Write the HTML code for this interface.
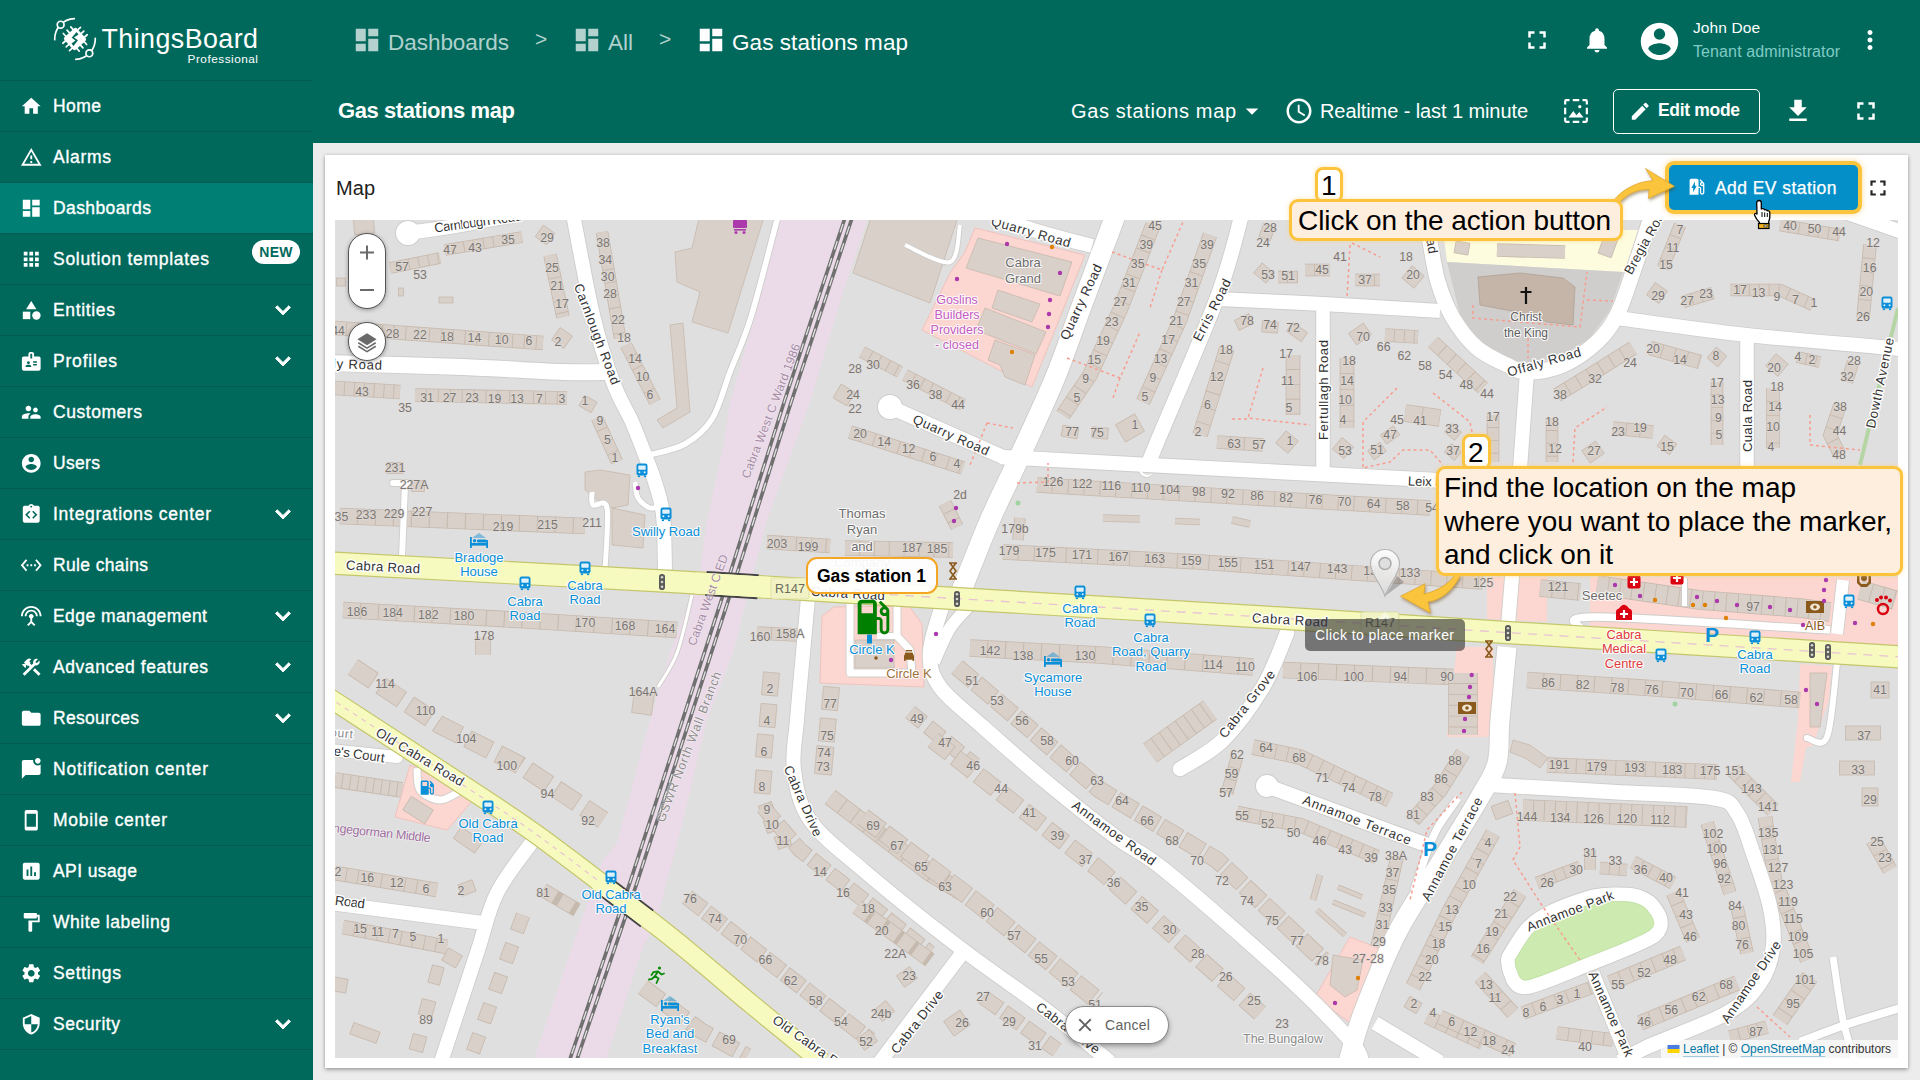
<!DOCTYPE html>
<html lang="en"><head><meta charset="utf-8"><title>ThingsBoard - Gas stations map</title>
<style>
*{box-sizing:border-box;margin:0;padding:0}
html,body{width:1920px;height:1080px;overflow:hidden;background:#eee;font-family:"Liberation Sans",sans-serif;}
.ic{position:absolute;display:block;overflow:visible}
.t{position:absolute;white-space:nowrap;line-height:1}
#sidebar{position:absolute;left:0;top:0;width:313px;height:1080px;background:#00695c;overflow:hidden}
.mi{position:absolute;left:0;width:313px;height:51px;border-top:1px solid rgba(0,0,0,.13)}
.mi.active{background:#008075;border-top-color:#005a4e}
.mi .ic{}
.ml{position:absolute;left:53px;top:0;line-height:50px;font-size:17.5px;color:#fff;white-space:nowrap;font-weight:400;letter-spacing:.2px;-webkit-text-stroke:.35px #fff}
.new{position:absolute;left:252px;top:6px;width:48px;height:24px;border-radius:12px;background:#fff;color:#00695c;font-size:14px;font-weight:700;text-align:center;line-height:24px;letter-spacing:.3px}
#hdr{position:absolute;left:313px;top:0;width:1607px;height:143px;background:#00695c}
#hdr .t{color:#fff}
#content{position:absolute;left:313px;top:143px;width:1607px;height:937px;background:#ececec}
#widget{position:absolute;left:325px;top:155px;width:1583px;height:913px;background:#fff;box-shadow:0 2px 4px rgba(0,0,0,.28),0 0 3px rgba(0,0,0,.16)}
#map{position:absolute;left:335px;top:220px;width:1563px;height:838px;overflow:hidden;background:#e0dfdf}
#map svg.m{position:absolute;left:0;top:0}

</style></head>
<body>
<div id="sidebar"><svg class="ic" style="left:49px;top:13px;width:52px;height:52px" viewBox="0 0 52 52" fill="none" stroke="#fff"><path d="M5.71 26.71 A20.3 20.3 0 0 1 25.29 5.71" stroke-width="1.7" stroke-linecap="round"/><path d="M46.29 25.29 A20.3 20.3 0 0 1 26.71 46.29" stroke-width="1.7" stroke-linecap="round"/><circle cx="11.65" cy="11.65" r="3.400" fill="#00695c" stroke-width="1.7"/><circle cx="40.35" cy="40.35" r="3.400" fill="#00695c" stroke-width="1.7"/><g transform="rotate(48 26 26)" stroke="none" fill="#fff"><rect x="17.5" y="17.5" width="17" height="17" rx="2.2"/><rect x="20.15" y="13.3" width="1.7" height="25.4" rx=".8"/><rect x="13.3" y="20.15" width="25.4" height="1.7" rx=".8"/><rect x="25.15" y="13.3" width="1.7" height="25.4" rx=".8"/><rect x="13.3" y="25.15" width="25.4" height="1.7" rx=".8"/><rect x="30.15" y="13.3" width="1.7" height="25.4" rx=".8"/><rect x="13.3" y="30.15" width="25.4" height="1.7" rx=".8"/></g><path d="M27.5 19 L29.5 21.5 L25 24.5 L29 27.2 L24.5 33 L22.5 30.5 L26.5 27.5 L22.7 24.8 Z" fill="#00695c" stroke="none"/></svg>
<div class="t" style="left:101.500px;top:25.500px;font-size:26.800px;color:#fff;letter-spacing:0.456px">ThingsBoard</div>
<div class="t" style="left:187.500px;top:53.500px;font-size:11.800px;color:#fff;letter-spacing:0.507px">Professional</div>
<div class="mi" style="top:80px"><svg class="ic" style="left:20px;top:13.75px;width:22.5px;height:22.5px" viewBox="0 0 24 24" fill="#fff" ><path d="M10 20v-6h4v6h5v-8h3L12 3 2 12h3v8z"/></svg><span class="ml" style="letter-spacing:0.439px">Home</span></div><div class="mi" style="top:131px"><svg class="ic" style="left:20px;top:13.75px;width:22.5px;height:22.5px" viewBox="0 0 24 24" fill="#fff" ><path d="M12 5.99L19.53 19H4.47L12 5.99M12 2L1 21h22L12 2zm1 14h-2v2h2v-2zm0-6h-2v4h2v-4z"/></svg><span class="ml" style="letter-spacing:0.709px">Alarms</span></div><div class="mi active" style="top:182px"><svg class="ic" style="left:20px;top:13.75px;width:22.5px;height:22.5px" viewBox="0 0 24 24" fill="#fff" ><path d="M3 13h8V3H3v10zm0 8h8v-6H3v6zm10 0h8V11h-8v10zm0-18v6h8V3h-8z"/></svg><span class="ml" style="letter-spacing:0.403px">Dashboards</span></div><div class="mi" style="top:233px"><svg class="ic" style="left:20px;top:13.75px;width:22.5px;height:22.5px" viewBox="0 0 24 24" fill="#fff" ><path d="M4 8h4V4H4v4zm6 12h4v-4h-4v4zm-6 0h4v-4H4v4zm0-6h4v-4H4v4zm6 0h4v-4h-4v4zm6-10v4h4V4h-4zm-6 4h4V4h-4v4zm6 6h4v-4h-4v4zm0 6h4v-4h-4v4z"/></svg><span class="ml" style="letter-spacing:0.707px">Solution templates</span><span class="new">NEW</span></div><div class="mi" style="top:284px"><svg class="ic" style="left:20px;top:13.75px;width:22.5px;height:22.5px" viewBox="0 0 24 24" fill="#fff" ><path d="M12 2l-5.5 9h11z"/><circle cx="17.5" cy="17.5" r="4.5"/><path d="M3 13.500h8v8H3z"/></svg><span class="ml" style="letter-spacing:0.657px">Entities</span><svg class="ic" style="left:267.5px;top:10px;width:30px;height:30px" viewBox="0 0 24 24" fill="#fff" ><path d="M16.590 8.590L12 13.170 7.410 8.590 6 10l6 6 6-6z" stroke="#fff" stroke-width=".7"/></svg></div><div class="mi" style="top:335px"><svg class="ic" style="left:20px;top:13.75px;width:22.5px;height:22.5px" viewBox="0 0 24 24" fill="#fff" ><path d="M20 7h-5V4c0-1.100-.9-2-2-2h-2c-1.100 0-2 .9-2 2v3H4c-1.100 0-2 .9-2 2v11c0 1.100.9 2 2 2h16c1.100 0 2-.9 2-2V9c0-1.100-.9-2-2-2zM9 12c.83 0 1.500.67 1.500 1.500S9.830 15 9 15s-1.500-.67-1.500-1.500S8.170 12 9 12zm3 6H6v-.75c0-1 2-1.500 3-1.500s3 .5 3 1.500V18zm1-9h-2V4h2v5zm5 7.500h-4V15h4v1.500zm0-3h-4V12h4v1.500z"/></svg><span class="ml" style="letter-spacing:0.804px">Profiles</span><svg class="ic" style="left:267.5px;top:10px;width:30px;height:30px" viewBox="0 0 24 24" fill="#fff" ><path d="M16.590 8.590L12 13.170 7.410 8.590 6 10l6 6 6-6z" stroke="#fff" stroke-width=".7"/></svg></div><div class="mi" style="top:386px"><svg class="ic" style="left:20px;top:13.75px;width:22.5px;height:22.5px" viewBox="0 0 24 24" fill="#fff" ><path d="M16.500 12c1.380 0 2.490-1.120 2.490-2.500S17.880 7 16.500 7C15.120 7 14 8.120 14 9.500s1.120 2.500 2.500 2.500zM9 11c1.660 0 2.990-1.340 2.990-3S10.660 5 9 5C7.340 5 6 6.340 6 8s1.340 3 3 3zm7.500 3c-1.830 0-5.500.92-5.500 2.750V19h11v-2.250c0-1.830-3.670-2.750-5.500-2.750zM9 13c-2.330 0-7 1.170-7 3.500V19h7v-2.250c0-.85.33-2.340 2.370-3.470C10.500 13.100 9.660 13 9 13z"/></svg><span class="ml" style="letter-spacing:0.549px">Customers</span></div><div class="mi" style="top:437px"><svg class="ic" style="left:20px;top:13.75px;width:22.5px;height:22.5px" viewBox="0 0 24 24" fill="#fff" ><path d="M12 2C6.480 2 2 6.480 2 12s4.480 10 10 10 10-4.480 10-10S17.520 2 12 2zm0 3c1.660 0 3 1.340 3 3s-1.340 3-3 3-3-1.340-3-3 1.340-3 3-3zm0 14.200c-2.500 0-4.710-1.280-6-3.220.03-1.990 4-3.080 6-3.080 1.990 0 5.970 1.090 6 3.080-1.290 1.940-3.500 3.220-6 3.220z"/></svg><span class="ml" style="letter-spacing:0.324px">Users</span></div><div class="mi" style="top:488px"><svg class="ic" style="left:20px;top:13.75px;width:22.5px;height:22.5px" viewBox="0 0 24 24" fill="#fff" ><path fill-rule="evenodd" d="M19 3h-4.180C14.400 1.840 13.300 1 12 1s-2.400.84-2.820 2H5c-1.100 0-2 .9-2 2v14c0 1.100.9 2 2 2h14c1.100 0 2-.9 2-2V5c0-1.100-.9-2-2-2zm-7 0c.55 0 1 .45 1 1s-.45 1-1 1-1-.45-1-1 .45-1 1-1zM11 9.400L9.800 8.200 5.500 12.500l4.300 4.300L11 15.600 7.900 12.500zM13 9.400l1.200-1.200 4.300 4.300-4.300 4.300L13 15.600l3.100-3.100z"/></svg><span class="ml" style="letter-spacing:0.725px">Integrations center</span><svg class="ic" style="left:267.5px;top:10px;width:30px;height:30px" viewBox="0 0 24 24" fill="#fff" ><path d="M16.590 8.590L12 13.170 7.410 8.590 6 10l6 6 6-6z" stroke="#fff" stroke-width=".7"/></svg></div><div class="mi" style="top:539px"><svg class="ic" style="left:20px;top:13.75px;width:22.5px;height:22.5px" viewBox="0 0 24 24" fill="#fff" ><path d="M7.770 6.760L6.230 5.480.82 12l5.410 6.520 1.540-1.280L3.420 12l4.350-5.240zM7 13h2v-2H7v2zm10-2h-2v2h2v-2zm-6 2h2v-2h-2v2zm6.770-7.520l-1.540 1.280L20.580 12l-4.350 5.240 1.540 1.280L23.180 12l-5.410-6.520z"/></svg><span class="ml" style="letter-spacing:0.356px">Rule chains</span></div><div class="mi" style="top:590px"><svg class="ic" style="left:20px;top:13.75px;width:22.5px;height:22.5px" viewBox="0 0 24 24" fill="#fff" ><path d="M12 5c-3.870 0-7 3.130-7 7h2c0-2.760 2.240-5 5-5s5 2.240 5 5h2c0-3.870-3.130-7-7-7zm1 9.290c.88-.39 1.500-1.260 1.500-2.290 0-1.380-1.120-2.500-2.500-2.500S9.500 10.620 9.500 12c0 1.020.62 1.900 1.500 2.290v3.300L7.590 21 9 22.410l3-3 3 3L16.410 21 13 17.590v-3.300zM12 1C5.930 1 1 5.930 1 12h2c0-4.970 4.030-9 9-9s9 4.030 9 9h2c0-6.070-4.930-11-11-11z"/></svg><span class="ml" style="letter-spacing:0.436px">Edge management</span><svg class="ic" style="left:267.5px;top:10px;width:30px;height:30px" viewBox="0 0 24 24" fill="#fff" ><path d="M16.590 8.590L12 13.170 7.410 8.590 6 10l6 6 6-6z" stroke="#fff" stroke-width=".7"/></svg></div><div class="mi" style="top:641px"><svg class="ic" style="left:20px;top:13.75px;width:22.5px;height:22.5px" viewBox="0 0 24 24" fill="#fff" ><path d="M13.783 15.172l2.121-2.121 5.996 5.996-2.121 2.121z"/><path d="M17.500 10c1.930 0 3.500-1.570 3.500-3.500 0-.58-.16-1.120-.41-1.600l-2.700 2.700-1.490-1.490 2.700-2.700c-.48-.25-1.020-.41-1.600-.41C15.570 3 14 4.570 14 6.500c0 .41.08.8.21 1.160l-1.850 1.850-1.780-1.780.71-.71-1.410-1.410L12 3.490c-1.170-1.170-3.070-1.170-4.240 0L4.220 7.030l1.410 1.410H2.810l-.71.71 3.540 3.540.71-.71V9.150l1.410 1.410.71-.71 1.780 1.780-7.410 7.410 2.120 2.120L16.340 9.790c.36.130.75.210 1.160.210z"/></svg><span class="ml" style="letter-spacing:0.566px">Advanced features</span><svg class="ic" style="left:267.5px;top:10px;width:30px;height:30px" viewBox="0 0 24 24" fill="#fff" ><path d="M16.590 8.590L12 13.170 7.410 8.590 6 10l6 6 6-6z" stroke="#fff" stroke-width=".7"/></svg></div><div class="mi" style="top:692px"><svg class="ic" style="left:20px;top:13.75px;width:22.5px;height:22.5px" viewBox="0 0 24 24" fill="#fff" ><path d="M10 4H4c-1.100 0-1.990.9-1.990 2L2 18c0 1.100.9 2 2 2h16c1.100 0 2-.9 2-2V8c0-1.100-.9-2-2-2h-8l-2-2z"/></svg><span class="ml" style="letter-spacing:0.293px">Resources</span><svg class="ic" style="left:267.5px;top:10px;width:30px;height:30px" viewBox="0 0 24 24" fill="#fff" ><path d="M16.590 8.590L12 13.170 7.410 8.590 6 10l6 6 6-6z" stroke="#fff" stroke-width=".7"/></svg></div><div class="mi" style="top:743px"><svg class="ic" style="left:20px;top:13.75px;width:22.5px;height:22.5px" viewBox="0 0 24 24" fill="#fff" ><path d="M22 6.980V16c0 1.100-.9 2-2 2H6l-4 4V4c0-1.100.9-2 2-2h10.100c-.06.32-.1.66-.1 1 0 2.760 2.240 5 5 5 1.130 0 2.160-.39 3-1.020zM16 3c0 1.660 1.340 3 3 3s3-1.340 3-3-1.340-3-3-3-3 1.340-3 3z"/></svg><span class="ml" style="letter-spacing:0.829px">Notification center</span></div><div class="mi" style="top:794px"><svg class="ic" style="left:20px;top:13.75px;width:22.5px;height:22.5px" viewBox="0 0 24 24" fill="#fff" ><path d="M17 1.010L7 1c-1.100 0-2 .9-2 2v18c0 1.100.9 2 2 2h10c1.100 0 2-.9 2-2V3c0-1.100-.9-1.990-2-1.990zM17 19H7V5h10v14z"/></svg><span class="ml" style="letter-spacing:0.745px">Mobile center</span></div><div class="mi" style="top:845px"><svg class="ic" style="left:20px;top:13.75px;width:22.5px;height:22.5px" viewBox="0 0 24 24" fill="#fff" ><path d="M19 3H5c-1.100 0-2 .9-2 2v14c0 1.100.9 2 2 2h14c1.100 0 2-.9 2-2V5c0-1.100-.9-2-2-2zM9 17H7v-7h2v7zm4 0h-2V7h2v10zm4 0h-2v-4h2v4z"/></svg><span class="ml" style="letter-spacing:0.405px">API usage</span></div><div class="mi" style="top:896px"><svg class="ic" style="left:20px;top:13.75px;width:22.5px;height:22.5px" viewBox="0 0 24 24" fill="#fff" ><path d="M18 4V3c0-.55-.45-1-1-1H5c-.55 0-1 .45-1 1v4c0 .55.45 1 1 1h12c.55 0 1-.45 1-1V6h1v4H9v11c0 .55.45 1 1 1h2c.55 0 1-.45 1-1v-9h8V4h-3z"/></svg><span class="ml" style="letter-spacing:0.544px">White labeling</span></div><div class="mi" style="top:947px"><svg class="ic" style="left:20px;top:13.75px;width:22.5px;height:22.5px" viewBox="0 0 24 24" fill="#fff" ><path d="M19.140 12.940c.04-.3.06-.61.06-.94 0-.32-.02-.64-.07-.94l2.030-1.580c.18-.14.23-.41.12-.61l-1.920-3.320c-.12-.22-.37-.29-.59-.22l-2.390.96c-.5-.38-1.030-.7-1.620-.94l-.36-2.540c-.04-.24-.24-.41-.48-.41h-3.840c-.24 0-.43.17-.47.41l-.36 2.540c-.59.24-1.130.57-1.620.94l-2.390-.96c-.22-.08-.47 0-.59.22L2.740 8.870c-.12.21-.08.47.12.61l2.030 1.580c-.05.3-.09.63-.09.94s.02.64.07.94l-2.030 1.580c-.18.14-.23.41-.12.61l1.920 3.320c.12.22.37.29.59.22l2.390-.96c.5.38 1.030.7 1.620.94l.36 2.540c.05.24.24.41.48.41h3.840c.24 0 .44-.17.47-.41l.36-2.540c.59-.24 1.130-.56 1.620-.94l2.390.96c.22.08.47 0 .59-.22l1.920-3.320c.12-.22.07-.47-.12-.61l-2.010-1.580zM12 15.600c-1.980 0-3.600-1.620-3.600-3.600s1.620-3.600 3.600-3.600 3.600 1.620 3.600 3.600-1.620 3.600-3.600 3.600z"/></svg><span class="ml" style="letter-spacing:0.679px">Settings</span></div><div class="mi" style="top:998px"><svg class="ic" style="left:20px;top:13.75px;width:22.5px;height:22.5px" viewBox="0 0 24 24" fill="#fff" ><path d="M12 1L3 5v6c0 5.550 3.840 10.740 9 12 5.160-1.260 9-6.450 9-12V5l-9-4zm0 10.990h7c-.53 4.120-3.280 7.790-7 8.940V12H5V6.300l7-3.110v8.800z"/></svg><span class="ml" style="letter-spacing:0.539px">Security</span><svg class="ic" style="left:267.5px;top:10px;width:30px;height:30px" viewBox="0 0 24 24" fill="#fff" ><path d="M16.590 8.590L12 13.170 7.410 8.590 6 10l6 6 6-6z" stroke="#fff" stroke-width=".7"/></svg></div><div class="mi" style="top:1049px;height:1px"></div></div>
<div id="hdr"></div>
<div id="content"></div>
<svg class="ic" style="left:352px;top:25px;width:30px;height:30px" viewBox="0 0 24 24" fill="rgba(255,255,255,.7)" ><path d="M3 13h8V3H3v10zm0 8h8v-6H3v6zm10 0h8V11h-8v10zm0-18v6h8V3h-8z"/></svg>
<div class="t" style="left:388px;top:32px;font-size:22.5px;color:rgba(255,255,255,.7);letter-spacing:-0.036px">Dashboards</div>
<div class="t" style="left:535px;top:28px;font-size:21px;color:rgba(255,255,255,.7);letter-spacing:-0.266px">&gt;</div>
<svg class="ic" style="left:571.5px;top:25px;width:30px;height:30px" viewBox="0 0 24 24" fill="rgba(255,255,255,.7)" ><path d="M3 13h8V3H3v10zm0 8h8v-6H3v6zm10 0h8V11h-8v10zm0-18v6h8V3h-8z"/></svg>
<div class="t" style="left:608px;top:32px;font-size:22.5px;color:rgba(255,255,255,.7);letter-spacing:-0.008px">All</div>
<div class="t" style="left:659px;top:28px;font-size:21px;color:rgba(255,255,255,.7);letter-spacing:-0.266px">&gt;</div>
<svg class="ic" style="left:695.5px;top:25px;width:30px;height:30px" viewBox="0 0 24 24" fill="#fff" ><path d="M3 13h8V3H3v10zm0 8h8v-6H3v6zm10 0h8V11h-8v10zm0-18v6h8V3h-8z"/></svg>
<div class="t" style="left:732px;top:32px;font-size:22.5px;color:#fff;letter-spacing:0.061px">Gas stations map</div>
<div class="t" style="left:338px;top:100px;font-size:22px;font-weight:700;color:#fff;letter-spacing:-0.426px">Gas stations map</div>
<svg class="ic" style="left:1522px;top:25px;width:30px;height:30px" viewBox="0 0 24 24" fill="#fff" ><path d="M7 14H5v5h5v-2H7v-3zm-2-4h2V7h3V5H5v5zm12 7h-3v2h5v-5h-2v3zM14 5v2h3v3h2V5h-5z"/></svg>
<svg class="ic" style="left:1582px;top:25px;width:30px;height:30px" viewBox="0 0 24 24" fill="#fff" ><path d="M12 22c1.100 0 2-.9 2-2h-4c0 1.100.89 2 2 2zm6-6v-5c0-3.070-1.640-5.640-4.500-6.320V4c0-.83-.67-1.500-1.500-1.500s-1.500.67-1.500 1.500v.68C7.630 5.360 6 7.920 6 11v5l-2 2v1h16v-1l-2-2z"/></svg>
<svg class="ic" style="left:1637px;top:18.500px;width:45px;height:45px" viewBox="0 0 24 24" fill="#fff" ><path d="M12 2C6.480 2 2 6.480 2 12s4.480 10 10 10 10-4.480 10-10S17.520 2 12 2zm0 3c1.660 0 3 1.340 3 3s-1.340 3-3 3-3-1.340-3-3 1.340-3 3-3zm0 14.200c-2.500 0-4.710-1.280-6-3.220.03-1.990 4-3.080 6-3.080 1.990 0 5.970 1.090 6 3.080-1.290 1.940-3.500 3.220-6 3.220z"/></svg>
<div class="t" style="left:1693px;top:20px;font-size:15.500px;color:#fff;letter-spacing:0.092px">John Doe</div>
<div class="t" style="left:1693px;top:44px;font-size:16px;color:#80cbc4;letter-spacing:0.107px">Tenant administrator</div>
<svg class="ic" style="left:1854.500px;top:25px;width:30px;height:30px" viewBox="0 0 24 24" fill="#fff" ><path d="M12 8c1.100 0 2-.9 2-2s-.9-2-2-2-2 .9-2 2 .9 2 2 2zm0 2c-1.100 0-2 .9-2 2s.9 2 2 2 2-.9 2-2-.9-2-2-2zm0 6c-1.100 0-2 .9-2 2s.9 2 2 2 2-.9 2-2-.9-2-2-2z"/></svg>
<div class="t" style="left:1071px;top:101px;font-size:20px;color:#fff;letter-spacing:0.625px">Gas stations map</div>
<svg class="ic" style="left:1237px;top:96px;width:30px;height:30px" viewBox="0 0 24 24" fill="#fff" ><path d="M7 10l5 5 5-5z"/></svg>
<svg class="ic" style="left:1284px;top:96px;width:30px;height:30px" viewBox="0 0 24 24" fill="#fff" ><path d="M11.990 2C6.470 2 2 6.480 2 12s4.470 10 9.990 10C17.520 22 22 17.520 22 12S17.520 2 11.990 2zM12 20c-4.420 0-8-3.580-8-8s3.580-8 8-8 8 3.580 8 8-3.580 8-8 8zm.5-13H11v6l5.250 3.150.75-1.230-4.500-2.670z"/></svg>
<div class="t" style="left:1320px;top:101px;font-size:20px;color:#fff;letter-spacing:-0.090px">Realtime - last 1 minute</div>
<svg class="ic" style="left:1563px;top:98px;width:26px;height:26px" viewBox="0 0 24 24" fill="#fff" ><path d="M3 6V3h3V1H3a2 2 0 0 0-2 2v3h2zm3 15H3v-3H1v3a2 2 0 0 0 2 2h3v-2zm15-3v3h-3v2h3a2 2 0 0 0 2-2v-3h-2zM18 3h3v3h2V3a2 2 0 0 0-2-2h-3v2zM9 1h6v2H9zM9 21h6v2H9zM1 9h2v6H1zM21 9h2v6h-2z"/><path d="M5 18l4.500-6 3 4 2.500-3 4 5z"/><circle cx="15.500" cy="8" r="1.500"/></svg>
<div style="position:absolute;left:1613px;top:89px;width:147px;height:45px;border:1px solid #fff;border-radius:5px"></div>
<svg class="ic" style="left:1629px;top:100px;width:22.500px;height:22.500px" viewBox="0 0 24 24" fill="#fff" ><path d="M3 17.250V21h3.750L17.810 9.940l-3.750-3.750L3 17.250zM20.710 7.040c.39-.39.39-1.020 0-1.410l-2.340-2.340c-.39-.39-1.020-.39-1.410 0l-1.830 1.830 3.750 3.750 1.830-1.830z"/></svg>
<div class="t" style="left:1658px;top:102px;font-size:17.500px;font-weight:700;color:#fff;letter-spacing:-0.324px">Edit mode</div>
<svg class="ic" style="left:1782.500px;top:96px;width:30px;height:30px" viewBox="0 0 24 24" fill="#fff" ><path d="M19 9h-4V3H9v6H5l7 7 7-7zM5 18v2h14v-2H5z"/></svg>
<svg class="ic" style="left:1850.500px;top:96px;width:30px;height:30px" viewBox="0 0 24 24" fill="#fff" ><path d="M7 14H5v5h5v-2H7v-3zm-2-4h2V7h3V5H5v5zm12 7h-3v2h5v-5h-2v3zM14 5v2h3v3h2V5h-5z"/></svg>

<div id="widget"></div>
<div class="t" style="left:336px;top:178px;font-size:20px;color:#212121;letter-spacing:0.047px">Map</div>
<div id="map">
<svg class="m" width="1563" height="838" viewBox="335 220 1563 838" font-family="'Liberation Sans','DejaVu Sans',sans-serif">
<defs><clipPath id="cpE"><rect x="770" y="500" width="1200" height="220"/></clipPath><clipPath id="cpW"><rect x="300" y="650" width="310" height="250"/></clipPath></defs>
<rect x="335" y="220" width="1563" height="838" fill="#e0dfdf"/>
<polygon points="780.0,214.0 760.0,298.0 730.0,402.0 723.0,448.0 707.0,520.0 700.0,573.0 670.0,653.0 650.0,720.0 617.0,843.0 603.0,860.0 570.0,953.0 533.0,1062.0 605.0,1062.0 643.0,947.0 657.0,920.0 683.0,820.0 707.0,720.0 733.0,653.0 753.0,573.0 767.0,520.0 810.0,402.0 843.0,292.0 869.0,214.0" fill="#ebdbe8"/>
<polygon points="975.0,228.0 1085.0,255.0 1032.0,387.0 922.0,330.0 950.0,273.0 965.0,252.0" fill="#fcd6d0" stroke="#f0bdb6" stroke-width="0.8"/>
<polygon points="822.0,616.0 834.0,607.0 909.0,606.0 922.0,624.0 924.0,687.0 820.0,683.0" fill="#fcd6d0" stroke="#f0bdb6" stroke-width="0.8"/>
<polygon points="395.0,817.0 410.0,765.0 440.0,780.0 473.0,800.0 447.0,830.0" fill="#fcd6d0" stroke="#f0bdb6" stroke-width="0.8"/>
<polygon points="1487.0,577.0 1547.0,577.0 1547.0,622.0 1487.0,619.0" fill="#fcd6d0"/>
<polygon points="1590.0,577.0 1898.0,577.0 1898.0,646.0 1590.0,627.0" fill="#fcd6d0"/>
<polygon points="1457.0,647.0 1493.0,647.0 1493.0,737.0 1447.0,737.0" fill="#fcd6d0"/>
<polygon points="1800.0,664.0 1832.0,666.0 1829.0,700.0 1813.0,745.0 1806.0,748.0 1800.0,782.0 1791.0,782.0 1798.0,720.0" fill="#fcd6d0"/>
<polygon points="1350.0,937.0 1383.0,950.0 1350.0,1023.0 1315.0,997.0" fill="#fcd6d0" stroke="#f0bdb6" stroke-width="0.8"/>
<polygon points="1443.0,230.0 1647.0,230.0 1623.0,272.0 1447.0,262.0" fill="#fdfcde"/>
<polygon points="1447.0,262.0 1623.0,272.0 1610.0,310.0 1590.0,338.0 1560.0,357.0 1527.0,363.0 1500.0,357.0 1478.0,340.0 1460.0,315.0" fill="#cfcecd"/>
<path d="M1898 308 L1860 465" stroke="#b5d6a4" stroke-width="4" fill="none"/>
<rect x="354.0" y="218.0" width="20" height="16" fill="#d9d0c9" stroke="#c6b9ad" stroke-width=".8" transform="rotate(-5 364 226)"/>
<rect x="336.5" y="278.0" width="9" height="8" fill="#d9d0c9" stroke="#c6b9ad" stroke-width=".8" transform="rotate(0 341 282)"/>
<rect x="398.5" y="288.0" width="5" height="8" fill="#d9d0c9" stroke="#c6b9ad" stroke-width=".8" transform="rotate(0 401 292)"/>
<rect x="439.0" y="297.0" width="14" height="6" fill="#d9d0c9" stroke="#c6b9ad" stroke-width=".8" transform="rotate(0 446 300)"/>
<path d="M390.0 268.0 L440.0 258.0" stroke="#c6b9ad" stroke-width="11.6" fill="none"/>
<path d="M390.0 268.0 L440.0 258.0" stroke="#d9d0c9" stroke-width="10" fill="none" stroke-dasharray="9 .9"/>
<path d="M445.0 250.0 L522.0 237.0" stroke="#c6b9ad" stroke-width="11.6" fill="none"/>
<path d="M445.0 250.0 L522.0 237.0" stroke="#d9d0c9" stroke-width="10" fill="none" stroke-dasharray="9 .9"/>
<rect x="538.0" y="228.0" width="14" height="14" fill="#d9d0c9" stroke="#c6b9ad" stroke-width=".8" transform="rotate(35 545 235)"/>
<path d="M550.0 255.0 L563.0 317.0" stroke="#c6b9ad" stroke-width="13.6" fill="none"/>
<path d="M550.0 255.0 L563.0 317.0" stroke="#d9d0c9" stroke-width="12" fill="none" stroke-dasharray="11 .9"/>
<path d="M335.0 328.0 L543.0 343.0" stroke="#c6b9ad" stroke-width="14.6" fill="none"/>
<path d="M335.0 328.0 L543.0 343.0" stroke="#d9d0c9" stroke-width="13" fill="none" stroke-dasharray="11 .9"/>
<rect x="554.5" y="330.5" width="15" height="15" fill="#d9d0c9" stroke="#c6b9ad" stroke-width=".8" transform="rotate(35 562 338)"/>
<path d="M335.0 388.0 L400.0 392.0" stroke="#c6b9ad" stroke-width="14.6" fill="none"/>
<path d="M335.0 388.0 L400.0 392.0" stroke="#d9d0c9" stroke-width="13" fill="none" stroke-dasharray="9 .9"/>
<path d="M415.0 395.0 L567.0 398.0" stroke="#c6b9ad" stroke-width="13.6" fill="none"/>
<path d="M415.0 395.0 L567.0 398.0" stroke="#d9d0c9" stroke-width="12" fill="none" stroke-dasharray="11 .9"/>
<rect x="581.0" y="398.0" width="14" height="12" fill="#d9d0c9" stroke="#c6b9ad" stroke-width=".8" transform="rotate(30 588 404)"/>
<path d="M597.0 418.0 L617.0 462.0" stroke="#c6b9ad" stroke-width="12.6" fill="none"/>
<path d="M597.0 418.0 L617.0 462.0" stroke="#d9d0c9" stroke-width="11" fill="none" stroke-dasharray="12 .9"/>
<path d="M602.0 232.0 L620.0 338.0" stroke="#c6b9ad" stroke-width="12.6" fill="none"/>
<path d="M602.0 232.0 L620.0 338.0" stroke="#d9d0c9" stroke-width="11" fill="none" stroke-dasharray="12 .9"/>
<path d="M626.0 345.0 L655.0 402.0" stroke="#c6b9ad" stroke-width="12.6" fill="none"/>
<path d="M626.0 345.0 L655.0 402.0" stroke="#d9d0c9" stroke-width="11" fill="none" stroke-dasharray="12 .9"/>
<polygon points="670.0,325.0 683.0,323.0 690.0,412.0 663.0,428.0 657.0,420.0 677.0,408.0" fill="#d9d0c9" stroke="#c6b9ad" stroke-width=".8"/>
<path d="M340.0 516.0 L585.0 526.0" stroke="#c6b9ad" stroke-width="16.6" fill="none"/>
<path d="M340.0 516.0 L585.0 526.0" stroke="#d9d0c9" stroke-width="15" fill="none" stroke-dasharray="17 1"/>
<rect x="387.0" y="462.5" width="16" height="11" fill="#d9d0c9" stroke="#c6b9ad" stroke-width=".8" transform="rotate(0 395 468)"/>
<rect x="411.5" y="480.5" width="13" height="11" fill="#d9d0c9" stroke="#c6b9ad" stroke-width=".8" transform="rotate(0 418 486)"/>
<polygon points="585.0,472.0 600.0,470.0 630.0,475.0 628.0,505.0 612.0,508.0 598.0,500.0 585.0,490.0" fill="#d9d0c9" stroke="#c6b9ad" stroke-width=".8"/>
<polygon points="612.0,508.0 645.0,515.0 643.0,548.0 612.0,545.0" fill="#d9d0c9" stroke="#c6b9ad" stroke-width=".8"/>
<polygon points="700.0,214.0 765.0,214.0 728.0,333.0 692.0,322.0 700.0,292.0 677.0,282.0 675.0,252.0 692.0,248.0" fill="#d9d0c9" stroke="#c6b9ad" stroke-width=".8"/>
<polygon points="872.0,214.0 959.0,214.0 930.0,303.0 853.0,273.0" fill="#d9d0c9" stroke="#c6b9ad" stroke-width=".8"/>
<path d="M862.0 352.0 L900.0 372.0" stroke="#c6b9ad" stroke-width="12.6" fill="none"/>
<path d="M862.0 352.0 L900.0 372.0" stroke="#d9d0c9" stroke-width="11" fill="none" stroke-dasharray="9 .9"/>
<path d="M905.0 375.0 L963.0 405.0" stroke="#c6b9ad" stroke-width="12.6" fill="none"/>
<path d="M905.0 375.0 L963.0 405.0" stroke="#d9d0c9" stroke-width="11" fill="none" stroke-dasharray="9 .9"/>
<rect x="836.0" y="387.0" width="16" height="16" fill="#d9d0c9" stroke="#c6b9ad" stroke-width=".8" transform="rotate(30 844 395)"/>
<path d="M850.0 432.0 L963.0 468.0" stroke="#c6b9ad" stroke-width="13.6" fill="none"/>
<path d="M850.0 432.0 L963.0 468.0" stroke="#d9d0c9" stroke-width="12" fill="none" stroke-dasharray="12 .9"/>
<path d="M767.0 542.0 L830.0 546.0" stroke="#c6b9ad" stroke-width="14.6" fill="none"/>
<path d="M767.0 542.0 L830.0 546.0" stroke="#d9d0c9" stroke-width="13" fill="none" stroke-dasharray="14 .9"/>
<path d="M845.0 548.0 L953.0 550.0" stroke="#c6b9ad" stroke-width="15.6" fill="none"/>
<path d="M845.0 548.0 L953.0 550.0" stroke="#d9d0c9" stroke-width="14" fill="none" stroke-dasharray="14 .9"/>
<path d="M945.0 503.0 L957.0 527.0" stroke="#c6b9ad" stroke-width="13.6" fill="none"/>
<path d="M945.0 503.0 L957.0 527.0" stroke="#d9d0c9" stroke-width="12" fill="none" stroke-dasharray="9 .9"/>
<polygon points="978.0,238.0 1072.0,262.0 1060.0,296.0 966.0,268.0" fill="#d9d0c9" stroke="#c6b9ad" stroke-width=".8"/>
<polygon points="998.0,290.0 1040.0,304.0 1032.0,322.0 992.0,308.0" fill="#d9d0c9" stroke="#c6b9ad" stroke-width=".8"/>
<polygon points="985.0,308.0 1046.0,332.0 1036.0,354.0 976.0,330.0" fill="#d9d0c9" stroke="#c6b9ad" stroke-width=".8"/>
<polygon points="995.0,340.0 1035.0,355.0 1025.0,385.0 1005.0,377.0 1000.0,365.0 988.0,360.0" fill="#d9d0c9" stroke="#c6b9ad" stroke-width=".8"/>
<path d="M1153.0 225.0 L1120.0 310.0 L1090.0 375.0 L1063.0 415.0" stroke="#c6b9ad" stroke-width="15.6" fill="none"/>
<path d="M1153.0 225.0 L1120.0 310.0 L1090.0 375.0 L1063.0 415.0" stroke="#d9d0c9" stroke-width="14" fill="none" stroke-dasharray="13 .9"/>
<path d="M1210.0 235.0 L1180.0 320.0 L1143.0 402.0" stroke="#c6b9ad" stroke-width="14.6" fill="none"/>
<path d="M1210.0 235.0 L1180.0 320.0 L1143.0 402.0" stroke="#d9d0c9" stroke-width="13" fill="none" stroke-dasharray="13 .9"/>
<rect x="1062.0" y="426.5" width="16" height="11" fill="#d9d0c9" stroke="#c6b9ad" stroke-width=".8" transform="rotate(10 1070 432)"/>
<rect x="1092.0" y="427.5" width="16" height="11" fill="#d9d0c9" stroke="#c6b9ad" stroke-width=".8" transform="rotate(5 1100 433)"/>
<rect x="1119.0" y="418.0" width="22" height="20" fill="#d9d0c9" stroke="#c6b9ad" stroke-width=".8" transform="rotate(-30 1130 428)"/>
<path d="M1227.0 348.0 L1200.0 435.0" stroke="#c6b9ad" stroke-width="15.6" fill="none"/>
<path d="M1227.0 348.0 L1200.0 435.0" stroke="#d9d0c9" stroke-width="14" fill="none" stroke-dasharray="15 .9"/>
<rect x="1236.0" y="316.5" width="16" height="11" fill="#d9d0c9" stroke="#c6b9ad" stroke-width=".8" transform="rotate(-25 1244 322)"/>
<rect x="1262.0" y="321.5" width="16" height="11" fill="#d9d0c9" stroke="#c6b9ad" stroke-width=".8" transform="rotate(5 1270 327)"/>
<rect x="1288.0" y="326.5" width="18" height="11" fill="#d9d0c9" stroke="#c6b9ad" stroke-width=".8" transform="rotate(35 1297 332)"/>
<path d="M1293.0 355.0 L1293.0 415.0" stroke="#c6b9ad" stroke-width="14.6" fill="none"/>
<path d="M1293.0 355.0 L1293.0 415.0" stroke="#d9d0c9" stroke-width="13" fill="none" stroke-dasharray="14 .9"/>
<path d="M1217.0 442.0 L1263.0 445.0" stroke="#c6b9ad" stroke-width="13.6" fill="none"/>
<path d="M1217.0 442.0 L1263.0 445.0" stroke="#d9d0c9" stroke-width="12" fill="none" stroke-dasharray="13 .9"/>
<rect x="1279.0" y="434.0" width="16" height="16" fill="#d9d0c9" stroke="#c6b9ad" stroke-width=".8" transform="rotate(40 1287 442)"/>
<path d="M1347.0 358.0 L1347.0 428.0" stroke="#c6b9ad" stroke-width="14.6" fill="none"/>
<path d="M1347.0 358.0 L1347.0 428.0" stroke="#d9d0c9" stroke-width="13" fill="none" stroke-dasharray="15 .9"/>
<rect x="1351.0" y="327.0" width="18" height="14" fill="#d9d0c9" stroke="#c6b9ad" stroke-width=".8" transform="rotate(-35 1360 334)"/>
<path d="M1385.0 335.0 L1418.0 337.0" stroke="#c6b9ad" stroke-width="13.6" fill="none"/>
<path d="M1385.0 335.0 L1418.0 337.0" stroke="#d9d0c9" stroke-width="12" fill="none" stroke-dasharray="9 .9"/>
<path d="M1433.0 342.0 L1483.0 388.0" stroke="#c6b9ad" stroke-width="14.6" fill="none"/>
<path d="M1433.0 342.0 L1483.0 388.0" stroke="#d9d0c9" stroke-width="13" fill="none" stroke-dasharray="12 .9"/>
<path d="M1405.0 413.0 L1440.0 418.0" stroke="#c6b9ad" stroke-width="17.6" fill="none"/>
<path d="M1405.0 413.0 L1440.0 418.0" stroke="#d9d0c9" stroke-width="16" fill="none" stroke-dasharray="17 .9"/>
<rect x="1382.0" y="429.5" width="16" height="11" fill="#d9d0c9" stroke="#c6b9ad" stroke-width=".8" transform="rotate(-35 1390 435)"/>
<rect x="1369.5" y="445.5" width="15" height="11" fill="#d9d0c9" stroke="#c6b9ad" stroke-width=".8" transform="rotate(-35 1377 451)"/>
<rect x="1335.5" y="440.5" width="15" height="15" fill="#d9d0c9" stroke="#c6b9ad" stroke-width=".8" transform="rotate(40 1343 448)"/>
<rect x="1446.5" y="426.5" width="13" height="11" fill="#d9d0c9" stroke="#c6b9ad" stroke-width=".8" transform="rotate(40 1453 432)"/>
<rect x="1446.5" y="446.5" width="13" height="11" fill="#d9d0c9" stroke="#c6b9ad" stroke-width=".8" transform="rotate(40 1453 452)"/>
<rect x="1256.0" y="266.5" width="16" height="13" fill="#d9d0c9" stroke="#c6b9ad" stroke-width=".8" transform="rotate(40 1264 273)"/>
<path d="M1278.0 277.0 L1298.0 277.0" stroke="#c6b9ad" stroke-width="12.6" fill="none"/>
<path d="M1278.0 277.0 L1298.0 277.0" stroke="#d9d0c9" stroke-width="11" fill="none" stroke-dasharray="9 .9"/>
<path d="M1305.0 270.0 L1330.0 270.0" stroke="#c6b9ad" stroke-width="12.6" fill="none"/>
<path d="M1305.0 270.0 L1330.0 270.0" stroke="#d9d0c9" stroke-width="11" fill="none" stroke-dasharray="9 .9"/>
<path d="M1355.0 280.0 L1380.0 280.0" stroke="#c6b9ad" stroke-width="12.6" fill="none"/>
<path d="M1355.0 280.0 L1380.0 280.0" stroke="#d9d0c9" stroke-width="11" fill="none" stroke-dasharray="9 .9"/>
<rect x="1405.0" y="269.0" width="16" height="16" fill="#d9d0c9" stroke="#c6b9ad" stroke-width=".8" transform="rotate(40 1413 277)"/>
<rect x="1261.0" y="225.0" width="12" height="14" fill="#d9d0c9" stroke="#c6b9ad" stroke-width=".8" transform="rotate(20 1267 232)"/>
<path d="M1037.0 485.0 L1240.0 497.0 L1430.0 508.0" stroke="#c6b9ad" stroke-width="15.6" fill="none"/>
<path d="M1037.0 485.0 L1240.0 497.0 L1430.0 508.0" stroke="#d9d0c9" stroke-width="14" fill="none" stroke-dasharray="15 .9"/>
<path d="M1003.0 552.0 L1200.0 562.0 L1483.0 582.0" stroke="#c6b9ad" stroke-width="15.6" fill="none"/>
<path d="M1003.0 552.0 L1200.0 562.0 L1483.0 582.0" stroke="#d9d0c9" stroke-width="14" fill="none" stroke-dasharray="15 .9"/>
<path d="M1103.0 518.0 L1140.0 519.0" stroke="#c6b9ad" stroke-width="7.6" fill="none"/>
<path d="M1103.0 518.0 L1140.0 519.0" stroke="#d9d0c9" stroke-width="6" fill="none"/>
<path d="M1175.0 521.0 L1200.0 522.0" stroke="#c6b9ad" stroke-width="6.6" fill="none"/>
<path d="M1175.0 521.0 L1200.0 522.0" stroke="#d9d0c9" stroke-width="5" fill="none"/>
<path d="M1232.0 520.0 L1250.0 524.0" stroke="#c6b9ad" stroke-width="7.6" fill="none"/>
<path d="M1232.0 520.0 L1250.0 524.0" stroke="#d9d0c9" stroke-width="6" fill="none"/>
<path d="M1020.0 518.0 L1018.0 540.0" stroke="#c6b9ad" stroke-width="11.6" fill="none"/>
<path d="M1020.0 518.0 L1018.0 540.0" stroke="#d9d0c9" stroke-width="10" fill="none"/>
<path d="M1493.0 415.0 L1493.0 462.0" stroke="#c6b9ad" stroke-width="12.6" fill="none"/>
<path d="M1493.0 415.0 L1493.0 462.0" stroke="#d9d0c9" stroke-width="11" fill="none" stroke-dasharray="12 .9"/>
<path d="M1552.0 418.0 L1552.0 462.0" stroke="#c6b9ad" stroke-width="12.6" fill="none"/>
<path d="M1552.0 418.0 L1552.0 462.0" stroke="#d9d0c9" stroke-width="11" fill="none" stroke-dasharray="12 .9"/>
<path d="M1557.0 395.0 L1590.0 375.0 L1633.0 348.0" stroke="#c6b9ad" stroke-width="14.6" fill="none"/>
<path d="M1557.0 395.0 L1590.0 375.0 L1633.0 348.0" stroke="#d9d0c9" stroke-width="13" fill="none" stroke-dasharray="12 .9"/>
<path d="M1650.0 348.0 L1700.0 362.0" stroke="#c6b9ad" stroke-width="14.6" fill="none"/>
<path d="M1650.0 348.0 L1700.0 362.0" stroke="#d9d0c9" stroke-width="13" fill="none" stroke-dasharray="12 .9"/>
<rect x="1710.0" y="350.0" width="14" height="14" fill="#d9d0c9" stroke="#c6b9ad" stroke-width=".8" transform="rotate(40 1717 357)"/>
<path d="M1717.0 382.0 L1717.0 445.0" stroke="#c6b9ad" stroke-width="12.6" fill="none"/>
<path d="M1717.0 382.0 L1717.0 445.0" stroke="#d9d0c9" stroke-width="11" fill="none" stroke-dasharray="12 .9"/>
<path d="M1613.0 428.0 L1653.0 432.0" stroke="#c6b9ad" stroke-width="13.6" fill="none"/>
<path d="M1613.0 428.0 L1653.0 432.0" stroke="#d9d0c9" stroke-width="12" fill="none" stroke-dasharray="13 .9"/>
<rect x="1584.5" y="444.5" width="17" height="15" fill="#d9d0c9" stroke="#c6b9ad" stroke-width=".8" transform="rotate(-35 1593 452)"/>
<rect x="1659.5" y="438.5" width="15" height="13" fill="#d9d0c9" stroke="#c6b9ad" stroke-width=".8" transform="rotate(35 1667 445)"/>
<rect x="1769.0" y="357.0" width="16" height="16" fill="#d9d0c9" stroke="#c6b9ad" stroke-width=".8" transform="rotate(40 1777 365)"/>
<path d="M1797.0 357.0 L1820.0 362.0" stroke="#c6b9ad" stroke-width="11.6" fill="none"/>
<path d="M1797.0 357.0 L1820.0 362.0" stroke="#d9d0c9" stroke-width="10" fill="none" stroke-dasharray="9 .9"/>
<path d="M1853.0 362.0 L1847.0 382.0" stroke="#c6b9ad" stroke-width="12.6" fill="none"/>
<path d="M1853.0 362.0 L1847.0 382.0" stroke="#d9d0c9" stroke-width="11" fill="none"/>
<path d="M1773.0 388.0 L1773.0 448.0" stroke="#c6b9ad" stroke-width="13.6" fill="none"/>
<path d="M1773.0 388.0 L1773.0 448.0" stroke="#d9d0c9" stroke-width="12" fill="none" stroke-dasharray="13 .9"/>
<path d="M1840.0 405.0 L1830.0 435.0 L1840.0 455.0" stroke="#c6b9ad" stroke-width="13.6" fill="none"/>
<path d="M1840.0 405.0 L1830.0 435.0 L1840.0 455.0" stroke="#d9d0c9" stroke-width="12" fill="none" stroke-dasharray="12 .9"/>
<path d="M1680.0 225.0 L1663.0 268.0" stroke="#c6b9ad" stroke-width="12.6" fill="none"/>
<path d="M1680.0 225.0 L1663.0 268.0" stroke="#d9d0c9" stroke-width="11" fill="none" stroke-dasharray="12 .9"/>
<rect x="1649.5" y="285.5" width="15" height="15" fill="#d9d0c9" stroke="#c6b9ad" stroke-width=".8" transform="rotate(35 1657 293)"/>
<path d="M1683.0 302.0 L1713.0 293.0" stroke="#c6b9ad" stroke-width="12.6" fill="none"/>
<path d="M1683.0 302.0 L1713.0 293.0" stroke="#d9d0c9" stroke-width="11" fill="none" stroke-dasharray="9 .9"/>
<path d="M1730.0 290.0 L1780.0 290.0 L1813.0 305.0" stroke="#c6b9ad" stroke-width="12.6" fill="none"/>
<path d="M1730.0 290.0 L1780.0 290.0 L1813.0 305.0" stroke="#d9d0c9" stroke-width="11" fill="none" stroke-dasharray="9 .9"/>
<path d="M1780.0 225.0 L1840.0 235.0" stroke="#c6b9ad" stroke-width="12.6" fill="none"/>
<path d="M1780.0 225.0 L1840.0 235.0" stroke="#d9d0c9" stroke-width="11" fill="none" stroke-dasharray="9 .9"/>
<path d="M1870.0 245.0 L1863.0 318.0" stroke="#c6b9ad" stroke-width="13.6" fill="none"/>
<path d="M1870.0 245.0 L1863.0 318.0" stroke="#d9d0c9" stroke-width="12" fill="none" stroke-dasharray="13 .9"/>
<path d="M1497.0 250.0 L1565.0 252.0" stroke="#c6b9ad" stroke-width="13.6" fill="none"/>
<path d="M1497.0 250.0 L1565.0 252.0" stroke="#d9d0c9" stroke-width="12" fill="none"/>
<rect x="1601.0" y="236.0" width="14" height="20" fill="#d9d0c9" stroke="#c6b9ad" stroke-width=".8" transform="rotate(20 1608 246)"/>
<rect x="1455.0" y="242.0" width="14" height="12" fill="#d9d0c9" stroke="#c6b9ad" stroke-width=".8" transform="rotate(10 1462 248)"/>
<polygon points="1478.0,277.0 1520.0,273.0 1563.0,278.0 1575.0,287.0 1573.0,325.0 1547.0,322.0 1533.0,315.0 1480.0,305.0" fill="#c4b5a8" stroke="#b0a194" stroke-width=".8"/>
<path d="M343.0 610.0 L520.0 620.0 L677.0 630.0" stroke="#c6b9ad" stroke-width="16.6" fill="none"/>
<path d="M343.0 610.0 L520.0 620.0 L677.0 630.0" stroke="#d9d0c9" stroke-width="15" fill="none" stroke-dasharray="17 1"/>
<path d="M483.0 637.0 L483.0 655.0" stroke="#c6b9ad" stroke-width="15.6" fill="none"/>
<path d="M483.0 637.0 L483.0 655.0" stroke="#d9d0c9" stroke-width="14" fill="none"/>
<path d="M353.0 667.0 L440.0 725.0 L520.0 765.0 L603.0 820.0" stroke="#c6b9ad" stroke-width="18.6" fill="none" stroke-dasharray="25.6 8.4" stroke-dashoffset="0.8"/>
<path d="M353.0 667.0 L440.0 725.0 L520.0 765.0 L603.0 820.0" stroke="#d9d0c9" stroke-width="17" fill="none" stroke-dasharray="24 10"/>
<rect x="633.0" y="692.0" width="20" height="22" fill="#d9d0c9" stroke="#c6b9ad" stroke-width=".8" transform="rotate(8 643 703)"/>
<path d="M757.0 633.0 L797.0 635.0" stroke="#c6b9ad" stroke-width="13.6" fill="none"/>
<path d="M757.0 633.0 L797.0 635.0" stroke="#d9d0c9" stroke-width="12" fill="none" stroke-dasharray="14 .9"/>
<rect x="762.5" y="672.5" width="16" height="23" fill="#d9d0c9" stroke="#c6b9ad" stroke-width=".8" transform="rotate(5 770.5 684)"/>
<rect x="760.0" y="704.0" width="16" height="23" fill="#d9d0c9" stroke="#c6b9ad" stroke-width=".8" transform="rotate(5 768 715.5)"/>
<rect x="756.5" y="734.5" width="16" height="23" fill="#d9d0c9" stroke="#c6b9ad" stroke-width=".8" transform="rotate(5 764.5 746)"/>
<rect x="755.0" y="770.5" width="16" height="23" fill="#d9d0c9" stroke="#c6b9ad" stroke-width=".8" transform="rotate(5 763 782)"/>
<rect x="760.0" y="803.5" width="14" height="13" fill="#d9d0c9" stroke="#c6b9ad" stroke-width=".8" transform="rotate(-20 767 810)"/>
<rect x="765.0" y="818.5" width="14" height="13" fill="#d9d0c9" stroke="#c6b9ad" stroke-width=".8" transform="rotate(-20 772 825)"/>
<rect x="776.0" y="834.5" width="14" height="13" fill="#d9d0c9" stroke="#c6b9ad" stroke-width=".8" transform="rotate(-20 783 841)"/>
<rect x="822.5" y="687.0" width="16" height="23" fill="#d9d0c9" stroke="#c6b9ad" stroke-width=".8" transform="rotate(5 830.5 698.5)"/>
<rect x="819.3" y="718.5" width="16" height="23" fill="#d9d0c9" stroke="#c6b9ad" stroke-width=".8" transform="rotate(5 827.3 730)"/>
<rect x="815.7" y="746.4" width="17" height="28" fill="#d9d0c9" stroke="#c6b9ad" stroke-width=".8" transform="rotate(5 824.2 760.4)"/>
<path d="M910.0 712.0 L975.0 765.0" stroke="#c6b9ad" stroke-width="15.6" fill="none" stroke-dasharray="17.6 6.4" stroke-dashoffset="0.8"/>
<path d="M910.0 712.0 L975.0 765.0" stroke="#d9d0c9" stroke-width="14" fill="none" stroke-dasharray="16 8"/>
<path d="M830.0 797.0 L930.0 873.0 L963.0 893.0" stroke="#c6b9ad" stroke-width="17.6" fill="none"/>
<path d="M830.0 797.0 L930.0 873.0 L963.0 893.0" stroke="#d9d0c9" stroke-width="16" fill="none" stroke-dasharray="15 1"/>
<path d="M335.0 780.0 L402.0 790.0" stroke="#c6b9ad" stroke-width="15.6" fill="none"/>
<path d="M335.0 780.0 L402.0 790.0" stroke="#d9d0c9" stroke-width="14" fill="none" stroke-dasharray="7 .9"/>
<rect x="455.0" y="833.0" width="26" height="14" fill="#d9d0c9" stroke="#c6b9ad" stroke-width=".8" transform="rotate(35 468 840)"/>
<rect x="405.0" y="802.0" width="26" height="16" fill="#d9d0c9" stroke="#c6b9ad" stroke-width=".8" transform="rotate(32 418 810)"/>
<polygon points="855.0,640.0 894.0,640.0 894.0,668.0 855.0,668.0" fill="#d9d0c9" stroke="#c6b9ad" stroke-width=".8"/>
<path d="M970.0 648.0 L1100.0 655.0 L1253.0 667.0" stroke="#c6b9ad" stroke-width="17.6" fill="none"/>
<path d="M970.0 648.0 L1100.0 655.0 L1253.0 667.0" stroke="#d9d0c9" stroke-width="16" fill="none" stroke-dasharray="17 1"/>
<path d="M1283.0 670.0 L1453.0 677.0" stroke="#c6b9ad" stroke-width="16.6" fill="none"/>
<path d="M1283.0 670.0 L1453.0 677.0" stroke="#d9d0c9" stroke-width="15" fill="none" stroke-dasharray="17 1"/>
<path d="M957.0 667.0 L1023.0 723.0 L1100.0 790.0 L1217.0 860.0 L1323.0 960.0" stroke="#c6b9ad" stroke-width="17.6" fill="none" stroke-dasharray="22.6 3.4" stroke-dashoffset="0.8"/>
<path d="M957.0 667.0 L1023.0 723.0 L1100.0 790.0 L1217.0 860.0 L1323.0 960.0" stroke="#d9d0c9" stroke-width="16" fill="none" stroke-dasharray="21 5"/>
<path d="M933.0 740.0 L1100.0 870.0 L1260.0 1013.0" stroke="#c6b9ad" stroke-width="17.6" fill="none" stroke-dasharray="22.6 6.4" stroke-dashoffset="0.8"/>
<path d="M933.0 740.0 L1100.0 870.0 L1260.0 1013.0" stroke="#d9d0c9" stroke-width="16" fill="none" stroke-dasharray="21 8"/>
<path d="M1150.0 753.0 L1210.0 710.0" stroke="#c6b9ad" stroke-width="23.6" fill="none"/>
<path d="M1150.0 753.0 L1210.0 710.0" stroke="#d9d0c9" stroke-width="22" fill="none" stroke-dasharray="9 .9"/>
<path d="M1253.0 747.0 L1300.0 757.0 L1390.0 800.0" stroke="#c6b9ad" stroke-width="15.6" fill="none"/>
<path d="M1253.0 747.0 L1300.0 757.0 L1390.0 800.0" stroke="#d9d0c9" stroke-width="14" fill="none" stroke-dasharray="11 .9"/>
<path d="M1237.0 757.0 L1227.0 793.0" stroke="#c6b9ad" stroke-width="12.6" fill="none"/>
<path d="M1237.0 757.0 L1227.0 793.0" stroke="#d9d0c9" stroke-width="11" fill="none" stroke-dasharray="11 .9"/>
<path d="M1237.0 813.0 L1300.0 825.0 L1377.0 857.0" stroke="#c6b9ad" stroke-width="14.6" fill="none"/>
<path d="M1237.0 813.0 L1300.0 825.0 L1377.0 857.0" stroke="#d9d0c9" stroke-width="13" fill="none" stroke-dasharray="11 .9"/>
<path d="M1463.0 753.0 L1440.0 790.0 L1413.0 820.0" stroke="#c6b9ad" stroke-width="15.6" fill="none"/>
<path d="M1463.0 753.0 L1440.0 790.0 L1413.0 820.0" stroke="#d9d0c9" stroke-width="14" fill="none" stroke-dasharray="11 .9"/>
<path d="M1527.0 680.0 L1650.0 688.0 L1800.0 700.0" stroke="#c6b9ad" stroke-width="16.6" fill="none"/>
<path d="M1527.0 680.0 L1650.0 688.0 L1800.0 700.0" stroke="#d9d0c9" stroke-width="15" fill="none" stroke-dasharray="16 1"/>
<path d="M1547.0 765.0 L1717.0 772.0" stroke="#c6b9ad" stroke-width="15.6" fill="none"/>
<path d="M1547.0 765.0 L1717.0 772.0" stroke="#d9d0c9" stroke-width="14" fill="none" stroke-dasharray="9 .9"/>
<path d="M1733.0 770.0 L1773.0 810.0" stroke="#c6b9ad" stroke-width="15.6" fill="none"/>
<path d="M1733.0 770.0 L1773.0 810.0" stroke="#d9d0c9" stroke-width="14" fill="none" stroke-dasharray="9 .9"/>
<path d="M1765.0 817.0 L1775.0 880.0 L1807.0 960.0" stroke="#c6b9ad" stroke-width="14.6" fill="none"/>
<path d="M1765.0 817.0 L1775.0 880.0 L1807.0 960.0" stroke="#d9d0c9" stroke-width="13" fill="none" stroke-dasharray="10 .9"/>
<path d="M1810.0 977.0 L1780.0 1020.0" stroke="#c6b9ad" stroke-width="17.6" fill="none"/>
<path d="M1810.0 977.0 L1780.0 1020.0" stroke="#d9d0c9" stroke-width="16" fill="none" stroke-dasharray="10 .9"/>
<path d="M1523.0 810.0 L1687.0 817.0" stroke="#c6b9ad" stroke-width="21.6" fill="none"/>
<path d="M1523.0 810.0 L1687.0 817.0" stroke="#d9d0c9" stroke-width="20" fill="none" stroke-dasharray="10 .9"/>
<path d="M1707.0 823.0 L1730.0 893.0" stroke="#c6b9ad" stroke-width="13.6" fill="none"/>
<path d="M1707.0 823.0 L1730.0 893.0" stroke="#d9d0c9" stroke-width="12" fill="none" stroke-dasharray="10 .9"/>
<path d="M1737.0 907.0 L1747.0 953.0" stroke="#c6b9ad" stroke-width="13.6" fill="none"/>
<path d="M1737.0 907.0 L1747.0 953.0" stroke="#d9d0c9" stroke-width="12" fill="none" stroke-dasharray="10 .9"/>
<rect x="1871.0" y="682.0" width="18" height="16" fill="#d9d0c9" stroke="#c6b9ad" stroke-width=".8" transform="rotate(0 1880 690)"/>
<rect x="1845.5" y="726.0" width="35" height="14" fill="#d9d0c9" stroke="#c6b9ad" stroke-width=".8" transform="rotate(0 1863 733)"/>
<rect x="1839.5" y="761.0" width="35" height="14" fill="#d9d0c9" stroke="#c6b9ad" stroke-width=".8" transform="rotate(0 1857 768)"/>
<rect x="1862.0" y="788.0" width="16" height="18" fill="#d9d0c9" stroke="#c6b9ad" stroke-width=".8" transform="rotate(0 1870 797)"/>
<path d="M1873.0 840.0 L1890.0 870.0" stroke="#c6b9ad" stroke-width="15.6" fill="none"/>
<path d="M1873.0 840.0 L1890.0 870.0" stroke="#d9d0c9" stroke-width="14" fill="none" stroke-dasharray="14 .9"/>
<path d="M1463.0 673.0 L1463.0 735.0" stroke="#c6b9ad" stroke-width="29.6" fill="none"/>
<path d="M1463.0 673.0 L1463.0 735.0" stroke="#d9d0c9" stroke-width="28" fill="none" stroke-dasharray="10 .9"/>
<polygon points="1810.0,673.0 1827.0,673.0 1820.0,727.0 1810.0,727.0" fill="#d9d0c9" stroke="#c6b9ad" stroke-width=".8"/>
<path d="M1540.0 588.0 L1580.0 592.0" stroke="#c6b9ad" stroke-width="17.6" fill="none"/>
<path d="M1540.0 588.0 L1580.0 592.0" stroke="#d9d0c9" stroke-width="16" fill="none" stroke-dasharray="12 .9"/>
<path d="M1597.0 585.0 L1700.0 600.0 L1800.0 608.0 L1830.0 612.0" stroke="#c6b9ad" stroke-width="19.6" fill="none"/>
<path d="M1597.0 585.0 L1700.0 600.0 L1800.0 608.0 L1830.0 612.0" stroke="#d9d0c9" stroke-width="18" fill="none" stroke-dasharray="11 .9"/>
<path d="M1860.0 590.0 L1895.0 600.0" stroke="#c6b9ad" stroke-width="19.6" fill="none"/>
<path d="M1860.0 590.0 L1895.0 600.0" stroke="#d9d0c9" stroke-width="18" fill="none" stroke-dasharray="11 .9"/>
<polygon points="1513.0,740.0 1530.0,745.0 1548.0,758.0 1540.0,768.0 1525.0,758.0 1510.0,752.0" fill="#d9d0c9" stroke="#c6b9ad" stroke-width=".8"/>
<path d="M1493.0 833.0 L1450.0 910.0 L1413.0 987.0" stroke="#c6b9ad" stroke-width="15.6" fill="none"/>
<path d="M1493.0 833.0 L1450.0 910.0 L1413.0 987.0" stroke="#d9d0c9" stroke-width="14" fill="none" stroke-dasharray="10 .9"/>
<path d="M335.0 873.0 L437.0 890.0" stroke="#c6b9ad" stroke-width="14.6" fill="none"/>
<path d="M335.0 873.0 L437.0 890.0" stroke="#d9d0c9" stroke-width="13" fill="none" stroke-dasharray="11 .9"/>
<rect x="459.5" y="882.0" width="15" height="12" fill="#d9d0c9" stroke="#c6b9ad" stroke-width=".8" transform="rotate(-20 467 888)"/>
<path d="M343.0 927.0 L447.0 947.0" stroke="#c6b9ad" stroke-width="14.6" fill="none"/>
<path d="M343.0 927.0 L447.0 947.0" stroke="#d9d0c9" stroke-width="13" fill="none" stroke-dasharray="11 .9"/>
<rect x="444.0" y="951.0" width="16" height="14" fill="#d9d0c9" stroke="#c6b9ad" stroke-width=".8" transform="rotate(30 452 958)"/>
<path d="M523.0 915.0 L470.0 1060.0" stroke="#c6b9ad" stroke-width="14.6" fill="none" stroke-dasharray="18.6 13.4" stroke-dashoffset="0.8"/>
<path d="M523.0 915.0 L470.0 1060.0" stroke="#d9d0c9" stroke-width="13" fill="none" stroke-dasharray="17 15"/>
<path d="M543.0 890.0 L577.0 910.0" stroke="#c6b9ad" stroke-width="14.6" fill="none"/>
<path d="M543.0 890.0 L577.0 910.0" stroke="#d9d0c9" stroke-width="13" fill="none" stroke-dasharray="14 6"/>
<rect x="430.0" y="966.0" width="12" height="18" fill="#d9d0c9" stroke="#c6b9ad" stroke-width=".8" transform="rotate(15 436 975)"/>
<rect x="420.0" y="1000.0" width="14" height="16" fill="#d9d0c9" stroke="#c6b9ad" stroke-width=".8" transform="rotate(15 427 1008)"/>
<rect x="351.0" y="1027.0" width="28" height="12" fill="#d9d0c9" stroke="#c6b9ad" stroke-width=".8" transform="rotate(20 365 1033)"/>
<rect x="411.0" y="1035.0" width="14" height="16" fill="#d9d0c9" stroke="#c6b9ad" stroke-width=".8" transform="rotate(15 418 1043)"/>
<rect x="333.0" y="978.0" width="14" height="14" fill="#d9d0c9" stroke="#c6b9ad" stroke-width=".8" transform="rotate(10 340 985)"/>
<path d="M687.0 897.0 L780.0 970.0 L870.0 1040.0" stroke="#c6b9ad" stroke-width="16.6" fill="none" stroke-dasharray="21.6 3.4" stroke-dashoffset="0.8"/>
<path d="M687.0 897.0 L780.0 970.0 L870.0 1040.0" stroke="#d9d0c9" stroke-width="15" fill="none" stroke-dasharray="20 5"/>
<path d="M763.0 807.0 L800.0 850.0 L870.0 905.0 L930.0 953.0" stroke="#c6b9ad" stroke-width="15.6" fill="none" stroke-dasharray="19.6 4.4" stroke-dashoffset="0.8"/>
<path d="M763.0 807.0 L800.0 850.0 L870.0 905.0 L930.0 953.0" stroke="#d9d0c9" stroke-width="14" fill="none" stroke-dasharray="18 6"/>
<path d="M643.0 987.0 L700.0 1030.0 L747.0 1056.0" stroke="#c6b9ad" stroke-width="16.6" fill="none" stroke-dasharray="23.6 6.4" stroke-dashoffset="0.8"/>
<path d="M643.0 987.0 L700.0 1030.0 L747.0 1056.0" stroke="#d9d0c9" stroke-width="15" fill="none" stroke-dasharray="22 8"/>
<rect x="876.0" y="1004.0" width="16" height="14" fill="#d9d0c9" stroke="#c6b9ad" stroke-width=".8" transform="rotate(-40 884 1011)"/>
<rect x="947.0" y="1014.0" width="20" height="18" fill="#d9d0c9" stroke="#c6b9ad" stroke-width=".8" transform="rotate(-35 957 1023)"/>
<rect x="859.0" y="1033.0" width="16" height="14" fill="#d9d0c9" stroke="#c6b9ad" stroke-width=".8" transform="rotate(-35 867 1040)"/>
<path d="M863.0 817.0 L980.0 905.0 L1097.0 1000.0" stroke="#c6b9ad" stroke-width="18.6" fill="none" stroke-dasharray="23.6 3.4" stroke-dashoffset="0.8"/>
<path d="M863.0 817.0 L980.0 905.0 L1097.0 1000.0" stroke="#d9d0c9" stroke-width="17" fill="none" stroke-dasharray="22 5"/>
<path d="M857.0 907.0 L930.0 960.0" stroke="#c6b9ad" stroke-width="15.6" fill="none"/>
<path d="M857.0 907.0 L930.0 960.0" stroke="#d9d0c9" stroke-width="14" fill="none" stroke-dasharray="14 4"/>
<rect x="899.0" y="970.0" width="16" height="14" fill="#d9d0c9" stroke="#c6b9ad" stroke-width=".8" transform="rotate(-35 907 977)"/>
<path d="M983.0 997.0 L1057.0 1050.0" stroke="#c6b9ad" stroke-width="15.6" fill="none" stroke-dasharray="21.6 4.4" stroke-dashoffset="0.8"/>
<path d="M983.0 997.0 L1057.0 1050.0" stroke="#d9d0c9" stroke-width="14" fill="none" stroke-dasharray="20 6"/>
<path d="M1397.0 857.0 L1377.0 947.0" stroke="#c6b9ad" stroke-width="13.6" fill="none"/>
<path d="M1397.0 857.0 L1377.0 947.0" stroke="#d9d0c9" stroke-width="12" fill="none" stroke-dasharray="11 .9"/>
<path d="M1320.0 875.0 L1313.0 900.0" stroke="#c6b9ad" stroke-width="6.6" fill="none"/>
<path d="M1320.0 875.0 L1313.0 900.0" stroke="#d9d0c9" stroke-width="5" fill="none"/>
<path d="M1338.0 887.0 L1362.0 897.0" stroke="#c6b9ad" stroke-width="5.6" fill="none"/>
<path d="M1338.0 887.0 L1362.0 897.0" stroke="#d9d0c9" stroke-width="4" fill="none"/>
<path d="M1333.0 902.0 L1365.0 915.0" stroke="#c6b9ad" stroke-width="5.6" fill="none"/>
<path d="M1333.0 902.0 L1365.0 915.0" stroke="#d9d0c9" stroke-width="4" fill="none"/>
<path d="M1317.0 910.0 L1345.0 935.0" stroke="#c6b9ad" stroke-width="5.6" fill="none"/>
<path d="M1317.0 910.0 L1345.0 935.0" stroke="#d9d0c9" stroke-width="4" fill="none"/>
<polygon points="1333.0,955.0 1363.0,960.0 1357.0,990.0 1345.0,997.0 1330.0,985.0" fill="#d9d0c9" stroke="#c6b9ad" stroke-width=".8"/>
<path d="M1427.0 1017.0 L1483.0 1043.0" stroke="#c6b9ad" stroke-width="14.6" fill="none"/>
<path d="M1427.0 1017.0 L1483.0 1043.0" stroke="#d9d0c9" stroke-width="13" fill="none" stroke-dasharray="11 .9"/>
<rect x="1406.0" y="999.0" width="14" height="12" fill="#d9d0c9" stroke="#c6b9ad" stroke-width=".8" transform="rotate(30 1413 1005)"/>
<path d="M1590.0 850.0 L1590.0 870.0" stroke="#c6b9ad" stroke-width="11.6" fill="none"/>
<path d="M1590.0 850.0 L1590.0 870.0" stroke="#d9d0c9" stroke-width="10" fill="none"/>
<path d="M1600.0 868.0 L1627.0 870.0" stroke="#c6b9ad" stroke-width="12.6" fill="none"/>
<path d="M1600.0 868.0 L1627.0 870.0" stroke="#d9d0c9" stroke-width="11" fill="none" stroke-dasharray="9 .9"/>
<path d="M1633.0 862.0 L1673.0 883.0" stroke="#c6b9ad" stroke-width="13.6" fill="none"/>
<path d="M1633.0 862.0 L1673.0 883.0" stroke="#d9d0c9" stroke-width="12" fill="none" stroke-dasharray="9 .9"/>
<path d="M1537.0 883.0 L1580.0 867.0" stroke="#c6b9ad" stroke-width="12.6" fill="none"/>
<path d="M1537.0 883.0 L1580.0 867.0" stroke="#d9d0c9" stroke-width="11" fill="none" stroke-dasharray="9 .9"/>
<path d="M1673.0 893.0 L1693.0 940.0" stroke="#c6b9ad" stroke-width="14.6" fill="none"/>
<path d="M1673.0 893.0 L1693.0 940.0" stroke="#d9d0c9" stroke-width="13" fill="none" stroke-dasharray="11 .9"/>
<path d="M1610.0 983.0 L1683.0 953.0" stroke="#c6b9ad" stroke-width="15.6" fill="none"/>
<path d="M1610.0 983.0 L1683.0 953.0" stroke="#d9d0c9" stroke-width="14" fill="none" stroke-dasharray="11 .9"/>
<path d="M1640.0 1023.0 L1737.0 983.0" stroke="#c6b9ad" stroke-width="15.6" fill="none"/>
<path d="M1640.0 1023.0 L1737.0 983.0" stroke="#d9d0c9" stroke-width="14" fill="none" stroke-dasharray="11 .9"/>
<path d="M1730.0 1037.0 L1767.0 1027.0" stroke="#c6b9ad" stroke-width="13.6" fill="none"/>
<path d="M1730.0 1037.0 L1767.0 1027.0" stroke="#d9d0c9" stroke-width="12" fill="none" stroke-dasharray="9 .9"/>
<path d="M1520.0 893.0 L1477.0 960.0" stroke="#c6b9ad" stroke-width="14.6" fill="none"/>
<path d="M1520.0 893.0 L1477.0 960.0" stroke="#d9d0c9" stroke-width="13" fill="none" stroke-dasharray="12 .9"/>
<path d="M1480.0 977.0 L1513.0 1013.0" stroke="#c6b9ad" stroke-width="14.6" fill="none"/>
<path d="M1480.0 977.0 L1513.0 1013.0" stroke="#d9d0c9" stroke-width="13" fill="none" stroke-dasharray="12 .9"/>
<path d="M1523.0 1013.0 L1593.0 987.0" stroke="#c6b9ad" stroke-width="13.6" fill="none"/>
<path d="M1523.0 1013.0 L1593.0 987.0" stroke="#d9d0c9" stroke-width="12" fill="none" stroke-dasharray="11 .9"/>
<path d="M1557.0 1033.0 L1613.0 1040.0" stroke="#c6b9ad" stroke-width="13.6" fill="none"/>
<path d="M1557.0 1033.0 L1613.0 1040.0" stroke="#d9d0c9" stroke-width="12" fill="none" stroke-dasharray="11 .9"/>
<path d="M1440.0 1017.0 L1513.0 1050.0" stroke="#c6b9ad" stroke-width="14.6" fill="none"/>
<path d="M1440.0 1017.0 L1513.0 1050.0" stroke="#d9d0c9" stroke-width="13" fill="none" stroke-dasharray="11 .9"/>
<rect x="1493.0" y="803.0" width="18" height="14" fill="#d9d0c9" stroke="#c6b9ad" stroke-width=".8" transform="rotate(-20 1502 810)"/>
<path d="M408.0 233.0 C415.8 231.8 436.3 229.2 455.0 226.0 C473.7 222.8 509.2 216.0 520.0 214.0" stroke="#cfcdca" stroke-width="15.8" fill="none" stroke-linecap="butt" stroke-linejoin="round"/>
<path d="M573.0 214.0 C576.3 230.8 586.3 287.0 593.0 315.0 C599.7 343.0 606.5 364.2 613.0 382.0 C619.5 399.8 626.7 409.8 632.0 422.0 C637.3 434.2 641.2 445.0 645.0 455.0 C648.8 465.0 652.0 472.0 655.0 482.0 C658.0 492.0 661.3 500.3 663.0 515.0 C664.7 529.7 664.7 560.8 665.0 570.0" stroke="#cfcdca" stroke-width="15.8" fill="none" stroke-linecap="butt" stroke-linejoin="round"/>
<path d="M330.0 363.0 C352.2 363.7 424.2 365.5 463.0 367.0 C501.8 368.5 538.2 371.2 563.0 372.0 C587.8 372.8 603.8 372.0 612.0 372.0" stroke="#cfcdca" stroke-width="17.8" fill="none" stroke-linecap="butt" stroke-linejoin="round"/>
<path d="M649.0 455.0 C655.0 453.2 674.5 450.0 685.0 444.0 C695.5 438.0 704.5 431.0 712.0 419.0 C719.5 407.0 723.5 389.0 730.0 372.0 C736.5 355.0 743.2 342.3 751.0 317.0 C758.8 291.7 772.3 237.5 777.0 220.0 C781.7 202.5 778.7 213.3 779.0 212.0" stroke="#cfcdca" stroke-width="7.3" fill="none" stroke-linecap="butt" stroke-linejoin="round"/>
<path d="M405.0 485.0 L402.0 557.0" stroke="#cfcdca" stroke-width="7.8" fill="none" stroke-linecap="butt" stroke-linejoin="round"/>
<path d="M393.0 483.0 L407.0 483.0" stroke="#cfcdca" stroke-width="7.8" fill="none" stroke-linecap="round" stroke-linejoin="round"/>
<path d="M592.0 492.0 C592.2 494.2 590.5 502.3 593.0 505.0 C595.5 507.7 605.0 497.2 607.0 508.0 C609.0 518.8 605.3 559.7 605.0 570.0" stroke="#cfcdca" stroke-width="6.8" fill="none" stroke-linecap="butt" stroke-linejoin="round"/>
<path d="M635.0 482.0 C635.5 484.7 635.5 493.7 638.0 498.0 C640.5 502.3 646.3 506.7 650.0 508.0 C653.7 509.3 658.3 506.3 660.0 506.0" stroke="#cfcdca" stroke-width="6.8" fill="none" stroke-linecap="butt" stroke-linejoin="round"/>
<path d="M1116.0 214.0 C1110.3 229.2 1092.2 277.7 1082.0 305.0 C1071.8 332.3 1065.5 352.5 1055.0 378.0 C1044.5 403.5 1029.8 434.3 1019.0 458.0 C1008.2 481.7 999.7 497.7 990.0 520.0 C980.3 542.3 965.8 580.0 961.0 592.0" stroke="#cfcdca" stroke-width="21.8" fill="none" stroke-linecap="butt" stroke-linejoin="round"/>
<path d="M1092.0 246.0 C1083.3 243.7 1055.8 236.7 1040.0 232.0 C1024.2 227.3 1004.2 220.3 997.0 218.0" stroke="#cfcdca" stroke-width="15.8" fill="none" stroke-linecap="butt" stroke-linejoin="round"/>
<path d="M890.0 407.0 L1003.0 457.0" stroke="#cfcdca" stroke-width="15.8" fill="none" stroke-linecap="butt" stroke-linejoin="round"/>
<path d="M1242.0 214.0 C1237.8 228.0 1231.8 258.3 1217.0 298.0 C1202.2 337.7 1164.5 423.7 1153.0 452.0 C1141.5 480.3 1148.8 465.3 1148.0 468.0" stroke="#cfcdca" stroke-width="16.3" fill="none" stroke-linecap="butt" stroke-linejoin="round"/>
<path d="M1218.0 299.0 C1235.5 299.8 1286.0 302.0 1323.0 304.0 C1360.0 306.0 1420.5 309.8 1440.0 311.0" stroke="#cfcdca" stroke-width="15.8" fill="none" stroke-linecap="butt" stroke-linejoin="round"/>
<path d="M1323.0 305.0 L1323.0 472.0" stroke="#cfcdca" stroke-width="15.3" fill="none" stroke-linecap="butt" stroke-linejoin="round"/>
<path d="M1000.0 457.0 C1046.7 459.5 1207.8 468.2 1280.0 472.0 C1352.2 475.8 1392.2 478.0 1433.0 480.0 C1473.8 482.0 1470.5 481.2 1525.0 484.0 C1579.5 486.8 1720.8 494.8 1760.0 497.0" stroke="#cfcdca" stroke-width="16.3" fill="none" stroke-linecap="butt" stroke-linejoin="round"/>
<path d="M1425.0 214.0 C1425.8 218.7 1427.8 230.7 1430.0 242.0 C1432.2 253.3 1434.2 269.3 1438.0 282.0 C1441.8 294.7 1446.5 307.0 1453.0 318.0 C1459.5 329.0 1468.0 340.2 1477.0 348.0 C1486.0 355.8 1498.7 361.0 1507.0 365.0 C1515.3 369.0 1517.7 372.0 1527.0 372.0 C1536.3 372.0 1551.3 370.0 1563.0 365.0 C1574.7 360.0 1588.0 350.3 1597.0 342.0 C1606.0 333.7 1611.0 326.7 1617.0 315.0 C1623.0 303.3 1627.2 288.8 1633.0 272.0 C1638.8 255.2 1648.8 223.7 1652.0 214.0" stroke="#cfcdca" stroke-width="16.8" fill="none" stroke-linecap="butt" stroke-linejoin="round"/>
<path d="M1617.0 318.0 C1638.7 320.8 1703.2 330.2 1747.0 335.0 C1790.8 339.8 1853.7 344.5 1880.0 347.0 C1906.3 349.5 1900.8 349.5 1905.0 350.0" stroke="#cfcdca" stroke-width="15.8" fill="none" stroke-linecap="butt" stroke-linejoin="round"/>
<path d="M1845.0 212.0 L1905.0 233.0" stroke="#cfcdca" stroke-width="15.8" fill="none" stroke-linecap="butt" stroke-linejoin="round"/>
<path d="M1527.0 372.0 C1526.0 385.8 1523.5 420.8 1521.0 455.0 C1518.5 489.2 1514.2 548.7 1512.0 577.0 C1509.8 605.3 1508.7 617.0 1508.0 625.0" stroke="#cfcdca" stroke-width="15.8" fill="none" stroke-linecap="butt" stroke-linejoin="round"/>
<path d="M1747.0 337.0 L1747.0 495.0" stroke="#cfcdca" stroke-width="15.3" fill="none" stroke-linecap="butt" stroke-linejoin="round"/>
<path d="M808.0 598.0 C807.2 607.2 804.8 632.7 803.0 653.0 C801.2 673.3 798.5 700.5 797.0 720.0 C795.5 739.5 791.8 753.3 794.0 770.0 C796.2 786.7 798.5 803.3 810.0 820.0 C821.5 836.7 837.5 848.3 863.0 870.0 C888.5 891.7 931.8 926.2 963.0 950.0 C994.2 973.8 1025.5 994.3 1050.0 1013.0 C1074.5 1031.7 1100.0 1053.8 1110.0 1062.0" stroke="#cfcdca" stroke-width="15.8" fill="none" stroke-linecap="butt" stroke-linejoin="round"/>
<path d="M963.0 952.0 L880.0 1062.0" stroke="#cfcdca" stroke-width="15.8" fill="none" stroke-linecap="butt" stroke-linejoin="round"/>
<path d="M942.0 606.0 C940.0 613.8 930.3 639.5 930.0 653.0 C929.7 666.5 931.2 674.7 940.0 687.0 C948.8 699.3 964.7 710.7 983.0 727.0 C1001.3 743.3 1027.7 766.5 1050.0 785.0 C1072.3 803.5 1097.5 823.5 1117.0 838.0 C1136.5 852.5 1139.3 849.5 1167.0 872.0 C1194.7 894.5 1252.5 945.0 1283.0 973.0 C1313.5 1001.0 1336.8 1025.2 1350.0 1040.0 C1363.2 1054.8 1360.0 1058.3 1362.0 1062.0" stroke="#cfcdca" stroke-width="16.3" fill="none" stroke-linecap="butt" stroke-linejoin="round"/>
<path d="M972.0 603.0 C968.3 607.2 956.3 618.2 950.0 628.0 C943.7 637.8 936.7 656.3 934.0 662.0" stroke="#cfcdca" stroke-width="13.8" fill="none" stroke-linecap="butt" stroke-linejoin="round"/>
<path d="M1287.0 633.0 C1283.0 642.0 1273.7 669.2 1263.0 687.0 C1252.3 704.8 1236.8 726.3 1223.0 740.0 C1209.2 753.7 1187.2 764.2 1180.0 769.0" stroke="#cfcdca" stroke-width="16.3" fill="none" stroke-linecap="round" stroke-linejoin="round"/>
<path d="M1267.0 786.0 L1427.0 845.0" stroke="#cfcdca" stroke-width="16.3" fill="none" stroke-linecap="butt" stroke-linejoin="round"/>
<path d="M1507.0 647.0 C1505.8 659.2 1501.7 700.7 1500.0 720.0 C1498.3 739.3 1500.3 750.2 1497.0 763.0 C1493.7 775.8 1489.5 780.3 1480.0 797.0 C1470.5 813.7 1453.8 840.3 1440.0 863.0 C1426.2 885.7 1409.8 908.0 1397.0 933.0 C1384.2 958.0 1371.2 991.5 1363.0 1013.0 C1354.8 1034.5 1350.5 1053.8 1348.0 1062.0" stroke="#cfcdca" stroke-width="20.8" fill="none" stroke-linecap="butt" stroke-linejoin="round"/>
<path d="M1493.0 785.0 C1513.0 786.2 1576.3 789.8 1613.0 792.0 C1649.7 794.2 1692.3 794.5 1713.0 798.0 C1733.7 801.5 1730.3 803.8 1737.0 813.0 C1743.7 822.2 1747.5 837.3 1753.0 853.0 C1758.5 868.7 1766.7 891.3 1770.0 907.0 C1773.3 922.7 1774.7 934.3 1773.0 947.0 C1771.3 959.7 1767.7 972.0 1760.0 983.0 C1752.3 994.0 1745.8 1002.3 1727.0 1013.0 C1708.2 1023.7 1664.8 1038.8 1647.0 1047.0 C1629.2 1055.2 1624.5 1059.5 1620.0 1062.0" stroke="#cfcdca" stroke-width="16.3" fill="none" stroke-linecap="butt" stroke-linejoin="round"/>
<path d="M1593.0 973.0 L1629.0 1062.0" stroke="#cfcdca" stroke-width="14.8" fill="none" stroke-linecap="butt" stroke-linejoin="round"/>
<path d="M1375.0 1023.0 L1440.0 1062.0" stroke="#cfcdca" stroke-width="15.8" fill="none" stroke-linecap="butt" stroke-linejoin="round"/>
<path d="M1833.0 957.0 C1834.7 967.5 1839.3 1002.5 1843.0 1020.0 C1846.7 1037.5 1853.0 1055.0 1855.0 1062.0" stroke="#cfcdca" stroke-width="8.8" fill="none" stroke-linecap="butt" stroke-linejoin="round"/>
<path d="M1800.0 1042.0 C1807.5 1039.2 1828.3 1030.7 1845.0 1025.0 C1861.7 1019.3 1890.8 1010.8 1900.0 1008.0" stroke="#cfcdca" stroke-width="9.8" fill="none" stroke-linecap="butt" stroke-linejoin="round"/>
<path d="M1837.0 663.0 C1835.3 675.3 1832.0 724.5 1827.0 737.0 C1822.0 749.5 1810.3 737.8 1807.0 738.0" stroke="#cfcdca" stroke-width="7.8" fill="none" stroke-linecap="round" stroke-linejoin="round"/>
<path d="M1843.0 580.0 L1837.0 634.0" stroke="#cfcdca" stroke-width="13.8" fill="none" stroke-linecap="butt" stroke-linejoin="round"/>
<path d="M1580.0 628.0 C1582.8 626.2 1555.3 616.7 1597.0 617.0 C1638.7 617.3 1791.2 627.8 1830.0 630.0" stroke="#cfcdca" stroke-width="9.3" fill="none" stroke-linecap="butt" stroke-linejoin="round"/>
<path d="M1684.5 578.0 L1684.5 606.0" stroke="#cfcdca" stroke-width="6.8" fill="none" stroke-linecap="butt" stroke-linejoin="round"/>
<path d="M330.0 903.0 L483.0 923.0" stroke="#cfcdca" stroke-width="15.8" fill="none" stroke-linecap="butt" stroke-linejoin="round"/>
<path d="M532.0 842.0 C526.2 850.5 506.2 874.5 497.0 893.0 C487.8 911.5 486.3 924.8 477.0 953.0 C467.7 981.2 447.0 1043.8 441.0 1062.0" stroke="#cfcdca" stroke-width="15.8" fill="none" stroke-linecap="butt" stroke-linejoin="round"/>
<path d="M330.0 750.0 L397.0 757.0" stroke="#cfcdca" stroke-width="13.8" fill="none" stroke-linecap="round" stroke-linejoin="round"/>
<path d="M692.0 595.0 C689.5 604.7 682.7 637.7 677.0 653.0 C671.3 668.3 661.2 681.3 658.0 687.0" stroke="#cfcdca" stroke-width="4.8" fill="none" stroke-linecap="butt" stroke-linejoin="round"/>
<path d="M417.0 768.0 C417.5 771.7 416.2 784.7 420.0 790.0 C423.8 795.3 433.0 800.0 440.0 800.0 C447.0 800.0 458.3 791.7 462.0 790.0" stroke="#cfcdca" stroke-width="8.8" fill="none" stroke-linecap="butt" stroke-linejoin="round"/>
<path d="M850 604 L850 673 L912 673" stroke="#cfcdca" stroke-width="8.8" fill="none" stroke-linecap="butt" stroke-linejoin="round"/>
<path d="M897 604 L897 636 L910 650 L912 673" stroke="#cfcdca" stroke-width="8.8" fill="none" stroke-linecap="butt" stroke-linejoin="round"/>
<path d="M877 636 L897 636" stroke="#cfcdca" stroke-width="7.8" fill="none" stroke-linecap="butt" stroke-linejoin="round"/>
<path d="M905.0 245.0 C912.5 247.8 940.8 265.3 950.0 262.0 C959.2 258.7 958.3 231.2 960.0 225.0" stroke="#cfcdca" stroke-width="5.8" fill="none" stroke-linecap="butt" stroke-linejoin="round"/>
<path d="M1458.0 798.0 C1454.5 803.2 1442.5 819.0 1437.0 829.0 C1431.5 839.0 1428.8 847.8 1425.0 858.0 C1421.2 868.2 1415.8 884.7 1414.0 890.0" stroke="#cfcdca" stroke-width="9.3" fill="none" stroke-linecap="butt" stroke-linejoin="round"/>
<circle cx="408" cy="233" r="13" fill="#cfcdca"/>
<circle cx="890" cy="407" r="13" fill="#cfcdca"/>
<circle cx="1267" cy="786" r="12" fill="#cfcdca"/>
<path d="M1515.0 960.0 C1517.4 956.4 1527.4 938.7 1533.0 933.0 C1538.6 927.3 1548.5 921.0 1557.0 917.0 C1565.5 913.0 1587.3 905.0 1597.0 903.0 C1606.7 901.0 1623.3 901.1 1630.0 902.0 C1636.7 902.9 1644.3 906.3 1647.0 910.0 C1649.7 913.7 1658.9 923.3 1650.0 930.0 C1641.1 936.7 1596.4 953.3 1580.0 960.0 C1563.6 966.7 1535.4 978.7 1527.0 980.0 C1518.6 981.3 1518.6 972.7 1517.0 970.0 C1515.4 967.3 1515.3 961.3 1515.0 960.0Z" stroke="#cfcdca" stroke-width="30" fill="none" stroke-linejoin="round"/>
<path d="M408.0 233.0 C415.8 231.8 436.3 229.2 455.0 226.0 C473.7 222.8 509.2 216.0 520.0 214.0" stroke="#fff" stroke-width="14" fill="none" stroke-linecap="butt" stroke-linejoin="round"/>
<path d="M573.0 214.0 C576.3 230.8 586.3 287.0 593.0 315.0 C599.7 343.0 606.5 364.2 613.0 382.0 C619.5 399.8 626.7 409.8 632.0 422.0 C637.3 434.2 641.2 445.0 645.0 455.0 C648.8 465.0 652.0 472.0 655.0 482.0 C658.0 492.0 661.3 500.3 663.0 515.0 C664.7 529.7 664.7 560.8 665.0 570.0" stroke="#fff" stroke-width="14" fill="none" stroke-linecap="butt" stroke-linejoin="round"/>
<path d="M330.0 363.0 C352.2 363.7 424.2 365.5 463.0 367.0 C501.8 368.5 538.2 371.2 563.0 372.0 C587.8 372.8 603.8 372.0 612.0 372.0" stroke="#fff" stroke-width="16" fill="none" stroke-linecap="butt" stroke-linejoin="round"/>
<path d="M649.0 455.0 C655.0 453.2 674.5 450.0 685.0 444.0 C695.5 438.0 704.5 431.0 712.0 419.0 C719.5 407.0 723.5 389.0 730.0 372.0 C736.5 355.0 743.2 342.3 751.0 317.0 C758.8 291.7 772.3 237.5 777.0 220.0 C781.7 202.5 778.7 213.3 779.0 212.0" stroke="#fff" stroke-width="5.5" fill="none" stroke-linecap="butt" stroke-linejoin="round"/>
<path d="M405.0 485.0 L402.0 557.0" stroke="#fff" stroke-width="6" fill="none" stroke-linecap="butt" stroke-linejoin="round"/>
<path d="M393.0 483.0 L407.0 483.0" stroke="#fff" stroke-width="6" fill="none" stroke-linecap="round" stroke-linejoin="round"/>
<path d="M592.0 492.0 C592.2 494.2 590.5 502.3 593.0 505.0 C595.5 507.7 605.0 497.2 607.0 508.0 C609.0 518.8 605.3 559.7 605.0 570.0" stroke="#fff" stroke-width="5" fill="none" stroke-linecap="butt" stroke-linejoin="round"/>
<path d="M635.0 482.0 C635.5 484.7 635.5 493.7 638.0 498.0 C640.5 502.3 646.3 506.7 650.0 508.0 C653.7 509.3 658.3 506.3 660.0 506.0" stroke="#fff" stroke-width="5" fill="none" stroke-linecap="butt" stroke-linejoin="round"/>
<path d="M1116.0 214.0 C1110.3 229.2 1092.2 277.7 1082.0 305.0 C1071.8 332.3 1065.5 352.5 1055.0 378.0 C1044.5 403.5 1029.8 434.3 1019.0 458.0 C1008.2 481.7 999.7 497.7 990.0 520.0 C980.3 542.3 965.8 580.0 961.0 592.0" stroke="#fff" stroke-width="20" fill="none" stroke-linecap="butt" stroke-linejoin="round"/>
<path d="M1092.0 246.0 C1083.3 243.7 1055.8 236.7 1040.0 232.0 C1024.2 227.3 1004.2 220.3 997.0 218.0" stroke="#fff" stroke-width="14" fill="none" stroke-linecap="butt" stroke-linejoin="round"/>
<path d="M890.0 407.0 L1003.0 457.0" stroke="#fff" stroke-width="14" fill="none" stroke-linecap="butt" stroke-linejoin="round"/>
<path d="M1242.0 214.0 C1237.8 228.0 1231.8 258.3 1217.0 298.0 C1202.2 337.7 1164.5 423.7 1153.0 452.0 C1141.5 480.3 1148.8 465.3 1148.0 468.0" stroke="#fff" stroke-width="14.5" fill="none" stroke-linecap="butt" stroke-linejoin="round"/>
<path d="M1218.0 299.0 C1235.5 299.8 1286.0 302.0 1323.0 304.0 C1360.0 306.0 1420.5 309.8 1440.0 311.0" stroke="#fff" stroke-width="14" fill="none" stroke-linecap="butt" stroke-linejoin="round"/>
<path d="M1323.0 305.0 L1323.0 472.0" stroke="#fff" stroke-width="13.5" fill="none" stroke-linecap="butt" stroke-linejoin="round"/>
<path d="M1000.0 457.0 C1046.7 459.5 1207.8 468.2 1280.0 472.0 C1352.2 475.8 1392.2 478.0 1433.0 480.0 C1473.8 482.0 1470.5 481.2 1525.0 484.0 C1579.5 486.8 1720.8 494.8 1760.0 497.0" stroke="#fff" stroke-width="14.5" fill="none" stroke-linecap="butt" stroke-linejoin="round"/>
<path d="M1425.0 214.0 C1425.8 218.7 1427.8 230.7 1430.0 242.0 C1432.2 253.3 1434.2 269.3 1438.0 282.0 C1441.8 294.7 1446.5 307.0 1453.0 318.0 C1459.5 329.0 1468.0 340.2 1477.0 348.0 C1486.0 355.8 1498.7 361.0 1507.0 365.0 C1515.3 369.0 1517.7 372.0 1527.0 372.0 C1536.3 372.0 1551.3 370.0 1563.0 365.0 C1574.7 360.0 1588.0 350.3 1597.0 342.0 C1606.0 333.7 1611.0 326.7 1617.0 315.0 C1623.0 303.3 1627.2 288.8 1633.0 272.0 C1638.8 255.2 1648.8 223.7 1652.0 214.0" stroke="#fff" stroke-width="15" fill="none" stroke-linecap="butt" stroke-linejoin="round"/>
<path d="M1617.0 318.0 C1638.7 320.8 1703.2 330.2 1747.0 335.0 C1790.8 339.8 1853.7 344.5 1880.0 347.0 C1906.3 349.5 1900.8 349.5 1905.0 350.0" stroke="#fff" stroke-width="14" fill="none" stroke-linecap="butt" stroke-linejoin="round"/>
<path d="M1845.0 212.0 L1905.0 233.0" stroke="#fff" stroke-width="14" fill="none" stroke-linecap="butt" stroke-linejoin="round"/>
<path d="M1527.0 372.0 C1526.0 385.8 1523.5 420.8 1521.0 455.0 C1518.5 489.2 1514.2 548.7 1512.0 577.0 C1509.8 605.3 1508.7 617.0 1508.0 625.0" stroke="#fff" stroke-width="14" fill="none" stroke-linecap="butt" stroke-linejoin="round"/>
<path d="M1747.0 337.0 L1747.0 495.0" stroke="#fff" stroke-width="13.5" fill="none" stroke-linecap="butt" stroke-linejoin="round"/>
<path d="M808.0 598.0 C807.2 607.2 804.8 632.7 803.0 653.0 C801.2 673.3 798.5 700.5 797.0 720.0 C795.5 739.5 791.8 753.3 794.0 770.0 C796.2 786.7 798.5 803.3 810.0 820.0 C821.5 836.7 837.5 848.3 863.0 870.0 C888.5 891.7 931.8 926.2 963.0 950.0 C994.2 973.8 1025.5 994.3 1050.0 1013.0 C1074.5 1031.7 1100.0 1053.8 1110.0 1062.0" stroke="#fff" stroke-width="14" fill="none" stroke-linecap="butt" stroke-linejoin="round"/>
<path d="M963.0 952.0 L880.0 1062.0" stroke="#fff" stroke-width="14" fill="none" stroke-linecap="butt" stroke-linejoin="round"/>
<path d="M942.0 606.0 C940.0 613.8 930.3 639.5 930.0 653.0 C929.7 666.5 931.2 674.7 940.0 687.0 C948.8 699.3 964.7 710.7 983.0 727.0 C1001.3 743.3 1027.7 766.5 1050.0 785.0 C1072.3 803.5 1097.5 823.5 1117.0 838.0 C1136.5 852.5 1139.3 849.5 1167.0 872.0 C1194.7 894.5 1252.5 945.0 1283.0 973.0 C1313.5 1001.0 1336.8 1025.2 1350.0 1040.0 C1363.2 1054.8 1360.0 1058.3 1362.0 1062.0" stroke="#fff" stroke-width="14.5" fill="none" stroke-linecap="butt" stroke-linejoin="round"/>
<path d="M972.0 603.0 C968.3 607.2 956.3 618.2 950.0 628.0 C943.7 637.8 936.7 656.3 934.0 662.0" stroke="#fff" stroke-width="12" fill="none" stroke-linecap="butt" stroke-linejoin="round"/>
<path d="M1287.0 633.0 C1283.0 642.0 1273.7 669.2 1263.0 687.0 C1252.3 704.8 1236.8 726.3 1223.0 740.0 C1209.2 753.7 1187.2 764.2 1180.0 769.0" stroke="#fff" stroke-width="14.5" fill="none" stroke-linecap="round" stroke-linejoin="round"/>
<path d="M1267.0 786.0 L1427.0 845.0" stroke="#fff" stroke-width="14.5" fill="none" stroke-linecap="butt" stroke-linejoin="round"/>
<path d="M1507.0 647.0 C1505.8 659.2 1501.7 700.7 1500.0 720.0 C1498.3 739.3 1500.3 750.2 1497.0 763.0 C1493.7 775.8 1489.5 780.3 1480.0 797.0 C1470.5 813.7 1453.8 840.3 1440.0 863.0 C1426.2 885.7 1409.8 908.0 1397.0 933.0 C1384.2 958.0 1371.2 991.5 1363.0 1013.0 C1354.8 1034.5 1350.5 1053.8 1348.0 1062.0" stroke="#fff" stroke-width="19" fill="none" stroke-linecap="butt" stroke-linejoin="round"/>
<path d="M1493.0 785.0 C1513.0 786.2 1576.3 789.8 1613.0 792.0 C1649.7 794.2 1692.3 794.5 1713.0 798.0 C1733.7 801.5 1730.3 803.8 1737.0 813.0 C1743.7 822.2 1747.5 837.3 1753.0 853.0 C1758.5 868.7 1766.7 891.3 1770.0 907.0 C1773.3 922.7 1774.7 934.3 1773.0 947.0 C1771.3 959.7 1767.7 972.0 1760.0 983.0 C1752.3 994.0 1745.8 1002.3 1727.0 1013.0 C1708.2 1023.7 1664.8 1038.8 1647.0 1047.0 C1629.2 1055.2 1624.5 1059.5 1620.0 1062.0" stroke="#fff" stroke-width="14.5" fill="none" stroke-linecap="butt" stroke-linejoin="round"/>
<path d="M1593.0 973.0 L1629.0 1062.0" stroke="#fff" stroke-width="13" fill="none" stroke-linecap="butt" stroke-linejoin="round"/>
<path d="M1375.0 1023.0 L1440.0 1062.0" stroke="#fff" stroke-width="14" fill="none" stroke-linecap="butt" stroke-linejoin="round"/>
<path d="M1833.0 957.0 C1834.7 967.5 1839.3 1002.5 1843.0 1020.0 C1846.7 1037.5 1853.0 1055.0 1855.0 1062.0" stroke="#fff" stroke-width="7" fill="none" stroke-linecap="butt" stroke-linejoin="round"/>
<path d="M1800.0 1042.0 C1807.5 1039.2 1828.3 1030.7 1845.0 1025.0 C1861.7 1019.3 1890.8 1010.8 1900.0 1008.0" stroke="#fff" stroke-width="8" fill="none" stroke-linecap="butt" stroke-linejoin="round"/>
<path d="M1837.0 663.0 C1835.3 675.3 1832.0 724.5 1827.0 737.0 C1822.0 749.5 1810.3 737.8 1807.0 738.0" stroke="#fff" stroke-width="6" fill="none" stroke-linecap="round" stroke-linejoin="round"/>
<path d="M1843.0 580.0 L1837.0 634.0" stroke="#fff" stroke-width="12" fill="none" stroke-linecap="butt" stroke-linejoin="round"/>
<path d="M1580.0 628.0 C1582.8 626.2 1555.3 616.7 1597.0 617.0 C1638.7 617.3 1791.2 627.8 1830.0 630.0" stroke="#fff" stroke-width="7.5" fill="none" stroke-linecap="butt" stroke-linejoin="round"/>
<path d="M1684.5 578.0 L1684.5 606.0" stroke="#fff" stroke-width="5" fill="none" stroke-linecap="butt" stroke-linejoin="round"/>
<path d="M330.0 903.0 L483.0 923.0" stroke="#fff" stroke-width="14" fill="none" stroke-linecap="butt" stroke-linejoin="round"/>
<path d="M532.0 842.0 C526.2 850.5 506.2 874.5 497.0 893.0 C487.8 911.5 486.3 924.8 477.0 953.0 C467.7 981.2 447.0 1043.8 441.0 1062.0" stroke="#fff" stroke-width="14" fill="none" stroke-linecap="butt" stroke-linejoin="round"/>
<path d="M330.0 750.0 L397.0 757.0" stroke="#fff" stroke-width="12" fill="none" stroke-linecap="round" stroke-linejoin="round"/>
<path d="M692.0 595.0 C689.5 604.7 682.7 637.7 677.0 653.0 C671.3 668.3 661.2 681.3 658.0 687.0" stroke="#fff" stroke-width="3" fill="none" stroke-linecap="butt" stroke-linejoin="round"/>
<path d="M417.0 768.0 C417.5 771.7 416.2 784.7 420.0 790.0 C423.8 795.3 433.0 800.0 440.0 800.0 C447.0 800.0 458.3 791.7 462.0 790.0" stroke="#fff" stroke-width="7" fill="none" stroke-linecap="butt" stroke-linejoin="round"/>
<path d="M850 604 L850 673 L912 673" stroke="#fff" stroke-width="7" fill="none" stroke-linecap="butt" stroke-linejoin="round"/>
<path d="M897 604 L897 636 L910 650 L912 673" stroke="#fff" stroke-width="7" fill="none" stroke-linecap="butt" stroke-linejoin="round"/>
<path d="M877 636 L897 636" stroke="#fff" stroke-width="6" fill="none" stroke-linecap="butt" stroke-linejoin="round"/>
<path d="M905.0 245.0 C912.5 247.8 940.8 265.3 950.0 262.0 C959.2 258.7 958.3 231.2 960.0 225.0" stroke="#fff" stroke-width="4" fill="none" stroke-linecap="butt" stroke-linejoin="round"/>
<path d="M1458.0 798.0 C1454.5 803.2 1442.5 819.0 1437.0 829.0 C1431.5 839.0 1428.8 847.8 1425.0 858.0 C1421.2 868.2 1415.8 884.7 1414.0 890.0" stroke="#fff" stroke-width="7.5" fill="none" stroke-linecap="butt" stroke-linejoin="round"/>
<circle cx="408" cy="233" r="12" fill="#fff"/>
<circle cx="890" cy="407" r="12" fill="#fff"/>
<circle cx="1267" cy="786" r="11" fill="#fff"/>
<path d="M1515.0 960.0 C1517.4 956.4 1527.4 938.7 1533.0 933.0 C1538.6 927.3 1548.5 921.0 1557.0 917.0 C1565.5 913.0 1587.3 905.0 1597.0 903.0 C1606.7 901.0 1623.3 901.1 1630.0 902.0 C1636.7 902.9 1644.3 906.3 1647.0 910.0 C1649.7 913.7 1658.9 923.3 1650.0 930.0 C1641.1 936.7 1596.4 953.3 1580.0 960.0 C1563.6 966.7 1535.4 978.7 1527.0 980.0 C1518.6 981.3 1518.6 972.7 1517.0 970.0 C1515.4 967.3 1515.3 961.3 1515.0 960.0Z" stroke="#fff" stroke-width="28" fill="#fff" stroke-linejoin="round"/>
<path d="M1515.0 960.0 C1517.4 956.4 1527.4 938.7 1533.0 933.0 C1538.6 927.3 1548.5 921.0 1557.0 917.0 C1565.5 913.0 1587.3 905.0 1597.0 903.0 C1606.7 901.0 1623.3 901.1 1630.0 902.0 C1636.7 902.9 1644.3 906.3 1647.0 910.0 C1649.7 913.7 1658.9 923.3 1650.0 930.0 C1641.1 936.7 1596.4 953.3 1580.0 960.0 C1563.6 966.7 1535.4 978.7 1527.0 980.0 C1518.6 981.3 1518.6 972.7 1517.0 970.0 C1515.4 967.3 1515.3 961.3 1515.0 960.0Z" fill="#cdebb0" stroke="#b9d99c" stroke-width=".8"/>
<path d="M1515 793 L1520 847 L1513 860 L1543 907 L1580 960" stroke="#f79d90" stroke-width="1.5" fill="none" stroke-dasharray="3 3"/>
<path d="M1462 792 L1427 830 L1410 900" stroke="#f79d90" stroke-width="1.5" fill="none" stroke-dasharray="3 3"/>
<path d="M1757 1007 L1790 1037" stroke="#f79d90" stroke-width="1.5" fill="none" stroke-dasharray="3 3"/>
<path d="M1473 305 L1473 318 L1580 327 L1587 272" stroke="#f79d90" stroke-width="1.5" fill="none" stroke-dasharray="3 3"/>
<path d="M1528 332 L1528 358" stroke="#f79d90" stroke-width="1.5" fill="none" stroke-dasharray="3 3"/>
<path d="M1587 300 L1613 301" stroke="#f79d90" stroke-width="1.5" fill="none" stroke-dasharray="3 3"/>
<path d="M1397 388 L1363 422 L1363 468 L1390 462 L1403 450 L1430 450 L1443 465" stroke="#f79d90" stroke-width="1.5" fill="none" stroke-dasharray="3 3"/>
<path d="M1433 393 L1470 422 L1472 432" stroke="#f79d90" stroke-width="1.5" fill="none" stroke-dasharray="3 3"/>
<path d="M1350 245 L1347 298" stroke="#f79d90" stroke-width="1.5" fill="none" stroke-dasharray="3 3"/>
<path d="M1352 243 L1380 257" stroke="#f79d90" stroke-width="1.5" fill="none" stroke-dasharray="3 3"/>
<path d="M1573 462 L1575 428 L1607 407" stroke="#f79d90" stroke-width="1.5" fill="none" stroke-dasharray="3 3"/>
<path d="M1810 415 L1810 445 L1860 450" stroke="#f79d90" stroke-width="1.5" fill="none" stroke-dasharray="3 3"/>
<path d="M1112 252 L1162 270 L1183 222" stroke="#f79d90" stroke-width="1.5" fill="none" stroke-dasharray="3 3"/>
<path d="M1162 270 L1150 308" stroke="#f79d90" stroke-width="1.5" fill="none" stroke-dasharray="3 3"/>
<path d="M1067 358 L1120 378 L1140 332" stroke="#f79d90" stroke-width="1.5" fill="none" stroke-dasharray="3 3"/>
<path d="M1120 378 L1113 398" stroke="#f79d90" stroke-width="1.5" fill="none" stroke-dasharray="3 3"/>
<path d="M1263 368 L1248 418 L1310 425" stroke="#f79d90" stroke-width="1.5" fill="none" stroke-dasharray="3 3"/>
<path d="M1232 419 L1248 419" stroke="#f79d90" stroke-width="1.5" fill="none" stroke-dasharray="3 3"/>
<path d="M987 423 L970 465" stroke="#f79d90" stroke-width="1.5" fill="none" stroke-dasharray="3 3"/>
<path d="M987 423 L1013 428" stroke="#f79d90" stroke-width="1.5" fill="none" stroke-dasharray="3 3"/>
<path d="M1017 483 L1048 482 L1048 463" stroke="#f79d90" stroke-width="1.5" fill="none" stroke-dasharray="3 3"/>
<path d="M855.2 209.1 L851.0 221.1 L791.5 401.0 L753.6 521.0 L737.5 572.0 L637.2 882.1 L573.7 1069.1" stroke="#707070" stroke-width="3.6" fill="none"/>
<path d="M855.2 209.1 L851.0 221.1 L791.5 401.0 L753.6 521.0 L737.5 572.0 L637.2 882.1 L573.7 1069.1" stroke="#e4e4e4" stroke-width="1.3" fill="none" stroke-dasharray="9 9"/>
<path d="M848.8 206.9 L844.6 218.9 L785.1 399.0 L747.2 519.0 L731.1 570.0 L630.8 879.9 L567.3 1066.9" stroke="#707070" stroke-width="3.6" fill="none"/>
<path d="M848.8 206.9 L844.6 218.9 L785.1 399.0 L747.2 519.0 L731.1 570.0 L630.8 879.9 L567.3 1066.9" stroke="#e4e4e4" stroke-width="1.3" fill="none" stroke-dasharray="9 9"/>
<path d="M330.0 563.0 C374.4 565.4 578.6 576.2 663.0 581.0 C747.4 585.8 880.7 594.1 963.0 599.0 C1045.3 603.9 1210.7 613.7 1280.0 618.0 C1349.3 622.3 1399.9 625.8 1483.0 631.0 C1566.1 636.2 1847.0 653.5 1903.0 657.0" stroke="#c3c66b" stroke-width="23.4" fill="none"/>
<path d="M328.0 697.0 C346.0 708.7 434.7 766.3 463.0 785.0 C491.3 803.7 512.9 817.3 540.0 837.0 C567.1 856.7 638.0 910.9 666.0 933.0 C694.0 955.1 729.2 985.8 750.0 1003.0 C770.8 1020.2 812.4 1054.1 822.0 1062.0" stroke="#c3c66b" stroke-width="20.4" fill="none"/>
<path d="M330.0 563.0 C374.4 565.4 578.6 576.2 663.0 581.0 C747.4 585.8 880.7 594.1 963.0 599.0 C1045.3 603.9 1210.7 613.7 1280.0 618.0 C1349.3 622.3 1399.9 625.8 1483.0 631.0 C1566.1 636.2 1847.0 653.5 1903.0 657.0" stroke="#f7fabf" stroke-width="21" fill="none"/>
<path d="M328.0 697.0 C346.0 708.7 434.7 766.3 463.0 785.0 C491.3 803.7 512.9 817.3 540.0 837.0 C567.1 856.7 638.0 910.9 666.0 933.0 C694.0 955.1 729.2 985.8 750.0 1003.0 C770.8 1020.2 812.4 1054.1 822.0 1062.0" stroke="#f7fabf" stroke-width="18" fill="none"/>
<path d="M330.0 563.0 C374.4 565.4 578.6 576.2 663.0 581.0 C747.4 585.8 880.7 594.1 963.0 599.0 C1045.3 603.9 1210.7 613.7 1280.0 618.0 C1349.3 622.3 1399.9 625.8 1483.0 631.0 C1566.1 636.2 1847.0 653.5 1903.0 657.0" stroke="#e7c3d4" stroke-width="1.3" fill="none" stroke-dasharray="9 7" clip-path="url(#cpE)"/>
<path d="M328.0 697.0 C346.0 708.7 434.7 766.3 463.0 785.0 C491.3 803.7 512.9 817.3 540.0 837.0 C567.1 856.7 638.0 910.9 666.0 933.0 C694.0 955.1 729.2 985.8 750.0 1003.0 C770.8 1020.2 812.4 1054.1 822.0 1062.0" stroke="#e7c3d4" stroke-width="1.2" fill="none" stroke-dasharray="5 5" clip-path="url(#cpW)"/>
<path d="M706.0 583.6 L758.0 586.7" stroke="#444" stroke-width="25" fill="none"/>
<path d="M706.0 583.6 L758.0 586.7" stroke="#f7fabf" stroke-width="21" fill="none"/>
<path d="M605.0 886.5 L647.0 918.5" stroke="#444" stroke-width="22" fill="none"/>
<path d="M605.0 886.5 L647.0 918.5" stroke="#f7fabf" stroke-width="18" fill="none"/>
<path d="M696.0 583.0 L768.0 587.3" stroke="#f7fabf" stroke-width="21" fill="none"/>
<path d="M597.0 880.4 L655.0 924.6" stroke="#f7fabf" stroke-width="18" fill="none"/>
<text x="478" y="222" transform="rotate(-8 478 222)" font-size="13.2" text-anchor="middle" dominant-baseline="central" fill="#333" stroke="#fff" stroke-width="2.8" paint-order="stroke" stroke-linejoin="round" textLength="88" lengthAdjust="spacing" font-weight="normal">Carnlough Road</text>
<text x="597" y="334" transform="rotate(69 597 334)" font-size="13.2" text-anchor="middle" dominant-baseline="central" fill="#333" stroke="#fff" stroke-width="2.8" paint-order="stroke" stroke-linejoin="round" textLength="107" lengthAdjust="spacing" font-weight="normal">Carnlough Road</text>
<text x="344" y="364" transform="rotate(2 344 364)" font-size="13.2" text-anchor="middle" dominant-baseline="central" fill="#333" stroke="#fff" stroke-width="2.8" paint-order="stroke" stroke-linejoin="round" textLength="76" lengthAdjust="spacing" font-weight="normal">Swilly Road</text>
<text x="383" y="567" transform="rotate(3 383 567)" font-size="13.2" text-anchor="middle" dominant-baseline="central" fill="#333" stroke="#fff" stroke-width="2.8" paint-order="stroke" stroke-linejoin="round" textLength="74" lengthAdjust="spacing" font-weight="normal">Cabra Road</text>
<text x="1290" y="620" transform="rotate(3.5 1290 620)" font-size="13.2" text-anchor="middle" dominant-baseline="central" fill="#333" stroke="#fff" stroke-width="2.8" paint-order="stroke" stroke-linejoin="round" textLength="76" lengthAdjust="spacing" font-weight="normal">Cabra Road</text>
<text x="848" y="593.5" transform="rotate(3.5 848 593.5)" font-size="13.2" text-anchor="middle" dominant-baseline="central" fill="#333" stroke="#fff" stroke-width="2.8" paint-order="stroke" stroke-linejoin="round" textLength="74" lengthAdjust="spacing" font-weight="normal">Cabra Road</text>
<text x="420" y="757" transform="rotate(31 420 757)" font-size="13.2" text-anchor="middle" dominant-baseline="central" fill="#333" stroke="#fff" stroke-width="2.8" paint-order="stroke" stroke-linejoin="round" textLength="100" lengthAdjust="spacing" font-weight="normal">Old Cabra Road</text>
<text x="815" y="1047" transform="rotate(35 815 1047)" font-size="13.2" text-anchor="middle" dominant-baseline="central" fill="#333" stroke="#fff" stroke-width="2.8" paint-order="stroke" stroke-linejoin="round" textLength="100" lengthAdjust="spacing" font-weight="normal">Old Cabra Road</text>
<text x="1081" y="302" transform="rotate(-65 1081 302)" font-size="13.2" text-anchor="middle" dominant-baseline="central" fill="#333" stroke="#fff" stroke-width="2.8" paint-order="stroke" stroke-linejoin="round" textLength="82" lengthAdjust="spacing" font-weight="normal">Quarry Road</text>
<text x="1031" y="232" transform="rotate(16 1031 232)" font-size="13.2" text-anchor="middle" dominant-baseline="central" fill="#333" stroke="#fff" stroke-width="2.8" paint-order="stroke" stroke-linejoin="round" textLength="82" lengthAdjust="spacing" font-weight="normal">Quarry Road</text>
<text x="951" y="435" transform="rotate(24 951 435)" font-size="13.2" text-anchor="middle" dominant-baseline="central" fill="#333" stroke="#fff" stroke-width="2.8" paint-order="stroke" stroke-linejoin="round" textLength="82" lengthAdjust="spacing" font-weight="normal">Quarry Road</text>
<text x="1212" y="310" transform="rotate(-63 1212 310)" font-size="13.2" text-anchor="middle" dominant-baseline="central" fill="#333" stroke="#fff" stroke-width="2.8" paint-order="stroke" stroke-linejoin="round" textLength="68" lengthAdjust="spacing" font-weight="normal">Erris Road</text>
<text x="1323" y="390" transform="rotate(-90 1323 390)" font-size="13.2" text-anchor="middle" dominant-baseline="central" fill="#333" stroke="#fff" stroke-width="2.8" paint-order="stroke" stroke-linejoin="round" textLength="100" lengthAdjust="spacing" font-weight="normal">Fertullagh Road</text>
<text x="1437" y="482" transform="rotate(2 1437 482)" font-size="13.2" text-anchor="middle" dominant-baseline="central" fill="#333" stroke="#fff" stroke-width="2.8" paint-order="stroke" stroke-linejoin="round" textLength="58" lengthAdjust="spacing" font-weight="normal">Leix Road</text>
<text x="1544" y="362" transform="rotate(-16 1544 362)" font-size="13.2" text-anchor="middle" dominant-baseline="central" fill="#333" stroke="#fff" stroke-width="2.8" paint-order="stroke" stroke-linejoin="round" textLength="76" lengthAdjust="spacing" font-weight="normal">Offaly Road</text>
<text x="1427" y="218" transform="rotate(80 1427 218)" font-size="13.2" text-anchor="middle" dominant-baseline="central" fill="#333" stroke="#fff" stroke-width="2.8" paint-order="stroke" stroke-linejoin="round" textLength="72" lengthAdjust="spacing" font-weight="normal">Offaly Road</text>
<text x="1646" y="240" transform="rotate(-61 1646 240)" font-size="13.2" text-anchor="middle" dominant-baseline="central" fill="#333" stroke="#fff" stroke-width="2.8" paint-order="stroke" stroke-linejoin="round" textLength="76" lengthAdjust="spacing" font-weight="normal">Bregia Road</text>
<text x="1747" y="416" transform="rotate(-90 1747 416)" font-size="13.2" text-anchor="middle" dominant-baseline="central" fill="#333" stroke="#fff" stroke-width="2.8" paint-order="stroke" stroke-linejoin="round" textLength="72" lengthAdjust="spacing" font-weight="normal">Cuala Road</text>
<text x="1880" y="383" transform="rotate(-78 1880 383)" font-size="13.2" text-anchor="middle" dominant-baseline="central" fill="#333" stroke="#fff" stroke-width="2.8" paint-order="stroke" stroke-linejoin="round" textLength="92" lengthAdjust="spacing" font-weight="normal">Dowth Avenue</text>
<text x="803" y="801" transform="rotate(66 803 801)" font-size="13.2" text-anchor="middle" dominant-baseline="central" fill="#333" stroke="#fff" stroke-width="2.8" paint-order="stroke" stroke-linejoin="round" textLength="76" lengthAdjust="spacing" font-weight="normal">Cabra Drive</text>
<text x="917" y="1022" transform="rotate(-52 917 1022)" font-size="13.2" text-anchor="middle" dominant-baseline="central" fill="#333" stroke="#fff" stroke-width="2.8" paint-order="stroke" stroke-linejoin="round" textLength="76" lengthAdjust="spacing" font-weight="normal">Cabra Drive</text>
<text x="1068" y="1028" transform="rotate(37 1068 1028)" font-size="13.2" text-anchor="middle" dominant-baseline="central" fill="#333" stroke="#fff" stroke-width="2.8" paint-order="stroke" stroke-linejoin="round" textLength="76" lengthAdjust="spacing" font-weight="normal">Cabra Drive</text>
<text x="1114" y="833" transform="rotate(36 1114 833)" font-size="13.2" text-anchor="middle" dominant-baseline="central" fill="#333" stroke="#fff" stroke-width="2.8" paint-order="stroke" stroke-linejoin="round" textLength="100" lengthAdjust="spacing" font-weight="normal">Annamoe Road</text>
<text x="1247" y="704" transform="rotate(-52 1247 704)" font-size="13.2" text-anchor="middle" dominant-baseline="central" fill="#333" stroke="#fff" stroke-width="2.8" paint-order="stroke" stroke-linejoin="round" textLength="82" lengthAdjust="spacing" font-weight="normal">Cabra Grove</text>
<text x="1357" y="820" transform="rotate(21 1357 820)" font-size="13.2" text-anchor="middle" dominant-baseline="central" fill="#333" stroke="#fff" stroke-width="2.8" paint-order="stroke" stroke-linejoin="round" textLength="115" lengthAdjust="spacing" font-weight="normal">Annamoe Terrace</text>
<text x="1452" y="849" transform="rotate(-62 1452 849)" font-size="13.2" text-anchor="middle" dominant-baseline="central" fill="#333" stroke="#fff" stroke-width="2.8" paint-order="stroke" stroke-linejoin="round" textLength="115" lengthAdjust="spacing" font-weight="normal">Annamoe Terrace</text>
<text x="1570" y="911" transform="rotate(-21 1570 911)" font-size="13.2" text-anchor="middle" dominant-baseline="central" fill="#333" stroke="#fff" stroke-width="2.8" paint-order="stroke" stroke-linejoin="round" textLength="92" lengthAdjust="spacing" font-weight="normal">Annamoe Park</text>
<text x="1611" y="1014" transform="rotate(66 1611 1014)" font-size="13.2" text-anchor="middle" dominant-baseline="central" fill="#333" stroke="#fff" stroke-width="2.8" paint-order="stroke" stroke-linejoin="round" textLength="92" lengthAdjust="spacing" font-weight="normal">Annamoe Park</text>
<text x="1751" y="982" transform="rotate(-56 1751 982)" font-size="13.2" text-anchor="middle" dominant-baseline="central" fill="#333" stroke="#fff" stroke-width="2.8" paint-order="stroke" stroke-linejoin="round" textLength="96" lengthAdjust="spacing" font-weight="normal">Annamoe Drive</text>
<text x="689" y="747" transform="rotate(-69 689 747)" font-size="12.5" text-anchor="middle" dominant-baseline="central" fill="#8d8d8d" stroke="rgba(255,255,255,.5)" stroke-width="1.5" paint-order="stroke" stroke-linejoin="round" textLength="160" lengthAdjust="spacing" font-weight="normal">GSWR North Wall Branch</text>
<text x="771" y="411" transform="rotate(-69 771 411)" font-size="12" text-anchor="middle" dominant-baseline="central" fill="#a58aa5" stroke="rgba(255,255,255,.4)" stroke-width="1.2" paint-order="stroke" stroke-linejoin="round" textLength="143" lengthAdjust="spacing" font-weight="normal">Cabra West C Ward 1986</text>
<text x="708" y="600" transform="rotate(-70 708 600)" font-size="12" text-anchor="middle" dominant-baseline="central" fill="#a58aa5" stroke="rgba(255,255,255,.4)" stroke-width="1.2" paint-order="stroke" stroke-linejoin="round" textLength="96" lengthAdjust="spacing" font-weight="normal">Cabra West C ED</text>
<text x="372" y="832" transform="rotate(6 372 832)" font-size="12.5" text-anchor="middle" dominant-baseline="central" fill="#a070a0" stroke="rgba(255,255,255,.5)" stroke-width="1.5" paint-order="stroke" stroke-linejoin="round" textLength="118" lengthAdjust="spacing" font-weight="normal">Grangegorman Middle</text>
<text x="335" y="751" transform="rotate(8 335 751)" font-size="13.2" text-anchor="middle" dominant-baseline="central" fill="#333" stroke="#fff" stroke-width="2.8" paint-order="stroke" stroke-linejoin="round" textLength="100" lengthAdjust="spacing" font-weight="normal">Drumalee's Court</text>
<text x="337" y="733" transform="rotate(5 337 733)" font-size="12" text-anchor="middle" dominant-baseline="central" fill="#888" stroke="#fff" stroke-width="2.8" paint-order="stroke" stroke-linejoin="round" textLength="32" lengthAdjust="spacing" font-weight="normal">Court</text>
<text x="350" y="902" transform="rotate(7 350 902)" font-size="13.2" text-anchor="middle" dominant-baseline="central" fill="#333" stroke="#fff" stroke-width="2.8" paint-order="stroke" stroke-linejoin="round" textLength="30" lengthAdjust="spacing" font-weight="normal">Road</text>
<rect x="771" y="578" width="38" height="21" rx="2.5" fill="#f1f3c5" stroke="#d9dca0" stroke-width=".8"/>
<text x="790" y="589" font-size="12.500" text-anchor="middle" dominant-baseline="central" fill="#6b6b5c" textLength="30">R147</text>
<rect x="1361" y="612" width="38" height="21" rx="2.5" fill="#f1f3c5" stroke="#d9dca0" stroke-width=".8"/>
<text x="1380" y="623" font-size="12.500" text-anchor="middle" dominant-baseline="central" fill="#6b6b5c" textLength="30">R147</text>
<g transform="translate(636.5 463.5)"><rect x="0" y="0" width="11" height="12" rx="2.2" fill="#0a8fd8"/><rect x="1.8" y="2" width="7.4" height="4.2" rx=".6" fill="#dff1fb"/><circle cx="2.9" cy="8.8" r="1" fill="#dff1fb"/><circle cx="8.1" cy="8.800" r="1" fill="#dff1fb"/><rect x="1.3" y="12" width="2.2" height="1.6" fill="#0a8fd8"/><rect x="7.5" y="12" width="2.2" height="1.6" fill="#0a8fd8"/></g>
<g transform="translate(660.5 507.5)"><rect x="0" y="0" width="11" height="12" rx="2.2" fill="#0a8fd8"/><rect x="1.8" y="2" width="7.4" height="4.2" rx=".6" fill="#dff1fb"/><circle cx="2.9" cy="8.8" r="1" fill="#dff1fb"/><circle cx="8.1" cy="8.800" r="1" fill="#dff1fb"/><rect x="1.3" y="12" width="2.2" height="1.6" fill="#0a8fd8"/><rect x="7.5" y="12" width="2.2" height="1.6" fill="#0a8fd8"/></g>
<g transform="translate(519.5 576.5)"><rect x="0" y="0" width="11" height="12" rx="2.2" fill="#0a8fd8"/><rect x="1.8" y="2" width="7.4" height="4.2" rx=".6" fill="#dff1fb"/><circle cx="2.9" cy="8.8" r="1" fill="#dff1fb"/><circle cx="8.1" cy="8.800" r="1" fill="#dff1fb"/><rect x="1.3" y="12" width="2.2" height="1.6" fill="#0a8fd8"/><rect x="7.5" y="12" width="2.2" height="1.6" fill="#0a8fd8"/></g>
<g transform="translate(579.5 561.5)"><rect x="0" y="0" width="11" height="12" rx="2.2" fill="#0a8fd8"/><rect x="1.8" y="2" width="7.4" height="4.2" rx=".6" fill="#dff1fb"/><circle cx="2.9" cy="8.8" r="1" fill="#dff1fb"/><circle cx="8.1" cy="8.800" r="1" fill="#dff1fb"/><rect x="1.3" y="12" width="2.2" height="1.6" fill="#0a8fd8"/><rect x="7.5" y="12" width="2.2" height="1.6" fill="#0a8fd8"/></g>
<g transform="translate(1074.5 585.5)"><rect x="0" y="0" width="11" height="12" rx="2.2" fill="#0a8fd8"/><rect x="1.8" y="2" width="7.4" height="4.2" rx=".6" fill="#dff1fb"/><circle cx="2.9" cy="8.8" r="1" fill="#dff1fb"/><circle cx="8.1" cy="8.800" r="1" fill="#dff1fb"/><rect x="1.3" y="12" width="2.2" height="1.6" fill="#0a8fd8"/><rect x="7.5" y="12" width="2.2" height="1.6" fill="#0a8fd8"/></g>
<g transform="translate(1144.5 613.5)"><rect x="0" y="0" width="11" height="12" rx="2.2" fill="#0a8fd8"/><rect x="1.8" y="2" width="7.4" height="4.2" rx=".6" fill="#dff1fb"/><circle cx="2.9" cy="8.8" r="1" fill="#dff1fb"/><circle cx="8.1" cy="8.800" r="1" fill="#dff1fb"/><rect x="1.3" y="12" width="2.2" height="1.6" fill="#0a8fd8"/><rect x="7.5" y="12" width="2.2" height="1.6" fill="#0a8fd8"/></g>
<g transform="translate(482.5 800.5)"><rect x="0" y="0" width="11" height="12" rx="2.2" fill="#0a8fd8"/><rect x="1.8" y="2" width="7.4" height="4.2" rx=".6" fill="#dff1fb"/><circle cx="2.9" cy="8.8" r="1" fill="#dff1fb"/><circle cx="8.1" cy="8.800" r="1" fill="#dff1fb"/><rect x="1.3" y="12" width="2.2" height="1.6" fill="#0a8fd8"/><rect x="7.5" y="12" width="2.2" height="1.6" fill="#0a8fd8"/></g>
<g transform="translate(605.5 870.5)"><rect x="0" y="0" width="11" height="12" rx="2.2" fill="#0a8fd8"/><rect x="1.8" y="2" width="7.4" height="4.2" rx=".6" fill="#dff1fb"/><circle cx="2.9" cy="8.8" r="1" fill="#dff1fb"/><circle cx="8.1" cy="8.800" r="1" fill="#dff1fb"/><rect x="1.3" y="12" width="2.2" height="1.6" fill="#0a8fd8"/><rect x="7.5" y="12" width="2.2" height="1.6" fill="#0a8fd8"/></g>
<g transform="translate(1655.5 648.5)"><rect x="0" y="0" width="11" height="12" rx="2.2" fill="#0a8fd8"/><rect x="1.8" y="2" width="7.4" height="4.2" rx=".6" fill="#dff1fb"/><circle cx="2.9" cy="8.8" r="1" fill="#dff1fb"/><circle cx="8.1" cy="8.800" r="1" fill="#dff1fb"/><rect x="1.3" y="12" width="2.2" height="1.6" fill="#0a8fd8"/><rect x="7.5" y="12" width="2.2" height="1.6" fill="#0a8fd8"/></g>
<g transform="translate(1749.5 630.5)"><rect x="0" y="0" width="11" height="12" rx="2.2" fill="#0a8fd8"/><rect x="1.8" y="2" width="7.4" height="4.2" rx=".6" fill="#dff1fb"/><circle cx="2.9" cy="8.8" r="1" fill="#dff1fb"/><circle cx="8.1" cy="8.800" r="1" fill="#dff1fb"/><rect x="1.3" y="12" width="2.2" height="1.6" fill="#0a8fd8"/><rect x="7.5" y="12" width="2.2" height="1.6" fill="#0a8fd8"/></g>
<g transform="translate(1843.5 594.5)"><rect x="0" y="0" width="11" height="12" rx="2.2" fill="#0a8fd8"/><rect x="1.8" y="2" width="7.4" height="4.2" rx=".6" fill="#dff1fb"/><circle cx="2.9" cy="8.8" r="1" fill="#dff1fb"/><circle cx="8.1" cy="8.800" r="1" fill="#dff1fb"/><rect x="1.3" y="12" width="2.2" height="1.6" fill="#0a8fd8"/><rect x="7.5" y="12" width="2.2" height="1.6" fill="#0a8fd8"/></g>
<g transform="translate(1881.5 296.5)"><rect x="0" y="0" width="11" height="12" rx="2.2" fill="#0a8fd8"/><rect x="1.8" y="2" width="7.4" height="4.2" rx=".6" fill="#dff1fb"/><circle cx="2.9" cy="8.8" r="1" fill="#dff1fb"/><circle cx="8.1" cy="8.800" r="1" fill="#dff1fb"/><rect x="1.3" y="12" width="2.2" height="1.6" fill="#0a8fd8"/><rect x="7.5" y="12" width="2.2" height="1.6" fill="#0a8fd8"/></g>
<text x="666" y="531.0" font-size="13" text-anchor="middle" dominant-baseline="central" fill="#0a8fd8" stroke="rgba(255,255,255,.85)" stroke-width="2.2" paint-order="stroke" stroke-linejoin="round">Swilly Road</text>
<g transform="translate(470 533)" fill="#0a8fd8"><path d="M9 0 L16 5 H2 Z" opacity=".45"/><rect x="0" y="4" width="1.8" height="11"/><rect x="16.200" y="7" width="1.8" height="8"/><rect x="0" y="10" width="18" height="2.6"/><circle cx="4.6" cy="7.8" r="1.7"/><rect x="7" y="6.4" width="9.5" height="3" rx="1"/></g>
<text x="479" y="557.0" font-size="13" text-anchor="middle" dominant-baseline="central" fill="#0a8fd8" stroke="rgba(255,255,255,.85)" stroke-width="2.2" paint-order="stroke" stroke-linejoin="round">Bradoge</text>
<text x="479" y="571.8" font-size="13" text-anchor="middle" dominant-baseline="central" fill="#0a8fd8" stroke="rgba(255,255,255,.85)" stroke-width="2.2" paint-order="stroke" stroke-linejoin="round">House</text>
<text x="525" y="601.0" font-size="13" text-anchor="middle" dominant-baseline="central" fill="#0a8fd8" stroke="rgba(255,255,255,.85)" stroke-width="2.2" paint-order="stroke" stroke-linejoin="round">Cabra</text>
<text x="525" y="615.8" font-size="13" text-anchor="middle" dominant-baseline="central" fill="#0a8fd8" stroke="rgba(255,255,255,.85)" stroke-width="2.2" paint-order="stroke" stroke-linejoin="round">Road</text>
<text x="585" y="585.0" font-size="13" text-anchor="middle" dominant-baseline="central" fill="#0a8fd8" stroke="rgba(255,255,255,.85)" stroke-width="2.2" paint-order="stroke" stroke-linejoin="round">Cabra</text>
<text x="585" y="599.8" font-size="13" text-anchor="middle" dominant-baseline="central" fill="#0a8fd8" stroke="rgba(255,255,255,.85)" stroke-width="2.2" paint-order="stroke" stroke-linejoin="round">Road</text>
<text x="1080" y="608.0" font-size="13" text-anchor="middle" dominant-baseline="central" fill="#0a8fd8" stroke="rgba(255,255,255,.85)" stroke-width="2.2" paint-order="stroke" stroke-linejoin="round">Cabra</text>
<text x="1080" y="622.8" font-size="13" text-anchor="middle" dominant-baseline="central" fill="#0a8fd8" stroke="rgba(255,255,255,.85)" stroke-width="2.2" paint-order="stroke" stroke-linejoin="round">Road</text>
<text x="1151" y="637.0" font-size="13" text-anchor="middle" dominant-baseline="central" fill="#0a8fd8" stroke="rgba(255,255,255,.85)" stroke-width="2.2" paint-order="stroke" stroke-linejoin="round">Cabra</text>
<text x="1151" y="651.8" font-size="13" text-anchor="middle" dominant-baseline="central" fill="#0a8fd8" stroke="rgba(255,255,255,.85)" stroke-width="2.2" paint-order="stroke" stroke-linejoin="round">Road, Quarry</text>
<text x="1151" y="666.6" font-size="13" text-anchor="middle" dominant-baseline="central" fill="#0a8fd8" stroke="rgba(255,255,255,.85)" stroke-width="2.2" paint-order="stroke" stroke-linejoin="round">Road</text>
<text x="1755" y="654.0" font-size="13" text-anchor="middle" dominant-baseline="central" fill="#0a8fd8" stroke="rgba(255,255,255,.85)" stroke-width="2.2" paint-order="stroke" stroke-linejoin="round">Cabra</text>
<text x="1755" y="668.8" font-size="13" text-anchor="middle" dominant-baseline="central" fill="#0a8fd8" stroke="rgba(255,255,255,.85)" stroke-width="2.2" paint-order="stroke" stroke-linejoin="round">Road</text>
<text x="488" y="823.0" font-size="13" text-anchor="middle" dominant-baseline="central" fill="#0a8fd8" stroke="rgba(255,255,255,.85)" stroke-width="2.2" paint-order="stroke" stroke-linejoin="round">Old Cabra</text>
<text x="488" y="837.8" font-size="13" text-anchor="middle" dominant-baseline="central" fill="#0a8fd8" stroke="rgba(255,255,255,.85)" stroke-width="2.2" paint-order="stroke" stroke-linejoin="round">Road</text>
<text x="611" y="894.0" font-size="13" text-anchor="middle" dominant-baseline="central" fill="#0a8fd8" stroke="rgba(255,255,255,.85)" stroke-width="2.2" paint-order="stroke" stroke-linejoin="round">Old Cabra</text>
<text x="611" y="908.8" font-size="13" text-anchor="middle" dominant-baseline="central" fill="#0a8fd8" stroke="rgba(255,255,255,.85)" stroke-width="2.2" paint-order="stroke" stroke-linejoin="round">Road</text>
<g transform="translate(1044 652)" fill="#0a8fd8"><path d="M9 0 L16 5 H2 Z" opacity=".45"/><rect x="0" y="4" width="1.8" height="11"/><rect x="16.200" y="7" width="1.8" height="8"/><rect x="0" y="10" width="18" height="2.6"/><circle cx="4.6" cy="7.8" r="1.7"/><rect x="7" y="6.4" width="9.5" height="3" rx="1"/></g>
<text x="1053" y="677.0" font-size="13" text-anchor="middle" dominant-baseline="central" fill="#0a8fd8" stroke="rgba(255,255,255,.85)" stroke-width="2.2" paint-order="stroke" stroke-linejoin="round">Sycamore</text>
<text x="1053" y="691.8" font-size="13" text-anchor="middle" dominant-baseline="central" fill="#0a8fd8" stroke="rgba(255,255,255,.85)" stroke-width="2.2" paint-order="stroke" stroke-linejoin="round">House</text>
<g transform="translate(661 996)" fill="#0a8fd8"><path d="M9 0 L16 5 H2 Z" opacity=".45"/><rect x="0" y="4" width="1.8" height="11"/><rect x="16.200" y="7" width="1.8" height="8"/><rect x="0" y="10" width="18" height="2.6"/><circle cx="4.6" cy="7.8" r="1.7"/><rect x="7" y="6.4" width="9.5" height="3" rx="1"/></g>
<text x="670" y="1019.0" font-size="13" text-anchor="middle" dominant-baseline="central" fill="#0a8fd8" stroke="rgba(255,255,255,.85)" stroke-width="2.2" paint-order="stroke" stroke-linejoin="round">Ryan's</text>
<text x="670" y="1033.8" font-size="13" text-anchor="middle" dominant-baseline="central" fill="#0a8fd8" stroke="rgba(255,255,255,.85)" stroke-width="2.2" paint-order="stroke" stroke-linejoin="round">Bed and</text>
<text x="670" y="1048.6" font-size="13" text-anchor="middle" dominant-baseline="central" fill="#0a8fd8" stroke="rgba(255,255,255,.85)" stroke-width="2.2" paint-order="stroke" stroke-linejoin="round">Breakfast</text>
<g transform="translate(649 966)" fill="none" stroke="#0a8a0a" stroke-width="1.8" stroke-linecap="round"><circle cx="10.500" cy="2" r="1.6" fill="#0a8a0a" stroke="none"/><path d="M9 5.500L6 10L9.500 12.500L7.500 17M9 5.500L4.500 6L2.500 9M9 5.500L12.500 8.500L15 7.500M6 10L3 13L0 13.500"/></g>
<text x="872" y="649.0" font-size="13" text-anchor="middle" dominant-baseline="central" fill="#0a8fd8" stroke="rgba(255,255,255,.85)" stroke-width="2.2" paint-order="stroke" stroke-linejoin="round">Circle K</text>
<text x="909" y="673.0" font-size="13" text-anchor="middle" dominant-baseline="central" fill="#a0703a" stroke="rgba(255,255,255,.85)" stroke-width="2.2" paint-order="stroke" stroke-linejoin="round">Circle K</text>
<g transform="translate(902 650)" fill="#8a5a1c"><path d="M2 6L3.500 2.500H10.500L12 6V11H10.500V9.800H3.500V11H2Z"/><rect x="3.800" y="0" width="6.400" height="1.400"/></g>
<text x="862" y="513.0" font-size="13" text-anchor="middle" dominant-baseline="central" fill="#6d6d6d" stroke="rgba(255,255,255,.85)" stroke-width="2.2" paint-order="stroke" stroke-linejoin="round">Thomas</text>
<text x="862" y="529.5" font-size="13" text-anchor="middle" dominant-baseline="central" fill="#6d6d6d" stroke="rgba(255,255,255,.85)" stroke-width="2.2" paint-order="stroke" stroke-linejoin="round">Ryan</text>
<text x="862" y="546.0" font-size="13" text-anchor="middle" dominant-baseline="central" fill="#6d6d6d" stroke="rgba(255,255,255,.85)" stroke-width="2.2" paint-order="stroke" stroke-linejoin="round">and</text>
<text x="862" y="562.5" font-size="13" text-anchor="middle" dominant-baseline="central" fill="#6d6d6d" stroke="rgba(255,255,255,.85)" stroke-width="2.2" paint-order="stroke" stroke-linejoin="round">Company</text>
<text x="1023" y="262.0" font-size="13" text-anchor="middle" dominant-baseline="central" fill="#6d6d6d" stroke="rgba(255,255,255,.85)" stroke-width="2.2" paint-order="stroke" stroke-linejoin="round">Cabra</text>
<text x="1023" y="278.0" font-size="13" text-anchor="middle" dominant-baseline="central" fill="#6d6d6d" stroke="rgba(255,255,255,.85)" stroke-width="2.2" paint-order="stroke" stroke-linejoin="round">Grand</text>
<text x="957" y="300.0" font-size="12.5" text-anchor="middle" dominant-baseline="central" fill="#c45cc4" stroke="rgba(255,255,255,.85)" stroke-width="2.2" paint-order="stroke" stroke-linejoin="round">Goslins</text>
<text x="957" y="315.0" font-size="12.5" text-anchor="middle" dominant-baseline="central" fill="#c45cc4" stroke="rgba(255,255,255,.85)" stroke-width="2.2" paint-order="stroke" stroke-linejoin="round">Builders</text>
<text x="957" y="330.0" font-size="12.5" text-anchor="middle" dominant-baseline="central" fill="#c45cc4" stroke="rgba(255,255,255,.85)" stroke-width="2.2" paint-order="stroke" stroke-linejoin="round">Providers</text>
<text x="957" y="345.0" font-size="12.5" text-anchor="middle" dominant-baseline="central" fill="#c45cc4" stroke="rgba(255,255,255,.85)" stroke-width="2.2" paint-order="stroke" stroke-linejoin="round">- closed</text>
<text x="1526" y="317.0" font-size="12" text-anchor="middle" dominant-baseline="central" fill="#5d5d5d" stroke="rgba(255,255,255,.85)" stroke-width="2.2" paint-order="stroke" stroke-linejoin="round">Christ</text>
<text x="1526" y="332.5" font-size="12" text-anchor="middle" dominant-baseline="central" fill="#5d5d5d" stroke="rgba(255,255,255,.85)" stroke-width="2.2" paint-order="stroke" stroke-linejoin="round">the King</text>
<path d="M1526 287V304M1520.500 292H1531.500" stroke="#111" stroke-width="2.200" fill="none"/>
<text x="1602" y="595.0" font-size="13" text-anchor="middle" dominant-baseline="central" fill="#6d6d6d" stroke="rgba(255,255,255,.85)" stroke-width="2.2" paint-order="stroke" stroke-linejoin="round">Seetec</text>
<text x="1624" y="634.0" font-size="12.8" text-anchor="middle" dominant-baseline="central" fill="#e03a3a" stroke="rgba(255,255,255,.85)" stroke-width="2.2" paint-order="stroke" stroke-linejoin="round">Cabra</text>
<text x="1624" y="648.5" font-size="12.8" text-anchor="middle" dominant-baseline="central" fill="#e03a3a" stroke="rgba(255,255,255,.85)" stroke-width="2.2" paint-order="stroke" stroke-linejoin="round">Medical</text>
<text x="1624" y="663.0" font-size="12.8" text-anchor="middle" dominant-baseline="central" fill="#e03a3a" stroke="rgba(255,255,255,.85)" stroke-width="2.2" paint-order="stroke" stroke-linejoin="round">Centre</text>
<rect x="1627.5" y="575.5" width="13" height="13" rx="2" fill="#da0010"/><path d="M1634 578V586M1630 582H1638" stroke="#fff" stroke-width="2.200"/>
<rect x="1670.5" y="571.5" width="13" height="13" rx="2" fill="#da0010"/><path d="M1677 574V582M1673 578H1681" stroke="#fff" stroke-width="2.200"/>
<path d="M1616 620V612Q1616 609 1619 608.5Q1624 601 1629 608.5Q1632 609 1632 612V620Z" fill="#da0010"/><path d="M1624 610V618M1620 614H1628" stroke="#fff" stroke-width="2.200"/>
<text x="1815" y="626.0" font-size="12.5" text-anchor="middle" dominant-baseline="central" fill="#8a5a1c" stroke="rgba(255,255,255,.85)" stroke-width="2.2" paint-order="stroke" stroke-linejoin="round">AIB</text>
<g transform="translate(1806 601)"><rect width="18" height="12" fill="#8a5a1c"/><ellipse cx="9" cy="6" rx="5" ry="3.500" fill="#f3e6d3"/><circle cx="9" cy="6" r="1.800" fill="#8a5a1c"/></g>
<g transform="translate(1458 702)"><rect width="18" height="12" fill="#8a5a1c"/><ellipse cx="9" cy="6" rx="5" ry="3.500" fill="#f3e6d3"/><circle cx="9" cy="6" r="1.800" fill="#8a5a1c"/></g>
<text x="1712" y="634" font-size="21" font-weight="bold" text-anchor="middle" dominant-baseline="central" fill="#0a8fd8">P</text>
<text x="1430" y="848" font-size="21" font-weight="bold" text-anchor="middle" dominant-baseline="central" fill="#0a8fd8">P</text>
<text x="1283" y="1039.0" font-size="12.5" text-anchor="middle" dominant-baseline="central" fill="#8a8a8a" stroke="rgba(255,255,255,.85)" stroke-width="2.2" paint-order="stroke" stroke-linejoin="round">The Bungalow</text>
<g transform="translate(417.500 778) scale(.8)" fill="#0a8fd8"><path d="M19.770 7.230l.010-.010-3.720-3.720L15 4.560l2.110 2.110c-.940.360-1.610 1.260-1.610 2.330 0 1.380 1.120 2.500 2.500 2.500.360 0 .690-.080 1-.210v7.210c0 .550-.450 1-1 1s-1-.450-1-1V14c0-1.100-.9-2-2-2h-1V5c0-1.100-.9-2-2-2H6c-1.100 0-2 .9-2 2v16h10v-7.500h1.500v5c0 1.380 1.120 2.500 2.500 2.500s2.500-1.120 2.500-2.500V9c0-.690-.280-1.320-.730-1.770zM12 10H6V5h6v5z"/></g>
<g transform="translate(865 633) scale(.5)" fill="#0a8fd8"><path d="M4 21V5c0-1.100.9-2 2-2h6c1.100 0 2 .9 2 2v16z"/></g>
<g transform="translate(732 218)" fill="#ac39ac"><rect x="1" y="2" width="14" height="8" rx="1"/><rect x="2" y="11" width="12" height="1.600"/><circle cx="4" cy="14.500" r="1.500"/><circle cx="12" cy="14.500" r="1.500"/></g>
<g fill="#da0010"><circle cx="1883" cy="609" r="5" fill="none" stroke="#da0010" stroke-width="2.500"/><circle cx="1877" cy="600" r="2"/><circle cx="1881" cy="597.500" r="2"/><circle cx="1886" cy="597.500" r="2"/><circle cx="1890" cy="600.500" r="2"/></g>
<g fill="#8a5a1c"><circle cx="1864" cy="578" r="3"/><path d="M1857 574v9l4 4h6l4-4v-9h-2.500v8l-2 2h-5l-2-2v-8z"/></g>
<g transform="translate(659 574)"><rect width="6" height="16" rx="2.8" fill="#5a5a5a"/><circle cx="3" cy="3.300" r="1.3" fill="#d8d8c8"/><circle cx="3" cy="8" r="1.3" fill="#d8d8c8"/><circle cx="3" cy="12.700" r="1.3" fill="#d8d8c8"/></g>
<g transform="translate(954 591)"><rect width="6" height="16" rx="2.8" fill="#5a5a5a"/><circle cx="3" cy="3.300" r="1.3" fill="#d8d8c8"/><circle cx="3" cy="8" r="1.3" fill="#d8d8c8"/><circle cx="3" cy="12.700" r="1.3" fill="#d8d8c8"/></g>
<g transform="translate(1505 625)"><rect width="6" height="16" rx="2.8" fill="#5a5a5a"/><circle cx="3" cy="3.300" r="1.3" fill="#d8d8c8"/><circle cx="3" cy="8" r="1.3" fill="#d8d8c8"/><circle cx="3" cy="12.700" r="1.3" fill="#d8d8c8"/></g>
<g transform="translate(1809 642)"><rect width="6" height="16" rx="2.8" fill="#5a5a5a"/><circle cx="3" cy="3.300" r="1.3" fill="#d8d8c8"/><circle cx="3" cy="8" r="1.3" fill="#d8d8c8"/><circle cx="3" cy="12.700" r="1.3" fill="#d8d8c8"/></g>
<g transform="translate(1825 644)"><rect width="6" height="16" rx="2.8" fill="#5a5a5a"/><circle cx="3" cy="3.300" r="1.3" fill="#d8d8c8"/><circle cx="3" cy="8" r="1.3" fill="#d8d8c8"/><circle cx="3" cy="12.700" r="1.3" fill="#d8d8c8"/></g>
<g transform="translate(949 562)" stroke="#8a5a1c" stroke-width="1.6" fill="none"><path d="M0 1H8M0 17H8M1 1L7 9L1 17M7 1L1 9L7 17"/></g>
<g transform="translate(1485 640)" stroke="#8a5a1c" stroke-width="1.6" fill="none"><path d="M0 1H8M0 17H8M1 1L7 9L1 17M7 1L1 9L7 17"/></g>
<circle cx="638" cy="488" r="2.2" fill="#ac39ac"/>
<circle cx="957" cy="279" r="2.2" fill="#ac39ac"/>
<circle cx="1007" cy="244" r="2.2" fill="#ac39ac"/>
<circle cx="1060" cy="273" r="2.2" fill="#ac39ac"/>
<circle cx="1050" cy="300" r="2.2" fill="#ac39ac"/>
<circle cx="1049" cy="314" r="2.2" fill="#ac39ac"/>
<circle cx="1048" cy="327" r="2.2" fill="#ac39ac"/>
<circle cx="956" cy="508" r="2.2" fill="#ac39ac"/>
<circle cx="954" cy="521" r="2.2" fill="#ac39ac"/>
<circle cx="1471.7" cy="675" r="2.2" fill="#ac39ac"/>
<circle cx="1470" cy="687" r="2.2" fill="#ac39ac"/>
<circle cx="1469" cy="697" r="2.2" fill="#ac39ac"/>
<circle cx="1465" cy="719" r="2.2" fill="#ac39ac"/>
<circle cx="1464" cy="731" r="2.2" fill="#ac39ac"/>
<circle cx="1697" cy="597" r="2.2" fill="#ac39ac"/>
<circle cx="1717" cy="601" r="2.2" fill="#ac39ac"/>
<circle cx="1737" cy="605" r="2.2" fill="#ac39ac"/>
<circle cx="1770" cy="607" r="2.2" fill="#ac39ac"/>
<circle cx="1790" cy="610" r="2.2" fill="#ac39ac"/>
<circle cx="1824" cy="601" r="2.2" fill="#ac39ac"/>
<circle cx="1824" cy="590" r="2.2" fill="#ac39ac"/>
<circle cx="1826" cy="580" r="2.2" fill="#ac39ac"/>
<circle cx="1855" cy="623" r="2.2" fill="#ac39ac"/>
<circle cx="1806" cy="690" r="2.2" fill="#ac39ac"/>
<circle cx="1817" cy="704" r="2.2" fill="#ac39ac"/>
<circle cx="936" cy="634" r="2.2" fill="#ac39ac"/>
<circle cx="891" cy="660" r="2.2" fill="#ac39ac"/>
<circle cx="1335" cy="1003" r="2.2" fill="#ac39ac"/>
<circle cx="1615" cy="585" r="2.2" fill="#ac39ac"/>
<circle cx="1640" cy="596" r="2.2" fill="#ac39ac"/>
<circle cx="1803" cy="625" r="2.2" fill="#ac39ac"/>
<circle cx="1012" cy="352" r="2.2" fill="#e08000"/>
<circle cx="1052" cy="247" r="2.2" fill="#e08000"/>
<circle cx="1655" cy="600" r="2.2" fill="#e08000"/>
<circle cx="1693" cy="605" r="2.2" fill="#e08000"/>
<circle cx="1705" cy="605" r="2.2" fill="#e08000"/>
<circle cx="1726" cy="618" r="2.2" fill="#e08000"/>
<circle cx="1873" cy="624" r="2.2" fill="#e08000"/>
<circle cx="1358" cy="978" r="2.2" fill="#e08000"/>
<circle cx="876" cy="658" r="1.8" fill="#8a5a1c"/>
<circle cx="1675" cy="704" r="2.5" fill="#9fd49f"/>
<circle cx="1018" cy="503" r="2.5" fill="#9fd49f"/>
<circle cx="1884" cy="607" r="0" fill="#da0010"/>
<text x="402.0" y="267.0" font-size="12.3" text-anchor="middle" dominant-baseline="central" fill="#7b7672" stroke="rgba(224,221,218,.7)" stroke-width="1.5" paint-order="stroke">57</text>
<text x="420.0" y="275.0" font-size="12.3" text-anchor="middle" dominant-baseline="central" fill="#7b7672" stroke="rgba(224,221,218,.7)" stroke-width="1.5" paint-order="stroke">53</text>
<text x="450.0" y="250.0" font-size="12.3" text-anchor="middle" dominant-baseline="central" fill="#7b7672" stroke="rgba(224,221,218,.7)" stroke-width="1.5" paint-order="stroke">47</text>
<text x="475.0" y="248.0" font-size="12.3" text-anchor="middle" dominant-baseline="central" fill="#7b7672" stroke="rgba(224,221,218,.7)" stroke-width="1.5" paint-order="stroke">43</text>
<text x="508" y="240" font-size="12.3" text-anchor="middle" dominant-baseline="central" fill="#7b7672" stroke="rgba(224,221,218,.7)" stroke-width="1.5" paint-order="stroke">35</text>
<text x="547" y="238" font-size="12.3" text-anchor="middle" dominant-baseline="central" fill="#7b7672" stroke="rgba(224,221,218,.7)" stroke-width="1.5" paint-order="stroke">29</text>
<text x="552.0" y="268.0" font-size="12.3" text-anchor="middle" dominant-baseline="central" fill="#7b7672" stroke="rgba(224,221,218,.7)" stroke-width="1.5" paint-order="stroke">25</text>
<text x="557.0" y="286.0" font-size="12.3" text-anchor="middle" dominant-baseline="central" fill="#7b7672" stroke="rgba(224,221,218,.7)" stroke-width="1.5" paint-order="stroke">21</text>
<text x="562.0" y="304.0" font-size="12.3" text-anchor="middle" dominant-baseline="central" fill="#7b7672" stroke="rgba(224,221,218,.7)" stroke-width="1.5" paint-order="stroke">17</text>
<text x="603.0" y="243.0" font-size="12.3" text-anchor="middle" dominant-baseline="central" fill="#7b7672" stroke="rgba(224,221,218,.7)" stroke-width="1.5" paint-order="stroke">38</text>
<text x="605.3" y="260.0" font-size="12.3" text-anchor="middle" dominant-baseline="central" fill="#7b7672" stroke="rgba(224,221,218,.7)" stroke-width="1.5" paint-order="stroke">34</text>
<text x="607.7" y="277.0" font-size="12.3" text-anchor="middle" dominant-baseline="central" fill="#7b7672" stroke="rgba(224,221,218,.7)" stroke-width="1.5" paint-order="stroke">30</text>
<text x="610.0" y="294.0" font-size="12.3" text-anchor="middle" dominant-baseline="central" fill="#7b7672" stroke="rgba(224,221,218,.7)" stroke-width="1.5" paint-order="stroke">28</text>
<text x="618.0" y="320.0" font-size="12.3" text-anchor="middle" dominant-baseline="central" fill="#7b7672" stroke="rgba(224,221,218,.7)" stroke-width="1.5" paint-order="stroke">22</text>
<text x="624.0" y="338.0" font-size="12.3" text-anchor="middle" dominant-baseline="central" fill="#7b7672" stroke="rgba(224,221,218,.7)" stroke-width="1.5" paint-order="stroke">18</text>
<text x="635.0" y="359.0" font-size="12.3" text-anchor="middle" dominant-baseline="central" fill="#7b7672" stroke="rgba(224,221,218,.7)" stroke-width="1.5" paint-order="stroke">14</text>
<text x="642.5" y="377.0" font-size="12.3" text-anchor="middle" dominant-baseline="central" fill="#7b7672" stroke="rgba(224,221,218,.7)" stroke-width="1.5" paint-order="stroke">10</text>
<text x="650.0" y="395.0" font-size="12.3" text-anchor="middle" dominant-baseline="central" fill="#7b7672" stroke="rgba(224,221,218,.7)" stroke-width="1.5" paint-order="stroke">6</text>
<text x="338.0" y="331.0" font-size="12.3" text-anchor="middle" dominant-baseline="central" fill="#7b7672" stroke="rgba(224,221,218,.7)" stroke-width="1.5" paint-order="stroke">44</text>
<text x="365.3" y="332.4" font-size="12.3" text-anchor="middle" dominant-baseline="central" fill="#7b7672" stroke="rgba(224,221,218,.7)" stroke-width="1.5" paint-order="stroke">34</text>
<text x="392.6" y="333.9" font-size="12.3" text-anchor="middle" dominant-baseline="central" fill="#7b7672" stroke="rgba(224,221,218,.7)" stroke-width="1.5" paint-order="stroke">28</text>
<text x="419.9" y="335.3" font-size="12.3" text-anchor="middle" dominant-baseline="central" fill="#7b7672" stroke="rgba(224,221,218,.7)" stroke-width="1.5" paint-order="stroke">22</text>
<text x="447.1" y="336.7" font-size="12.3" text-anchor="middle" dominant-baseline="central" fill="#7b7672" stroke="rgba(224,221,218,.7)" stroke-width="1.5" paint-order="stroke">18</text>
<text x="474.4" y="338.1" font-size="12.3" text-anchor="middle" dominant-baseline="central" fill="#7b7672" stroke="rgba(224,221,218,.7)" stroke-width="1.5" paint-order="stroke">14</text>
<text x="501.7" y="339.6" font-size="12.3" text-anchor="middle" dominant-baseline="central" fill="#7b7672" stroke="rgba(224,221,218,.7)" stroke-width="1.5" paint-order="stroke">10</text>
<text x="529.0" y="341.0" font-size="12.3" text-anchor="middle" dominant-baseline="central" fill="#7b7672" stroke="rgba(224,221,218,.7)" stroke-width="1.5" paint-order="stroke">6</text>
<text x="558" y="342" font-size="12.3" text-anchor="middle" dominant-baseline="central" fill="#7b7672" stroke="rgba(224,221,218,.7)" stroke-width="1.5" paint-order="stroke">2</text>
<text x="362" y="392" font-size="12.3" text-anchor="middle" dominant-baseline="central" fill="#7b7672" stroke="rgba(224,221,218,.7)" stroke-width="1.5" paint-order="stroke">43</text>
<text x="405" y="408" font-size="12.3" text-anchor="middle" dominant-baseline="central" fill="#7b7672" stroke="rgba(224,221,218,.7)" stroke-width="1.5" paint-order="stroke">35</text>
<text x="427.0" y="398.0" font-size="12.3" text-anchor="middle" dominant-baseline="central" fill="#7b7672" stroke="rgba(224,221,218,.7)" stroke-width="1.5" paint-order="stroke">31</text>
<text x="449.5" y="398.2" font-size="12.3" text-anchor="middle" dominant-baseline="central" fill="#7b7672" stroke="rgba(224,221,218,.7)" stroke-width="1.5" paint-order="stroke">27</text>
<text x="472.0" y="398.3" font-size="12.3" text-anchor="middle" dominant-baseline="central" fill="#7b7672" stroke="rgba(224,221,218,.7)" stroke-width="1.5" paint-order="stroke">23</text>
<text x="494.5" y="398.5" font-size="12.3" text-anchor="middle" dominant-baseline="central" fill="#7b7672" stroke="rgba(224,221,218,.7)" stroke-width="1.5" paint-order="stroke">19</text>
<text x="517.0" y="398.7" font-size="12.3" text-anchor="middle" dominant-baseline="central" fill="#7b7672" stroke="rgba(224,221,218,.7)" stroke-width="1.5" paint-order="stroke">13</text>
<text x="539.5" y="398.8" font-size="12.3" text-anchor="middle" dominant-baseline="central" fill="#7b7672" stroke="rgba(224,221,218,.7)" stroke-width="1.5" paint-order="stroke">7</text>
<text x="562.0" y="399.0" font-size="12.3" text-anchor="middle" dominant-baseline="central" fill="#7b7672" stroke="rgba(224,221,218,.7)" stroke-width="1.5" paint-order="stroke">3</text>
<text x="585" y="401" font-size="12.3" text-anchor="middle" dominant-baseline="central" fill="#7b7672" stroke="rgba(224,221,218,.7)" stroke-width="1.5" paint-order="stroke">1</text>
<text x="600.0" y="421.0" font-size="12.3" text-anchor="middle" dominant-baseline="central" fill="#7b7672" stroke="rgba(224,221,218,.7)" stroke-width="1.5" paint-order="stroke">9</text>
<text x="607.5" y="439.5" font-size="12.3" text-anchor="middle" dominant-baseline="central" fill="#7b7672" stroke="rgba(224,221,218,.7)" stroke-width="1.5" paint-order="stroke">5</text>
<text x="615.0" y="458.0" font-size="12.3" text-anchor="middle" dominant-baseline="central" fill="#7b7672" stroke="rgba(224,221,218,.7)" stroke-width="1.5" paint-order="stroke">1</text>
<text x="395" y="468" font-size="12.3" text-anchor="middle" dominant-baseline="central" fill="#7b7672" stroke="rgba(224,221,218,.7)" stroke-width="1.5" paint-order="stroke">231</text>
<text x="414" y="485" font-size="12.3" text-anchor="middle" dominant-baseline="central" fill="#7b7672" stroke="rgba(224,221,218,.7)" stroke-width="1.5" paint-order="stroke">227A</text>
<text x="338.0" y="517.0" font-size="12.3" text-anchor="middle" dominant-baseline="central" fill="#7b7672" stroke="rgba(224,221,218,.7)" stroke-width="1.5" paint-order="stroke">235</text>
<text x="366.0" y="515.3" font-size="12.3" text-anchor="middle" dominant-baseline="central" fill="#7b7672" stroke="rgba(224,221,218,.7)" stroke-width="1.5" paint-order="stroke">233</text>
<text x="394.0" y="513.7" font-size="12.3" text-anchor="middle" dominant-baseline="central" fill="#7b7672" stroke="rgba(224,221,218,.7)" stroke-width="1.5" paint-order="stroke">229</text>
<text x="422.0" y="512.0" font-size="12.3" text-anchor="middle" dominant-baseline="central" fill="#7b7672" stroke="rgba(224,221,218,.7)" stroke-width="1.5" paint-order="stroke">227</text>
<text x="503.0" y="527.0" font-size="12.3" text-anchor="middle" dominant-baseline="central" fill="#7b7672" stroke="rgba(224,221,218,.7)" stroke-width="1.5" paint-order="stroke">219</text>
<text x="547.5" y="525.0" font-size="12.3" text-anchor="middle" dominant-baseline="central" fill="#7b7672" stroke="rgba(224,221,218,.7)" stroke-width="1.5" paint-order="stroke">215</text>
<text x="592.0" y="523.0" font-size="12.3" text-anchor="middle" dominant-baseline="central" fill="#7b7672" stroke="rgba(224,221,218,.7)" stroke-width="1.5" paint-order="stroke">211</text>
<text x="855.0" y="369.0" font-size="12.3" text-anchor="middle" dominant-baseline="central" fill="#7b7672" stroke="rgba(224,221,218,.7)" stroke-width="1.5" paint-order="stroke">28</text>
<text x="873.0" y="365.0" font-size="12.3" text-anchor="middle" dominant-baseline="central" fill="#7b7672" stroke="rgba(224,221,218,.7)" stroke-width="1.5" paint-order="stroke">30</text>
<text x="913.0" y="385.0" font-size="12.3" text-anchor="middle" dominant-baseline="central" fill="#7b7672" stroke="rgba(224,221,218,.7)" stroke-width="1.5" paint-order="stroke">36</text>
<text x="935.5" y="395.0" font-size="12.3" text-anchor="middle" dominant-baseline="central" fill="#7b7672" stroke="rgba(224,221,218,.7)" stroke-width="1.5" paint-order="stroke">38</text>
<text x="958.0" y="405.0" font-size="12.3" text-anchor="middle" dominant-baseline="central" fill="#7b7672" stroke="rgba(224,221,218,.7)" stroke-width="1.5" paint-order="stroke">44</text>
<text x="853.0" y="395.0" font-size="12.3" text-anchor="middle" dominant-baseline="central" fill="#7b7672" stroke="rgba(224,221,218,.7)" stroke-width="1.5" paint-order="stroke">24</text>
<text x="855.0" y="409.0" font-size="12.3" text-anchor="middle" dominant-baseline="central" fill="#7b7672" stroke="rgba(224,221,218,.7)" stroke-width="1.5" paint-order="stroke">22</text>
<text x="860.0" y="434.0" font-size="12.3" text-anchor="middle" dominant-baseline="central" fill="#7b7672" stroke="rgba(224,221,218,.7)" stroke-width="1.5" paint-order="stroke">20</text>
<text x="884.2" y="441.5" font-size="12.3" text-anchor="middle" dominant-baseline="central" fill="#7b7672" stroke="rgba(224,221,218,.7)" stroke-width="1.5" paint-order="stroke">14</text>
<text x="908.5" y="449.0" font-size="12.3" text-anchor="middle" dominant-baseline="central" fill="#7b7672" stroke="rgba(224,221,218,.7)" stroke-width="1.5" paint-order="stroke">12</text>
<text x="932.8" y="456.5" font-size="12.3" text-anchor="middle" dominant-baseline="central" fill="#7b7672" stroke="rgba(224,221,218,.7)" stroke-width="1.5" paint-order="stroke">6</text>
<text x="957.0" y="464.0" font-size="12.3" text-anchor="middle" dominant-baseline="central" fill="#7b7672" stroke="rgba(224,221,218,.7)" stroke-width="1.5" paint-order="stroke">4</text>
<text x="777.0" y="544.0" font-size="12.3" text-anchor="middle" dominant-baseline="central" fill="#7b7672" stroke="rgba(224,221,218,.7)" stroke-width="1.5" paint-order="stroke">203</text>
<text x="808.0" y="547.0" font-size="12.3" text-anchor="middle" dominant-baseline="central" fill="#7b7672" stroke="rgba(224,221,218,.7)" stroke-width="1.5" paint-order="stroke">199</text>
<text x="912.0" y="548.0" font-size="12.3" text-anchor="middle" dominant-baseline="central" fill="#7b7672" stroke="rgba(224,221,218,.7)" stroke-width="1.5" paint-order="stroke">187</text>
<text x="937.0" y="549.0" font-size="12.3" text-anchor="middle" dominant-baseline="central" fill="#7b7672" stroke="rgba(224,221,218,.7)" stroke-width="1.5" paint-order="stroke">185</text>
<text x="960" y="495" font-size="12.3" text-anchor="middle" dominant-baseline="central" fill="#7b7672" stroke="rgba(224,221,218,.7)" stroke-width="1.5" paint-order="stroke">2d</text>
<text x="357.0" y="612.0" font-size="12.3" text-anchor="middle" dominant-baseline="central" fill="#7b7672" stroke="rgba(224,221,218,.7)" stroke-width="1.5" paint-order="stroke">186</text>
<text x="392.7" y="613.3" font-size="12.3" text-anchor="middle" dominant-baseline="central" fill="#7b7672" stroke="rgba(224,221,218,.7)" stroke-width="1.5" paint-order="stroke">184</text>
<text x="428.3" y="614.7" font-size="12.3" text-anchor="middle" dominant-baseline="central" fill="#7b7672" stroke="rgba(224,221,218,.7)" stroke-width="1.5" paint-order="stroke">182</text>
<text x="464.0" y="616.0" font-size="12.3" text-anchor="middle" dominant-baseline="central" fill="#7b7672" stroke="rgba(224,221,218,.7)" stroke-width="1.5" paint-order="stroke">180</text>
<text x="484" y="636" font-size="12.3" text-anchor="middle" dominant-baseline="central" fill="#7b7672" stroke="rgba(224,221,218,.7)" stroke-width="1.5" paint-order="stroke">178</text>
<text x="585.0" y="623.0" font-size="12.3" text-anchor="middle" dominant-baseline="central" fill="#7b7672" stroke="rgba(224,221,218,.7)" stroke-width="1.5" paint-order="stroke">170</text>
<text x="625.0" y="626.0" font-size="12.3" text-anchor="middle" dominant-baseline="central" fill="#7b7672" stroke="rgba(224,221,218,.7)" stroke-width="1.5" paint-order="stroke">168</text>
<text x="665.0" y="629.0" font-size="12.3" text-anchor="middle" dominant-baseline="central" fill="#7b7672" stroke="rgba(224,221,218,.7)" stroke-width="1.5" paint-order="stroke">164</text>
<text x="760.0" y="637.0" font-size="12.3" text-anchor="middle" dominant-baseline="central" fill="#7b7672" stroke="rgba(224,221,218,.7)" stroke-width="1.5" paint-order="stroke">160</text>
<text x="790.0" y="634.0" font-size="12.3" text-anchor="middle" dominant-baseline="central" fill="#7b7672" stroke="rgba(224,221,218,.7)" stroke-width="1.5" paint-order="stroke">158A</text>
<text x="385.0" y="684.0" font-size="12.3" text-anchor="middle" dominant-baseline="central" fill="#7b7672" stroke="rgba(224,221,218,.7)" stroke-width="1.5" paint-order="stroke">114</text>
<text x="425.6" y="711.4" font-size="12.3" text-anchor="middle" dominant-baseline="central" fill="#7b7672" stroke="rgba(224,221,218,.7)" stroke-width="1.5" paint-order="stroke">110</text>
<text x="466.2" y="738.8" font-size="12.3" text-anchor="middle" dominant-baseline="central" fill="#7b7672" stroke="rgba(224,221,218,.7)" stroke-width="1.5" paint-order="stroke">104</text>
<text x="506.8" y="766.2" font-size="12.3" text-anchor="middle" dominant-baseline="central" fill="#7b7672" stroke="rgba(224,221,218,.7)" stroke-width="1.5" paint-order="stroke">100</text>
<text x="547.4" y="793.6" font-size="12.3" text-anchor="middle" dominant-baseline="central" fill="#7b7672" stroke="rgba(224,221,218,.7)" stroke-width="1.5" paint-order="stroke">94</text>
<text x="588.0" y="821.0" font-size="12.3" text-anchor="middle" dominant-baseline="central" fill="#7b7672" stroke="rgba(224,221,218,.7)" stroke-width="1.5" paint-order="stroke">92</text>
<text x="643" y="692" font-size="12.3" text-anchor="middle" dominant-baseline="central" fill="#7b7672" stroke="rgba(224,221,218,.7)" stroke-width="1.5" paint-order="stroke">164A</text>
<text x="770" y="689" font-size="12.3" text-anchor="middle" dominant-baseline="central" fill="#7b7672" stroke="rgba(224,221,218,.7)" stroke-width="1.5" paint-order="stroke">2</text>
<text x="767" y="721" font-size="12.3" text-anchor="middle" dominant-baseline="central" fill="#7b7672" stroke="rgba(224,221,218,.7)" stroke-width="1.5" paint-order="stroke">4</text>
<text x="764" y="752" font-size="12.3" text-anchor="middle" dominant-baseline="central" fill="#7b7672" stroke="rgba(224,221,218,.7)" stroke-width="1.5" paint-order="stroke">6</text>
<text x="762" y="787" font-size="12.3" text-anchor="middle" dominant-baseline="central" fill="#7b7672" stroke="rgba(224,221,218,.7)" stroke-width="1.5" paint-order="stroke">8</text>
<text x="767" y="810" font-size="12.3" text-anchor="middle" dominant-baseline="central" fill="#7b7672" stroke="rgba(224,221,218,.7)" stroke-width="1.5" paint-order="stroke">9</text>
<text x="772" y="825" font-size="12.3" text-anchor="middle" dominant-baseline="central" fill="#7b7672" stroke="rgba(224,221,218,.7)" stroke-width="1.5" paint-order="stroke">10</text>
<text x="783" y="841" font-size="12.3" text-anchor="middle" dominant-baseline="central" fill="#7b7672" stroke="rgba(224,221,218,.7)" stroke-width="1.5" paint-order="stroke">11</text>
<text x="830" y="704" font-size="12.3" text-anchor="middle" dominant-baseline="central" fill="#7b7672" stroke="rgba(224,221,218,.7)" stroke-width="1.5" paint-order="stroke">77</text>
<text x="827" y="736" font-size="12.3" text-anchor="middle" dominant-baseline="central" fill="#7b7672" stroke="rgba(224,221,218,.7)" stroke-width="1.5" paint-order="stroke">75</text>
<text x="824" y="753" font-size="12.3" text-anchor="middle" dominant-baseline="central" fill="#7b7672" stroke="rgba(224,221,218,.7)" stroke-width="1.5" paint-order="stroke">74</text>
<text x="823" y="767" font-size="12.3" text-anchor="middle" dominant-baseline="central" fill="#7b7672" stroke="rgba(224,221,218,.7)" stroke-width="1.5" paint-order="stroke">73</text>
<text x="873.0" y="826.0" font-size="12.3" text-anchor="middle" dominant-baseline="central" fill="#7b7672" stroke="rgba(224,221,218,.7)" stroke-width="1.5" paint-order="stroke">69</text>
<text x="897.0" y="846.3" font-size="12.3" text-anchor="middle" dominant-baseline="central" fill="#7b7672" stroke="rgba(224,221,218,.7)" stroke-width="1.5" paint-order="stroke">67</text>
<text x="921.0" y="866.7" font-size="12.3" text-anchor="middle" dominant-baseline="central" fill="#7b7672" stroke="rgba(224,221,218,.7)" stroke-width="1.5" paint-order="stroke">65</text>
<text x="945.0" y="887.0" font-size="12.3" text-anchor="middle" dominant-baseline="central" fill="#7b7672" stroke="rgba(224,221,218,.7)" stroke-width="1.5" paint-order="stroke">63</text>
<text x="1155.0" y="226.0" font-size="12.3" text-anchor="middle" dominant-baseline="central" fill="#7b7672" stroke="rgba(224,221,218,.7)" stroke-width="1.5" paint-order="stroke">45</text>
<text x="1146.3" y="245.1" font-size="12.3" text-anchor="middle" dominant-baseline="central" fill="#7b7672" stroke="rgba(224,221,218,.7)" stroke-width="1.5" paint-order="stroke">39</text>
<text x="1137.7" y="264.2" font-size="12.3" text-anchor="middle" dominant-baseline="central" fill="#7b7672" stroke="rgba(224,221,218,.7)" stroke-width="1.5" paint-order="stroke">35</text>
<text x="1129.0" y="283.3" font-size="12.3" text-anchor="middle" dominant-baseline="central" fill="#7b7672" stroke="rgba(224,221,218,.7)" stroke-width="1.5" paint-order="stroke">31</text>
<text x="1120.3" y="302.4" font-size="12.3" text-anchor="middle" dominant-baseline="central" fill="#7b7672" stroke="rgba(224,221,218,.7)" stroke-width="1.5" paint-order="stroke">27</text>
<text x="1111.7" y="321.6" font-size="12.3" text-anchor="middle" dominant-baseline="central" fill="#7b7672" stroke="rgba(224,221,218,.7)" stroke-width="1.5" paint-order="stroke">23</text>
<text x="1103.0" y="340.7" font-size="12.3" text-anchor="middle" dominant-baseline="central" fill="#7b7672" stroke="rgba(224,221,218,.7)" stroke-width="1.5" paint-order="stroke">19</text>
<text x="1094.3" y="359.8" font-size="12.3" text-anchor="middle" dominant-baseline="central" fill="#7b7672" stroke="rgba(224,221,218,.7)" stroke-width="1.5" paint-order="stroke">15</text>
<text x="1085.7" y="378.9" font-size="12.3" text-anchor="middle" dominant-baseline="central" fill="#7b7672" stroke="rgba(224,221,218,.7)" stroke-width="1.5" paint-order="stroke">9</text>
<text x="1077.0" y="398.0" font-size="12.3" text-anchor="middle" dominant-baseline="central" fill="#7b7672" stroke="rgba(224,221,218,.7)" stroke-width="1.5" paint-order="stroke">5</text>
<text x="1207.0" y="245.0" font-size="12.3" text-anchor="middle" dominant-baseline="central" fill="#7b7672" stroke="rgba(224,221,218,.7)" stroke-width="1.5" paint-order="stroke">39</text>
<text x="1199.2" y="264.0" font-size="12.3" text-anchor="middle" dominant-baseline="central" fill="#7b7672" stroke="rgba(224,221,218,.7)" stroke-width="1.5" paint-order="stroke">35</text>
<text x="1191.5" y="283.0" font-size="12.3" text-anchor="middle" dominant-baseline="central" fill="#7b7672" stroke="rgba(224,221,218,.7)" stroke-width="1.5" paint-order="stroke">31</text>
<text x="1183.8" y="302.0" font-size="12.3" text-anchor="middle" dominant-baseline="central" fill="#7b7672" stroke="rgba(224,221,218,.7)" stroke-width="1.5" paint-order="stroke">27</text>
<text x="1176.0" y="321.0" font-size="12.3" text-anchor="middle" dominant-baseline="central" fill="#7b7672" stroke="rgba(224,221,218,.7)" stroke-width="1.5" paint-order="stroke">21</text>
<text x="1168.2" y="340.0" font-size="12.3" text-anchor="middle" dominant-baseline="central" fill="#7b7672" stroke="rgba(224,221,218,.7)" stroke-width="1.5" paint-order="stroke">17</text>
<text x="1160.5" y="359.0" font-size="12.3" text-anchor="middle" dominant-baseline="central" fill="#7b7672" stroke="rgba(224,221,218,.7)" stroke-width="1.5" paint-order="stroke">13</text>
<text x="1152.8" y="378.0" font-size="12.3" text-anchor="middle" dominant-baseline="central" fill="#7b7672" stroke="rgba(224,221,218,.7)" stroke-width="1.5" paint-order="stroke">9</text>
<text x="1145.0" y="397.0" font-size="12.3" text-anchor="middle" dominant-baseline="central" fill="#7b7672" stroke="rgba(224,221,218,.7)" stroke-width="1.5" paint-order="stroke">5</text>
<text x="1072.0" y="432.0" font-size="12.3" text-anchor="middle" dominant-baseline="central" fill="#7b7672" stroke="rgba(224,221,218,.7)" stroke-width="1.5" paint-order="stroke">77</text>
<text x="1097.0" y="433.0" font-size="12.3" text-anchor="middle" dominant-baseline="central" fill="#7b7672" stroke="rgba(224,221,218,.7)" stroke-width="1.5" paint-order="stroke">75</text>
<text x="1135" y="425" font-size="12.3" text-anchor="middle" dominant-baseline="central" fill="#7b7672" stroke="rgba(224,221,218,.7)" stroke-width="1.5" paint-order="stroke">1</text>
<text x="1226.0" y="350.0" font-size="12.3" text-anchor="middle" dominant-baseline="central" fill="#7b7672" stroke="rgba(224,221,218,.7)" stroke-width="1.5" paint-order="stroke">18</text>
<text x="1216.7" y="377.3" font-size="12.3" text-anchor="middle" dominant-baseline="central" fill="#7b7672" stroke="rgba(224,221,218,.7)" stroke-width="1.5" paint-order="stroke">12</text>
<text x="1207.3" y="404.7" font-size="12.3" text-anchor="middle" dominant-baseline="central" fill="#7b7672" stroke="rgba(224,221,218,.7)" stroke-width="1.5" paint-order="stroke">6</text>
<text x="1198.0" y="432.0" font-size="12.3" text-anchor="middle" dominant-baseline="central" fill="#7b7672" stroke="rgba(224,221,218,.7)" stroke-width="1.5" paint-order="stroke">2</text>
<text x="1247.0" y="321.0" font-size="12.3" text-anchor="middle" dominant-baseline="central" fill="#7b7672" stroke="rgba(224,221,218,.7)" stroke-width="1.5" paint-order="stroke">78</text>
<text x="1270.0" y="324.5" font-size="12.3" text-anchor="middle" dominant-baseline="central" fill="#7b7672" stroke="rgba(224,221,218,.7)" stroke-width="1.5" paint-order="stroke">74</text>
<text x="1293.0" y="328.0" font-size="12.3" text-anchor="middle" dominant-baseline="central" fill="#7b7672" stroke="rgba(224,221,218,.7)" stroke-width="1.5" paint-order="stroke">72</text>
<text x="1286.0" y="354.0" font-size="12.3" text-anchor="middle" dominant-baseline="central" fill="#7b7672" stroke="rgba(224,221,218,.7)" stroke-width="1.5" paint-order="stroke">17</text>
<text x="1287.5" y="381.0" font-size="12.3" text-anchor="middle" dominant-baseline="central" fill="#7b7672" stroke="rgba(224,221,218,.7)" stroke-width="1.5" paint-order="stroke">11</text>
<text x="1289.0" y="408.0" font-size="12.3" text-anchor="middle" dominant-baseline="central" fill="#7b7672" stroke="rgba(224,221,218,.7)" stroke-width="1.5" paint-order="stroke">5</text>
<text x="1234.0" y="444.0" font-size="12.3" text-anchor="middle" dominant-baseline="central" fill="#7b7672" stroke="rgba(224,221,218,.7)" stroke-width="1.5" paint-order="stroke">63</text>
<text x="1259.0" y="445.0" font-size="12.3" text-anchor="middle" dominant-baseline="central" fill="#7b7672" stroke="rgba(224,221,218,.7)" stroke-width="1.5" paint-order="stroke">57</text>
<text x="1290" y="441" font-size="12.3" text-anchor="middle" dominant-baseline="central" fill="#7b7672" stroke="rgba(224,221,218,.7)" stroke-width="1.5" paint-order="stroke">1</text>
<text x="1349.0" y="361.0" font-size="12.3" text-anchor="middle" dominant-baseline="central" fill="#7b7672" stroke="rgba(224,221,218,.7)" stroke-width="1.5" paint-order="stroke">18</text>
<text x="1347.0" y="380.7" font-size="12.3" text-anchor="middle" dominant-baseline="central" fill="#7b7672" stroke="rgba(224,221,218,.7)" stroke-width="1.5" paint-order="stroke">14</text>
<text x="1345.0" y="400.3" font-size="12.3" text-anchor="middle" dominant-baseline="central" fill="#7b7672" stroke="rgba(224,221,218,.7)" stroke-width="1.5" paint-order="stroke">10</text>
<text x="1343.0" y="420.0" font-size="12.3" text-anchor="middle" dominant-baseline="central" fill="#7b7672" stroke="rgba(224,221,218,.7)" stroke-width="1.5" paint-order="stroke">4</text>
<text x="1363.0" y="337.0" font-size="12.3" text-anchor="middle" dominant-baseline="central" fill="#7b7672" stroke="rgba(224,221,218,.7)" stroke-width="1.5" paint-order="stroke">70</text>
<text x="1383.7" y="346.5" font-size="12.3" text-anchor="middle" dominant-baseline="central" fill="#7b7672" stroke="rgba(224,221,218,.7)" stroke-width="1.5" paint-order="stroke">66</text>
<text x="1404.3" y="356.0" font-size="12.3" text-anchor="middle" dominant-baseline="central" fill="#7b7672" stroke="rgba(224,221,218,.7)" stroke-width="1.5" paint-order="stroke">62</text>
<text x="1425.0" y="365.5" font-size="12.3" text-anchor="middle" dominant-baseline="central" fill="#7b7672" stroke="rgba(224,221,218,.7)" stroke-width="1.5" paint-order="stroke">58</text>
<text x="1445.7" y="375.0" font-size="12.3" text-anchor="middle" dominant-baseline="central" fill="#7b7672" stroke="rgba(224,221,218,.7)" stroke-width="1.5" paint-order="stroke">54</text>
<text x="1466.3" y="384.5" font-size="12.3" text-anchor="middle" dominant-baseline="central" fill="#7b7672" stroke="rgba(224,221,218,.7)" stroke-width="1.5" paint-order="stroke">48</text>
<text x="1487.0" y="394.0" font-size="12.3" text-anchor="middle" dominant-baseline="central" fill="#7b7672" stroke="rgba(224,221,218,.7)" stroke-width="1.5" paint-order="stroke">44</text>
<text x="1397.0" y="420.0" font-size="12.3" text-anchor="middle" dominant-baseline="central" fill="#7b7672" stroke="rgba(224,221,218,.7)" stroke-width="1.5" paint-order="stroke">45</text>
<text x="1420.0" y="421.0" font-size="12.3" text-anchor="middle" dominant-baseline="central" fill="#7b7672" stroke="rgba(224,221,218,.7)" stroke-width="1.5" paint-order="stroke">41</text>
<text x="1390" y="435" font-size="12.3" text-anchor="middle" dominant-baseline="central" fill="#7b7672" stroke="rgba(224,221,218,.7)" stroke-width="1.5" paint-order="stroke">47</text>
<text x="1377" y="450" font-size="12.3" text-anchor="middle" dominant-baseline="central" fill="#7b7672" stroke="rgba(224,221,218,.7)" stroke-width="1.5" paint-order="stroke">51</text>
<text x="1345" y="451" font-size="12.3" text-anchor="middle" dominant-baseline="central" fill="#7b7672" stroke="rgba(224,221,218,.7)" stroke-width="1.5" paint-order="stroke">53</text>
<text x="1452" y="429" font-size="12.3" text-anchor="middle" dominant-baseline="central" fill="#7b7672" stroke="rgba(224,221,218,.7)" stroke-width="1.5" paint-order="stroke">33</text>
<text x="1453" y="451" font-size="12.3" text-anchor="middle" dominant-baseline="central" fill="#7b7672" stroke="rgba(224,221,218,.7)" stroke-width="1.5" paint-order="stroke">37</text>
<text x="1493" y="417" font-size="12.3" text-anchor="middle" dominant-baseline="central" fill="#7b7672" stroke="rgba(224,221,218,.7)" stroke-width="1.5" paint-order="stroke">17</text>
<text x="1268.0" y="275.0" font-size="12.3" text-anchor="middle" dominant-baseline="central" fill="#7b7672" stroke="rgba(224,221,218,.7)" stroke-width="1.5" paint-order="stroke">53</text>
<text x="1288.0" y="276.0" font-size="12.3" text-anchor="middle" dominant-baseline="central" fill="#7b7672" stroke="rgba(224,221,218,.7)" stroke-width="1.5" paint-order="stroke">51</text>
<text x="1322" y="270" font-size="12.3" text-anchor="middle" dominant-baseline="central" fill="#7b7672" stroke="rgba(224,221,218,.7)" stroke-width="1.5" paint-order="stroke">45</text>
<text x="1365" y="280" font-size="12.3" text-anchor="middle" dominant-baseline="central" fill="#7b7672" stroke="rgba(224,221,218,.7)" stroke-width="1.5" paint-order="stroke">37</text>
<text x="1413" y="275" font-size="12.3" text-anchor="middle" dominant-baseline="central" fill="#7b7672" stroke="rgba(224,221,218,.7)" stroke-width="1.5" paint-order="stroke">20</text>
<text x="1340" y="257" font-size="12.3" text-anchor="middle" dominant-baseline="central" fill="#7b7672" stroke="rgba(224,221,218,.7)" stroke-width="1.5" paint-order="stroke">41</text>
<text x="1406" y="257" font-size="12.3" text-anchor="middle" dominant-baseline="central" fill="#7b7672" stroke="rgba(224,221,218,.7)" stroke-width="1.5" paint-order="stroke">18</text>
<text x="1270.0" y="228.0" font-size="12.3" text-anchor="middle" dominant-baseline="central" fill="#7b7672" stroke="rgba(224,221,218,.7)" stroke-width="1.5" paint-order="stroke">28</text>
<text x="1263.0" y="243.0" font-size="12.3" text-anchor="middle" dominant-baseline="central" fill="#7b7672" stroke="rgba(224,221,218,.7)" stroke-width="1.5" paint-order="stroke">24</text>
<text x="1053.0" y="482.0" font-size="12.3" text-anchor="middle" dominant-baseline="central" fill="#7b7672" stroke="rgba(224,221,218,.7)" stroke-width="1.5" paint-order="stroke">126</text>
<text x="1082.2" y="484.0" font-size="12.3" text-anchor="middle" dominant-baseline="central" fill="#7b7672" stroke="rgba(224,221,218,.7)" stroke-width="1.5" paint-order="stroke">122</text>
<text x="1111.3" y="486.0" font-size="12.3" text-anchor="middle" dominant-baseline="central" fill="#7b7672" stroke="rgba(224,221,218,.7)" stroke-width="1.5" paint-order="stroke">116</text>
<text x="1140.5" y="488.0" font-size="12.3" text-anchor="middle" dominant-baseline="central" fill="#7b7672" stroke="rgba(224,221,218,.7)" stroke-width="1.5" paint-order="stroke">110</text>
<text x="1169.6" y="490.0" font-size="12.3" text-anchor="middle" dominant-baseline="central" fill="#7b7672" stroke="rgba(224,221,218,.7)" stroke-width="1.5" paint-order="stroke">104</text>
<text x="1198.8" y="492.0" font-size="12.3" text-anchor="middle" dominant-baseline="central" fill="#7b7672" stroke="rgba(224,221,218,.7)" stroke-width="1.5" paint-order="stroke">98</text>
<text x="1227.9" y="494.0" font-size="12.3" text-anchor="middle" dominant-baseline="central" fill="#7b7672" stroke="rgba(224,221,218,.7)" stroke-width="1.5" paint-order="stroke">92</text>
<text x="1257.1" y="496.0" font-size="12.3" text-anchor="middle" dominant-baseline="central" fill="#7b7672" stroke="rgba(224,221,218,.7)" stroke-width="1.5" paint-order="stroke">86</text>
<text x="1286.2" y="498.0" font-size="12.3" text-anchor="middle" dominant-baseline="central" fill="#7b7672" stroke="rgba(224,221,218,.7)" stroke-width="1.5" paint-order="stroke">82</text>
<text x="1315.4" y="500.0" font-size="12.3" text-anchor="middle" dominant-baseline="central" fill="#7b7672" stroke="rgba(224,221,218,.7)" stroke-width="1.5" paint-order="stroke">76</text>
<text x="1344.5" y="502.0" font-size="12.3" text-anchor="middle" dominant-baseline="central" fill="#7b7672" stroke="rgba(224,221,218,.7)" stroke-width="1.5" paint-order="stroke">70</text>
<text x="1373.7" y="504.0" font-size="12.3" text-anchor="middle" dominant-baseline="central" fill="#7b7672" stroke="rgba(224,221,218,.7)" stroke-width="1.5" paint-order="stroke">64</text>
<text x="1402.8" y="506.0" font-size="12.3" text-anchor="middle" dominant-baseline="central" fill="#7b7672" stroke="rgba(224,221,218,.7)" stroke-width="1.5" paint-order="stroke">58</text>
<text x="1432.0" y="508.0" font-size="12.3" text-anchor="middle" dominant-baseline="central" fill="#7b7672" stroke="rgba(224,221,218,.7)" stroke-width="1.5" paint-order="stroke">54</text>
<text x="1015" y="529" font-size="12.3" text-anchor="middle" dominant-baseline="central" fill="#7b7672" stroke="rgba(224,221,218,.7)" stroke-width="1.5" paint-order="stroke">179b</text>
<text x="1009.0" y="551.0" font-size="12.3" text-anchor="middle" dominant-baseline="central" fill="#7b7672" stroke="rgba(224,221,218,.7)" stroke-width="1.5" paint-order="stroke">179</text>
<text x="1045.5" y="553.0" font-size="12.3" text-anchor="middle" dominant-baseline="central" fill="#7b7672" stroke="rgba(224,221,218,.7)" stroke-width="1.5" paint-order="stroke">175</text>
<text x="1081.9" y="555.0" font-size="12.3" text-anchor="middle" dominant-baseline="central" fill="#7b7672" stroke="rgba(224,221,218,.7)" stroke-width="1.5" paint-order="stroke">171</text>
<text x="1118.4" y="557.0" font-size="12.3" text-anchor="middle" dominant-baseline="central" fill="#7b7672" stroke="rgba(224,221,218,.7)" stroke-width="1.5" paint-order="stroke">167</text>
<text x="1154.8" y="559.0" font-size="12.3" text-anchor="middle" dominant-baseline="central" fill="#7b7672" stroke="rgba(224,221,218,.7)" stroke-width="1.5" paint-order="stroke">163</text>
<text x="1191.3" y="561.0" font-size="12.3" text-anchor="middle" dominant-baseline="central" fill="#7b7672" stroke="rgba(224,221,218,.7)" stroke-width="1.5" paint-order="stroke">159</text>
<text x="1227.7" y="563.0" font-size="12.3" text-anchor="middle" dominant-baseline="central" fill="#7b7672" stroke="rgba(224,221,218,.7)" stroke-width="1.5" paint-order="stroke">155</text>
<text x="1264.2" y="565.0" font-size="12.3" text-anchor="middle" dominant-baseline="central" fill="#7b7672" stroke="rgba(224,221,218,.7)" stroke-width="1.5" paint-order="stroke">151</text>
<text x="1300.6" y="567.0" font-size="12.3" text-anchor="middle" dominant-baseline="central" fill="#7b7672" stroke="rgba(224,221,218,.7)" stroke-width="1.5" paint-order="stroke">147</text>
<text x="1337.1" y="569.0" font-size="12.3" text-anchor="middle" dominant-baseline="central" fill="#7b7672" stroke="rgba(224,221,218,.7)" stroke-width="1.5" paint-order="stroke">143</text>
<text x="1373.5" y="571.0" font-size="12.3" text-anchor="middle" dominant-baseline="central" fill="#7b7672" stroke="rgba(224,221,218,.7)" stroke-width="1.5" paint-order="stroke">139</text>
<text x="1410.0" y="573.0" font-size="12.3" text-anchor="middle" dominant-baseline="central" fill="#7b7672" stroke="rgba(224,221,218,.7)" stroke-width="1.5" paint-order="stroke">133</text>
<text x="1483" y="583" font-size="12.3" text-anchor="middle" dominant-baseline="central" fill="#7b7672" stroke="rgba(224,221,218,.7)" stroke-width="1.5" paint-order="stroke">125</text>
<text x="1558" y="587" font-size="12.3" text-anchor="middle" dominant-baseline="central" fill="#7b7672" stroke="rgba(224,221,218,.7)" stroke-width="1.5" paint-order="stroke">121</text>
<text x="1560.0" y="395.0" font-size="12.3" text-anchor="middle" dominant-baseline="central" fill="#7b7672" stroke="rgba(224,221,218,.7)" stroke-width="1.5" paint-order="stroke">38</text>
<text x="1595.0" y="379.0" font-size="12.3" text-anchor="middle" dominant-baseline="central" fill="#7b7672" stroke="rgba(224,221,218,.7)" stroke-width="1.5" paint-order="stroke">32</text>
<text x="1630.0" y="363.0" font-size="12.3" text-anchor="middle" dominant-baseline="central" fill="#7b7672" stroke="rgba(224,221,218,.7)" stroke-width="1.5" paint-order="stroke">24</text>
<text x="1653.0" y="349.0" font-size="12.3" text-anchor="middle" dominant-baseline="central" fill="#7b7672" stroke="rgba(224,221,218,.7)" stroke-width="1.5" paint-order="stroke">20</text>
<text x="1680.0" y="360.0" font-size="12.3" text-anchor="middle" dominant-baseline="central" fill="#7b7672" stroke="rgba(224,221,218,.7)" stroke-width="1.5" paint-order="stroke">14</text>
<text x="1716" y="356" font-size="12.3" text-anchor="middle" dominant-baseline="central" fill="#7b7672" stroke="rgba(224,221,218,.7)" stroke-width="1.5" paint-order="stroke">8</text>
<text x="1717.0" y="383.0" font-size="12.3" text-anchor="middle" dominant-baseline="central" fill="#7b7672" stroke="rgba(224,221,218,.7)" stroke-width="1.5" paint-order="stroke">17</text>
<text x="1717.7" y="400.3" font-size="12.3" text-anchor="middle" dominant-baseline="central" fill="#7b7672" stroke="rgba(224,221,218,.7)" stroke-width="1.5" paint-order="stroke">13</text>
<text x="1718.3" y="417.7" font-size="12.3" text-anchor="middle" dominant-baseline="central" fill="#7b7672" stroke="rgba(224,221,218,.7)" stroke-width="1.5" paint-order="stroke">9</text>
<text x="1719.0" y="435.0" font-size="12.3" text-anchor="middle" dominant-baseline="central" fill="#7b7672" stroke="rgba(224,221,218,.7)" stroke-width="1.5" paint-order="stroke">5</text>
<text x="1618.0" y="432.0" font-size="12.3" text-anchor="middle" dominant-baseline="central" fill="#7b7672" stroke="rgba(224,221,218,.7)" stroke-width="1.5" paint-order="stroke">23</text>
<text x="1640.0" y="428.0" font-size="12.3" text-anchor="middle" dominant-baseline="central" fill="#7b7672" stroke="rgba(224,221,218,.7)" stroke-width="1.5" paint-order="stroke">19</text>
<text x="1594" y="451" font-size="12.3" text-anchor="middle" dominant-baseline="central" fill="#7b7672" stroke="rgba(224,221,218,.7)" stroke-width="1.5" paint-order="stroke">27</text>
<text x="1667" y="447" font-size="12.3" text-anchor="middle" dominant-baseline="central" fill="#7b7672" stroke="rgba(224,221,218,.7)" stroke-width="1.5" paint-order="stroke">15</text>
<text x="1552.0" y="422.0" font-size="12.3" text-anchor="middle" dominant-baseline="central" fill="#7b7672" stroke="rgba(224,221,218,.7)" stroke-width="1.5" paint-order="stroke">18</text>
<text x="1555.0" y="449.0" font-size="12.3" text-anchor="middle" dominant-baseline="central" fill="#7b7672" stroke="rgba(224,221,218,.7)" stroke-width="1.5" paint-order="stroke">12</text>
<text x="1774" y="368" font-size="12.3" text-anchor="middle" dominant-baseline="central" fill="#7b7672" stroke="rgba(224,221,218,.7)" stroke-width="1.5" paint-order="stroke">20</text>
<text x="1798.0" y="357.0" font-size="12.3" text-anchor="middle" dominant-baseline="central" fill="#7b7672" stroke="rgba(224,221,218,.7)" stroke-width="1.5" paint-order="stroke">4</text>
<text x="1812.0" y="360.0" font-size="12.3" text-anchor="middle" dominant-baseline="central" fill="#7b7672" stroke="rgba(224,221,218,.7)" stroke-width="1.5" paint-order="stroke">2</text>
<text x="1854.0" y="361.0" font-size="12.3" text-anchor="middle" dominant-baseline="central" fill="#7b7672" stroke="rgba(224,221,218,.7)" stroke-width="1.5" paint-order="stroke">28</text>
<text x="1847.0" y="377.0" font-size="12.3" text-anchor="middle" dominant-baseline="central" fill="#7b7672" stroke="rgba(224,221,218,.7)" stroke-width="1.5" paint-order="stroke">32</text>
<text x="1777.0" y="387.0" font-size="12.3" text-anchor="middle" dominant-baseline="central" fill="#7b7672" stroke="rgba(224,221,218,.7)" stroke-width="1.5" paint-order="stroke">18</text>
<text x="1775.0" y="407.0" font-size="12.3" text-anchor="middle" dominant-baseline="central" fill="#7b7672" stroke="rgba(224,221,218,.7)" stroke-width="1.5" paint-order="stroke">14</text>
<text x="1773.0" y="427.0" font-size="12.3" text-anchor="middle" dominant-baseline="central" fill="#7b7672" stroke="rgba(224,221,218,.7)" stroke-width="1.5" paint-order="stroke">10</text>
<text x="1771.0" y="447.0" font-size="12.3" text-anchor="middle" dominant-baseline="central" fill="#7b7672" stroke="rgba(224,221,218,.7)" stroke-width="1.5" paint-order="stroke">4</text>
<text x="1840.0" y="407.0" font-size="12.3" text-anchor="middle" dominant-baseline="central" fill="#7b7672" stroke="rgba(224,221,218,.7)" stroke-width="1.5" paint-order="stroke">38</text>
<text x="1839.5" y="431.0" font-size="12.3" text-anchor="middle" dominant-baseline="central" fill="#7b7672" stroke="rgba(224,221,218,.7)" stroke-width="1.5" paint-order="stroke">44</text>
<text x="1839.0" y="455.0" font-size="12.3" text-anchor="middle" dominant-baseline="central" fill="#7b7672" stroke="rgba(224,221,218,.7)" stroke-width="1.5" paint-order="stroke">48</text>
<text x="1680.0" y="230.0" font-size="12.3" text-anchor="middle" dominant-baseline="central" fill="#7b7672" stroke="rgba(224,221,218,.7)" stroke-width="1.5" paint-order="stroke">7</text>
<text x="1673.0" y="247.5" font-size="12.3" text-anchor="middle" dominant-baseline="central" fill="#7b7672" stroke="rgba(224,221,218,.7)" stroke-width="1.5" paint-order="stroke">11</text>
<text x="1666.0" y="265.0" font-size="12.3" text-anchor="middle" dominant-baseline="central" fill="#7b7672" stroke="rgba(224,221,218,.7)" stroke-width="1.5" paint-order="stroke">15</text>
<text x="1658" y="296" font-size="12.3" text-anchor="middle" dominant-baseline="central" fill="#7b7672" stroke="rgba(224,221,218,.7)" stroke-width="1.5" paint-order="stroke">29</text>
<text x="1687.0" y="301.0" font-size="12.3" text-anchor="middle" dominant-baseline="central" fill="#7b7672" stroke="rgba(224,221,218,.7)" stroke-width="1.5" paint-order="stroke">27</text>
<text x="1706.0" y="294.0" font-size="12.3" text-anchor="middle" dominant-baseline="central" fill="#7b7672" stroke="rgba(224,221,218,.7)" stroke-width="1.5" paint-order="stroke">23</text>
<text x="1740.0" y="290.0" font-size="12.3" text-anchor="middle" dominant-baseline="central" fill="#7b7672" stroke="rgba(224,221,218,.7)" stroke-width="1.5" paint-order="stroke">17</text>
<text x="1758.5" y="293.2" font-size="12.3" text-anchor="middle" dominant-baseline="central" fill="#7b7672" stroke="rgba(224,221,218,.7)" stroke-width="1.5" paint-order="stroke">13</text>
<text x="1777.0" y="296.5" font-size="12.3" text-anchor="middle" dominant-baseline="central" fill="#7b7672" stroke="rgba(224,221,218,.7)" stroke-width="1.5" paint-order="stroke">9</text>
<text x="1795.5" y="299.8" font-size="12.3" text-anchor="middle" dominant-baseline="central" fill="#7b7672" stroke="rgba(224,221,218,.7)" stroke-width="1.5" paint-order="stroke">7</text>
<text x="1814.0" y="303.0" font-size="12.3" text-anchor="middle" dominant-baseline="central" fill="#7b7672" stroke="rgba(224,221,218,.7)" stroke-width="1.5" paint-order="stroke">1</text>
<text x="1790.0" y="226.0" font-size="12.3" text-anchor="middle" dominant-baseline="central" fill="#7b7672" stroke="rgba(224,221,218,.7)" stroke-width="1.5" paint-order="stroke">40</text>
<text x="1814.5" y="229.0" font-size="12.3" text-anchor="middle" dominant-baseline="central" fill="#7b7672" stroke="rgba(224,221,218,.7)" stroke-width="1.5" paint-order="stroke">50</text>
<text x="1839.0" y="232.0" font-size="12.3" text-anchor="middle" dominant-baseline="central" fill="#7b7672" stroke="rgba(224,221,218,.7)" stroke-width="1.5" paint-order="stroke">44</text>
<text x="1873.0" y="243.0" font-size="12.3" text-anchor="middle" dominant-baseline="central" fill="#7b7672" stroke="rgba(224,221,218,.7)" stroke-width="1.5" paint-order="stroke">12</text>
<text x="1869.7" y="267.7" font-size="12.3" text-anchor="middle" dominant-baseline="central" fill="#7b7672" stroke="rgba(224,221,218,.7)" stroke-width="1.5" paint-order="stroke">16</text>
<text x="1866.3" y="292.3" font-size="12.3" text-anchor="middle" dominant-baseline="central" fill="#7b7672" stroke="rgba(224,221,218,.7)" stroke-width="1.5" paint-order="stroke">20</text>
<text x="1863.0" y="317.0" font-size="12.3" text-anchor="middle" dominant-baseline="central" fill="#7b7672" stroke="rgba(224,221,218,.7)" stroke-width="1.5" paint-order="stroke">26</text>
<text x="990.0" y="651.0" font-size="12.3" text-anchor="middle" dominant-baseline="central" fill="#7b7672" stroke="rgba(224,221,218,.7)" stroke-width="1.5" paint-order="stroke">142</text>
<text x="1023.0" y="656.0" font-size="12.3" text-anchor="middle" dominant-baseline="central" fill="#7b7672" stroke="rgba(224,221,218,.7)" stroke-width="1.5" paint-order="stroke">138</text>
<text x="1085" y="656" font-size="12.3" text-anchor="middle" dominant-baseline="central" fill="#7b7672" stroke="rgba(224,221,218,.7)" stroke-width="1.5" paint-order="stroke">130</text>
<text x="1213.0" y="665.0" font-size="12.3" text-anchor="middle" dominant-baseline="central" fill="#7b7672" stroke="rgba(224,221,218,.7)" stroke-width="1.5" paint-order="stroke">114</text>
<text x="1245.0" y="667.0" font-size="12.3" text-anchor="middle" dominant-baseline="central" fill="#7b7672" stroke="rgba(224,221,218,.7)" stroke-width="1.5" paint-order="stroke">110</text>
<text x="1307.0" y="677.0" font-size="12.3" text-anchor="middle" dominant-baseline="central" fill="#7b7672" stroke="rgba(224,221,218,.7)" stroke-width="1.5" paint-order="stroke">106</text>
<text x="1353.7" y="677.0" font-size="12.3" text-anchor="middle" dominant-baseline="central" fill="#7b7672" stroke="rgba(224,221,218,.7)" stroke-width="1.5" paint-order="stroke">100</text>
<text x="1400.3" y="677.0" font-size="12.3" text-anchor="middle" dominant-baseline="central" fill="#7b7672" stroke="rgba(224,221,218,.7)" stroke-width="1.5" paint-order="stroke">94</text>
<text x="1447.0" y="677.0" font-size="12.3" text-anchor="middle" dominant-baseline="central" fill="#7b7672" stroke="rgba(224,221,218,.7)" stroke-width="1.5" paint-order="stroke">90</text>
<text x="972.0" y="681.0" font-size="12.3" text-anchor="middle" dominant-baseline="central" fill="#7b7672" stroke="rgba(224,221,218,.7)" stroke-width="1.5" paint-order="stroke">51</text>
<text x="997.0" y="701.0" font-size="12.3" text-anchor="middle" dominant-baseline="central" fill="#7b7672" stroke="rgba(224,221,218,.7)" stroke-width="1.5" paint-order="stroke">53</text>
<text x="1022.0" y="721.0" font-size="12.3" text-anchor="middle" dominant-baseline="central" fill="#7b7672" stroke="rgba(224,221,218,.7)" stroke-width="1.5" paint-order="stroke">56</text>
<text x="1047.0" y="741.0" font-size="12.3" text-anchor="middle" dominant-baseline="central" fill="#7b7672" stroke="rgba(224,221,218,.7)" stroke-width="1.5" paint-order="stroke">58</text>
<text x="1072.0" y="761.0" font-size="12.3" text-anchor="middle" dominant-baseline="central" fill="#7b7672" stroke="rgba(224,221,218,.7)" stroke-width="1.5" paint-order="stroke">60</text>
<text x="1097.0" y="781.0" font-size="12.3" text-anchor="middle" dominant-baseline="central" fill="#7b7672" stroke="rgba(224,221,218,.7)" stroke-width="1.5" paint-order="stroke">63</text>
<text x="1122.0" y="801.0" font-size="12.3" text-anchor="middle" dominant-baseline="central" fill="#7b7672" stroke="rgba(224,221,218,.7)" stroke-width="1.5" paint-order="stroke">64</text>
<text x="1147.0" y="821.0" font-size="12.3" text-anchor="middle" dominant-baseline="central" fill="#7b7672" stroke="rgba(224,221,218,.7)" stroke-width="1.5" paint-order="stroke">66</text>
<text x="1172.0" y="841.0" font-size="12.3" text-anchor="middle" dominant-baseline="central" fill="#7b7672" stroke="rgba(224,221,218,.7)" stroke-width="1.5" paint-order="stroke">68</text>
<text x="1197.0" y="861.0" font-size="12.3" text-anchor="middle" dominant-baseline="central" fill="#7b7672" stroke="rgba(224,221,218,.7)" stroke-width="1.5" paint-order="stroke">70</text>
<text x="1222.0" y="881.0" font-size="12.3" text-anchor="middle" dominant-baseline="central" fill="#7b7672" stroke="rgba(224,221,218,.7)" stroke-width="1.5" paint-order="stroke">72</text>
<text x="1247.0" y="901.0" font-size="12.3" text-anchor="middle" dominant-baseline="central" fill="#7b7672" stroke="rgba(224,221,218,.7)" stroke-width="1.5" paint-order="stroke">74</text>
<text x="1272.0" y="921.0" font-size="12.3" text-anchor="middle" dominant-baseline="central" fill="#7b7672" stroke="rgba(224,221,218,.7)" stroke-width="1.5" paint-order="stroke">75</text>
<text x="1297.0" y="941.0" font-size="12.3" text-anchor="middle" dominant-baseline="central" fill="#7b7672" stroke="rgba(224,221,218,.7)" stroke-width="1.5" paint-order="stroke">77</text>
<text x="1322.0" y="961.0" font-size="12.3" text-anchor="middle" dominant-baseline="central" fill="#7b7672" stroke="rgba(224,221,218,.7)" stroke-width="1.5" paint-order="stroke">78</text>
<text x="917.0" y="719.0" font-size="12.3" text-anchor="middle" dominant-baseline="central" fill="#7b7672" stroke="rgba(224,221,218,.7)" stroke-width="1.5" paint-order="stroke">49</text>
<text x="945.1" y="742.5" font-size="12.3" text-anchor="middle" dominant-baseline="central" fill="#7b7672" stroke="rgba(224,221,218,.7)" stroke-width="1.5" paint-order="stroke">47</text>
<text x="973.2" y="765.9" font-size="12.3" text-anchor="middle" dominant-baseline="central" fill="#7b7672" stroke="rgba(224,221,218,.7)" stroke-width="1.5" paint-order="stroke">46</text>
<text x="1001.2" y="789.4" font-size="12.3" text-anchor="middle" dominant-baseline="central" fill="#7b7672" stroke="rgba(224,221,218,.7)" stroke-width="1.5" paint-order="stroke">44</text>
<text x="1029.3" y="812.8" font-size="12.3" text-anchor="middle" dominant-baseline="central" fill="#7b7672" stroke="rgba(224,221,218,.7)" stroke-width="1.5" paint-order="stroke">41</text>
<text x="1057.4" y="836.3" font-size="12.3" text-anchor="middle" dominant-baseline="central" fill="#7b7672" stroke="rgba(224,221,218,.7)" stroke-width="1.5" paint-order="stroke">39</text>
<text x="1085.5" y="859.8" font-size="12.3" text-anchor="middle" dominant-baseline="central" fill="#7b7672" stroke="rgba(224,221,218,.7)" stroke-width="1.5" paint-order="stroke">37</text>
<text x="1113.5" y="883.2" font-size="12.3" text-anchor="middle" dominant-baseline="central" fill="#7b7672" stroke="rgba(224,221,218,.7)" stroke-width="1.5" paint-order="stroke">36</text>
<text x="1141.6" y="906.7" font-size="12.3" text-anchor="middle" dominant-baseline="central" fill="#7b7672" stroke="rgba(224,221,218,.7)" stroke-width="1.5" paint-order="stroke">35</text>
<text x="1169.7" y="930.2" font-size="12.3" text-anchor="middle" dominant-baseline="central" fill="#7b7672" stroke="rgba(224,221,218,.7)" stroke-width="1.5" paint-order="stroke">30</text>
<text x="1197.8" y="953.6" font-size="12.3" text-anchor="middle" dominant-baseline="central" fill="#7b7672" stroke="rgba(224,221,218,.7)" stroke-width="1.5" paint-order="stroke">28</text>
<text x="1225.8" y="977.1" font-size="12.3" text-anchor="middle" dominant-baseline="central" fill="#7b7672" stroke="rgba(224,221,218,.7)" stroke-width="1.5" paint-order="stroke">26</text>
<text x="1253.9" y="1000.5" font-size="12.3" text-anchor="middle" dominant-baseline="central" fill="#7b7672" stroke="rgba(224,221,218,.7)" stroke-width="1.5" paint-order="stroke">25</text>
<text x="1282.0" y="1024.0" font-size="12.3" text-anchor="middle" dominant-baseline="central" fill="#7b7672" stroke="rgba(224,221,218,.7)" stroke-width="1.5" paint-order="stroke">23</text>
<text x="1237.0" y="755.0" font-size="12.3" text-anchor="middle" dominant-baseline="central" fill="#7b7672" stroke="rgba(224,221,218,.7)" stroke-width="1.5" paint-order="stroke">62</text>
<text x="1231.5" y="774.0" font-size="12.3" text-anchor="middle" dominant-baseline="central" fill="#7b7672" stroke="rgba(224,221,218,.7)" stroke-width="1.5" paint-order="stroke">59</text>
<text x="1226.0" y="793.0" font-size="12.3" text-anchor="middle" dominant-baseline="central" fill="#7b7672" stroke="rgba(224,221,218,.7)" stroke-width="1.5" paint-order="stroke">57</text>
<text x="1266.0" y="748.0" font-size="12.3" text-anchor="middle" dominant-baseline="central" fill="#7b7672" stroke="rgba(224,221,218,.7)" stroke-width="1.5" paint-order="stroke">64</text>
<text x="1299.0" y="758.0" font-size="12.3" text-anchor="middle" dominant-baseline="central" fill="#7b7672" stroke="rgba(224,221,218,.7)" stroke-width="1.5" paint-order="stroke">68</text>
<text x="1322.0" y="778.0" font-size="12.3" text-anchor="middle" dominant-baseline="central" fill="#7b7672" stroke="rgba(224,221,218,.7)" stroke-width="1.5" paint-order="stroke">71</text>
<text x="1348.5" y="787.5" font-size="12.3" text-anchor="middle" dominant-baseline="central" fill="#7b7672" stroke="rgba(224,221,218,.7)" stroke-width="1.5" paint-order="stroke">74</text>
<text x="1375.0" y="797.0" font-size="12.3" text-anchor="middle" dominant-baseline="central" fill="#7b7672" stroke="rgba(224,221,218,.7)" stroke-width="1.5" paint-order="stroke">78</text>
<text x="1242.0" y="816.0" font-size="12.3" text-anchor="middle" dominant-baseline="central" fill="#7b7672" stroke="rgba(224,221,218,.7)" stroke-width="1.5" paint-order="stroke">55</text>
<text x="1267.8" y="824.4" font-size="12.3" text-anchor="middle" dominant-baseline="central" fill="#7b7672" stroke="rgba(224,221,218,.7)" stroke-width="1.5" paint-order="stroke">52</text>
<text x="1293.6" y="832.8" font-size="12.3" text-anchor="middle" dominant-baseline="central" fill="#7b7672" stroke="rgba(224,221,218,.7)" stroke-width="1.5" paint-order="stroke">50</text>
<text x="1319.4" y="841.2" font-size="12.3" text-anchor="middle" dominant-baseline="central" fill="#7b7672" stroke="rgba(224,221,218,.7)" stroke-width="1.5" paint-order="stroke">46</text>
<text x="1345.2" y="849.6" font-size="12.3" text-anchor="middle" dominant-baseline="central" fill="#7b7672" stroke="rgba(224,221,218,.7)" stroke-width="1.5" paint-order="stroke">43</text>
<text x="1371.0" y="858.0" font-size="12.3" text-anchor="middle" dominant-baseline="central" fill="#7b7672" stroke="rgba(224,221,218,.7)" stroke-width="1.5" paint-order="stroke">39</text>
<text x="1455.0" y="761.0" font-size="12.3" text-anchor="middle" dominant-baseline="central" fill="#7b7672" stroke="rgba(224,221,218,.7)" stroke-width="1.5" paint-order="stroke">88</text>
<text x="1441.0" y="779.0" font-size="12.3" text-anchor="middle" dominant-baseline="central" fill="#7b7672" stroke="rgba(224,221,218,.7)" stroke-width="1.5" paint-order="stroke">86</text>
<text x="1427.0" y="797.0" font-size="12.3" text-anchor="middle" dominant-baseline="central" fill="#7b7672" stroke="rgba(224,221,218,.7)" stroke-width="1.5" paint-order="stroke">83</text>
<text x="1413.0" y="815.0" font-size="12.3" text-anchor="middle" dominant-baseline="central" fill="#7b7672" stroke="rgba(224,221,218,.7)" stroke-width="1.5" paint-order="stroke">81</text>
<text x="1548.0" y="683.0" font-size="12.3" text-anchor="middle" dominant-baseline="central" fill="#7b7672" stroke="rgba(224,221,218,.7)" stroke-width="1.5" paint-order="stroke">86</text>
<text x="1582.7" y="685.4" font-size="12.3" text-anchor="middle" dominant-baseline="central" fill="#7b7672" stroke="rgba(224,221,218,.7)" stroke-width="1.5" paint-order="stroke">82</text>
<text x="1617.4" y="687.9" font-size="12.3" text-anchor="middle" dominant-baseline="central" fill="#7b7672" stroke="rgba(224,221,218,.7)" stroke-width="1.5" paint-order="stroke">78</text>
<text x="1652.1" y="690.3" font-size="12.3" text-anchor="middle" dominant-baseline="central" fill="#7b7672" stroke="rgba(224,221,218,.7)" stroke-width="1.5" paint-order="stroke">76</text>
<text x="1686.9" y="692.7" font-size="12.3" text-anchor="middle" dominant-baseline="central" fill="#7b7672" stroke="rgba(224,221,218,.7)" stroke-width="1.5" paint-order="stroke">70</text>
<text x="1721.6" y="695.1" font-size="12.3" text-anchor="middle" dominant-baseline="central" fill="#7b7672" stroke="rgba(224,221,218,.7)" stroke-width="1.5" paint-order="stroke">66</text>
<text x="1756.3" y="697.6" font-size="12.3" text-anchor="middle" dominant-baseline="central" fill="#7b7672" stroke="rgba(224,221,218,.7)" stroke-width="1.5" paint-order="stroke">62</text>
<text x="1791.0" y="700.0" font-size="12.3" text-anchor="middle" dominant-baseline="central" fill="#7b7672" stroke="rgba(224,221,218,.7)" stroke-width="1.5" paint-order="stroke">58</text>
<text x="1559.0" y="765.0" font-size="12.3" text-anchor="middle" dominant-baseline="central" fill="#7b7672" stroke="rgba(224,221,218,.7)" stroke-width="1.5" paint-order="stroke">191</text>
<text x="1596.8" y="766.5" font-size="12.3" text-anchor="middle" dominant-baseline="central" fill="#7b7672" stroke="rgba(224,221,218,.7)" stroke-width="1.5" paint-order="stroke">179</text>
<text x="1634.5" y="768.0" font-size="12.3" text-anchor="middle" dominant-baseline="central" fill="#7b7672" stroke="rgba(224,221,218,.7)" stroke-width="1.5" paint-order="stroke">193</text>
<text x="1672.2" y="769.5" font-size="12.3" text-anchor="middle" dominant-baseline="central" fill="#7b7672" stroke="rgba(224,221,218,.7)" stroke-width="1.5" paint-order="stroke">183</text>
<text x="1710.0" y="771.0" font-size="12.3" text-anchor="middle" dominant-baseline="central" fill="#7b7672" stroke="rgba(224,221,218,.7)" stroke-width="1.5" paint-order="stroke">175</text>
<text x="1735.0" y="771.0" font-size="12.3" text-anchor="middle" dominant-baseline="central" fill="#7b7672" stroke="rgba(224,221,218,.7)" stroke-width="1.5" paint-order="stroke">151</text>
<text x="1751.5" y="789.0" font-size="12.3" text-anchor="middle" dominant-baseline="central" fill="#7b7672" stroke="rgba(224,221,218,.7)" stroke-width="1.5" paint-order="stroke">143</text>
<text x="1768.0" y="807.0" font-size="12.3" text-anchor="middle" dominant-baseline="central" fill="#7b7672" stroke="rgba(224,221,218,.7)" stroke-width="1.5" paint-order="stroke">141</text>
<text x="1527.0" y="817.0" font-size="12.3" text-anchor="middle" dominant-baseline="central" fill="#7b7672" stroke="rgba(224,221,218,.7)" stroke-width="1.5" paint-order="stroke">144</text>
<text x="1560.2" y="817.8" font-size="12.3" text-anchor="middle" dominant-baseline="central" fill="#7b7672" stroke="rgba(224,221,218,.7)" stroke-width="1.5" paint-order="stroke">134</text>
<text x="1593.5" y="818.5" font-size="12.3" text-anchor="middle" dominant-baseline="central" fill="#7b7672" stroke="rgba(224,221,218,.7)" stroke-width="1.5" paint-order="stroke">126</text>
<text x="1626.8" y="819.2" font-size="12.3" text-anchor="middle" dominant-baseline="central" fill="#7b7672" stroke="rgba(224,221,218,.7)" stroke-width="1.5" paint-order="stroke">120</text>
<text x="1660.0" y="820.0" font-size="12.3" text-anchor="middle" dominant-baseline="central" fill="#7b7672" stroke="rgba(224,221,218,.7)" stroke-width="1.5" paint-order="stroke">112</text>
<text x="1768.0" y="833.0" font-size="12.3" text-anchor="middle" dominant-baseline="central" fill="#7b7672" stroke="rgba(224,221,218,.7)" stroke-width="1.5" paint-order="stroke">135</text>
<text x="1773.0" y="850.3" font-size="12.3" text-anchor="middle" dominant-baseline="central" fill="#7b7672" stroke="rgba(224,221,218,.7)" stroke-width="1.5" paint-order="stroke">131</text>
<text x="1778.0" y="867.6" font-size="12.3" text-anchor="middle" dominant-baseline="central" fill="#7b7672" stroke="rgba(224,221,218,.7)" stroke-width="1.5" paint-order="stroke">127</text>
<text x="1783.0" y="884.9" font-size="12.3" text-anchor="middle" dominant-baseline="central" fill="#7b7672" stroke="rgba(224,221,218,.7)" stroke-width="1.5" paint-order="stroke">123</text>
<text x="1788.0" y="902.1" font-size="12.3" text-anchor="middle" dominant-baseline="central" fill="#7b7672" stroke="rgba(224,221,218,.7)" stroke-width="1.5" paint-order="stroke">119</text>
<text x="1793.0" y="919.4" font-size="12.3" text-anchor="middle" dominant-baseline="central" fill="#7b7672" stroke="rgba(224,221,218,.7)" stroke-width="1.5" paint-order="stroke">115</text>
<text x="1798.0" y="936.7" font-size="12.3" text-anchor="middle" dominant-baseline="central" fill="#7b7672" stroke="rgba(224,221,218,.7)" stroke-width="1.5" paint-order="stroke">109</text>
<text x="1803.0" y="954.0" font-size="12.3" text-anchor="middle" dominant-baseline="central" fill="#7b7672" stroke="rgba(224,221,218,.7)" stroke-width="1.5" paint-order="stroke">105</text>
<text x="1805.0" y="980.0" font-size="12.3" text-anchor="middle" dominant-baseline="central" fill="#7b7672" stroke="rgba(224,221,218,.7)" stroke-width="1.5" paint-order="stroke">101</text>
<text x="1793.0" y="1004.0" font-size="12.3" text-anchor="middle" dominant-baseline="central" fill="#7b7672" stroke="rgba(224,221,218,.7)" stroke-width="1.5" paint-order="stroke">95</text>
<text x="1713.0" y="834.0" font-size="12.3" text-anchor="middle" dominant-baseline="central" fill="#7b7672" stroke="rgba(224,221,218,.7)" stroke-width="1.5" paint-order="stroke">102</text>
<text x="1716.7" y="849.0" font-size="12.3" text-anchor="middle" dominant-baseline="central" fill="#7b7672" stroke="rgba(224,221,218,.7)" stroke-width="1.5" paint-order="stroke">100</text>
<text x="1720.3" y="864.0" font-size="12.3" text-anchor="middle" dominant-baseline="central" fill="#7b7672" stroke="rgba(224,221,218,.7)" stroke-width="1.5" paint-order="stroke">96</text>
<text x="1724.0" y="879.0" font-size="12.3" text-anchor="middle" dominant-baseline="central" fill="#7b7672" stroke="rgba(224,221,218,.7)" stroke-width="1.5" paint-order="stroke">92</text>
<text x="1735.0" y="906.0" font-size="12.3" text-anchor="middle" dominant-baseline="central" fill="#7b7672" stroke="rgba(224,221,218,.7)" stroke-width="1.5" paint-order="stroke">84</text>
<text x="1738.5" y="925.5" font-size="12.3" text-anchor="middle" dominant-baseline="central" fill="#7b7672" stroke="rgba(224,221,218,.7)" stroke-width="1.5" paint-order="stroke">80</text>
<text x="1742.0" y="945.0" font-size="12.3" text-anchor="middle" dominant-baseline="central" fill="#7b7672" stroke="rgba(224,221,218,.7)" stroke-width="1.5" paint-order="stroke">76</text>
<text x="1590.0" y="853.0" font-size="12.3" text-anchor="middle" dominant-baseline="central" fill="#7b7672" stroke="rgba(224,221,218,.7)" stroke-width="1.5" paint-order="stroke">31</text>
<text x="1615.3" y="861.3" font-size="12.3" text-anchor="middle" dominant-baseline="central" fill="#7b7672" stroke="rgba(224,221,218,.7)" stroke-width="1.5" paint-order="stroke">33</text>
<text x="1640.7" y="869.7" font-size="12.3" text-anchor="middle" dominant-baseline="central" fill="#7b7672" stroke="rgba(224,221,218,.7)" stroke-width="1.5" paint-order="stroke">36</text>
<text x="1666.0" y="878.0" font-size="12.3" text-anchor="middle" dominant-baseline="central" fill="#7b7672" stroke="rgba(224,221,218,.7)" stroke-width="1.5" paint-order="stroke">40</text>
<text x="1547.0" y="883.0" font-size="12.3" text-anchor="middle" dominant-baseline="central" fill="#7b7672" stroke="rgba(224,221,218,.7)" stroke-width="1.5" paint-order="stroke">26</text>
<text x="1576.0" y="870.0" font-size="12.3" text-anchor="middle" dominant-baseline="central" fill="#7b7672" stroke="rgba(224,221,218,.7)" stroke-width="1.5" paint-order="stroke">30</text>
<text x="1682.0" y="893.0" font-size="12.3" text-anchor="middle" dominant-baseline="central" fill="#7b7672" stroke="rgba(224,221,218,.7)" stroke-width="1.5" paint-order="stroke">41</text>
<text x="1686.0" y="915.0" font-size="12.3" text-anchor="middle" dominant-baseline="central" fill="#7b7672" stroke="rgba(224,221,218,.7)" stroke-width="1.5" paint-order="stroke">43</text>
<text x="1690.0" y="937.0" font-size="12.3" text-anchor="middle" dominant-baseline="central" fill="#7b7672" stroke="rgba(224,221,218,.7)" stroke-width="1.5" paint-order="stroke">46</text>
<text x="1618.0" y="985.0" font-size="12.3" text-anchor="middle" dominant-baseline="central" fill="#7b7672" stroke="rgba(224,221,218,.7)" stroke-width="1.5" paint-order="stroke">55</text>
<text x="1644.0" y="972.5" font-size="12.3" text-anchor="middle" dominant-baseline="central" fill="#7b7672" stroke="rgba(224,221,218,.7)" stroke-width="1.5" paint-order="stroke">52</text>
<text x="1670.0" y="960.0" font-size="12.3" text-anchor="middle" dominant-baseline="central" fill="#7b7672" stroke="rgba(224,221,218,.7)" stroke-width="1.5" paint-order="stroke">48</text>
<text x="1644.0" y="1022.0" font-size="12.3" text-anchor="middle" dominant-baseline="central" fill="#7b7672" stroke="rgba(224,221,218,.7)" stroke-width="1.5" paint-order="stroke">46</text>
<text x="1671.3" y="1009.7" font-size="12.3" text-anchor="middle" dominant-baseline="central" fill="#7b7672" stroke="rgba(224,221,218,.7)" stroke-width="1.5" paint-order="stroke">56</text>
<text x="1698.7" y="997.3" font-size="12.3" text-anchor="middle" dominant-baseline="central" fill="#7b7672" stroke="rgba(224,221,218,.7)" stroke-width="1.5" paint-order="stroke">62</text>
<text x="1726.0" y="985.0" font-size="12.3" text-anchor="middle" dominant-baseline="central" fill="#7b7672" stroke="rgba(224,221,218,.7)" stroke-width="1.5" paint-order="stroke">68</text>
<text x="1756" y="1032" font-size="12.3" text-anchor="middle" dominant-baseline="central" fill="#7b7672" stroke="rgba(224,221,218,.7)" stroke-width="1.5" paint-order="stroke">87</text>
<text x="1488.0" y="843.0" font-size="12.3" text-anchor="middle" dominant-baseline="central" fill="#7b7672" stroke="rgba(224,221,218,.7)" stroke-width="1.5" paint-order="stroke">4</text>
<text x="1478.5" y="864.0" font-size="12.3" text-anchor="middle" dominant-baseline="central" fill="#7b7672" stroke="rgba(224,221,218,.7)" stroke-width="1.5" paint-order="stroke">7</text>
<text x="1469.0" y="885.0" font-size="12.3" text-anchor="middle" dominant-baseline="central" fill="#7b7672" stroke="rgba(224,221,218,.7)" stroke-width="1.5" paint-order="stroke">10</text>
<text x="1452.0" y="910.0" font-size="12.3" text-anchor="middle" dominant-baseline="central" fill="#7b7672" stroke="rgba(224,221,218,.7)" stroke-width="1.5" paint-order="stroke">13</text>
<text x="1445.2" y="926.8" font-size="12.3" text-anchor="middle" dominant-baseline="central" fill="#7b7672" stroke="rgba(224,221,218,.7)" stroke-width="1.5" paint-order="stroke">15</text>
<text x="1438.5" y="943.5" font-size="12.3" text-anchor="middle" dominant-baseline="central" fill="#7b7672" stroke="rgba(224,221,218,.7)" stroke-width="1.5" paint-order="stroke">18</text>
<text x="1431.8" y="960.2" font-size="12.3" text-anchor="middle" dominant-baseline="central" fill="#7b7672" stroke="rgba(224,221,218,.7)" stroke-width="1.5" paint-order="stroke">20</text>
<text x="1425.0" y="977.0" font-size="12.3" text-anchor="middle" dominant-baseline="central" fill="#7b7672" stroke="rgba(224,221,218,.7)" stroke-width="1.5" paint-order="stroke">22</text>
<text x="1510.0" y="897.0" font-size="12.3" text-anchor="middle" dominant-baseline="central" fill="#7b7672" stroke="rgba(224,221,218,.7)" stroke-width="1.5" paint-order="stroke">22</text>
<text x="1501.0" y="914.3" font-size="12.3" text-anchor="middle" dominant-baseline="central" fill="#7b7672" stroke="rgba(224,221,218,.7)" stroke-width="1.5" paint-order="stroke">21</text>
<text x="1492.0" y="931.7" font-size="12.3" text-anchor="middle" dominant-baseline="central" fill="#7b7672" stroke="rgba(224,221,218,.7)" stroke-width="1.5" paint-order="stroke">19</text>
<text x="1483.0" y="949.0" font-size="12.3" text-anchor="middle" dominant-baseline="central" fill="#7b7672" stroke="rgba(224,221,218,.7)" stroke-width="1.5" paint-order="stroke">16</text>
<text x="1486.0" y="985.0" font-size="12.3" text-anchor="middle" dominant-baseline="central" fill="#7b7672" stroke="rgba(224,221,218,.7)" stroke-width="1.5" paint-order="stroke">13</text>
<text x="1495.0" y="998.0" font-size="12.3" text-anchor="middle" dominant-baseline="central" fill="#7b7672" stroke="rgba(224,221,218,.7)" stroke-width="1.5" paint-order="stroke">11</text>
<text x="1414.0" y="1004.0" font-size="12.3" text-anchor="middle" dominant-baseline="central" fill="#7b7672" stroke="rgba(224,221,218,.7)" stroke-width="1.5" paint-order="stroke">2</text>
<text x="1432.8" y="1013.2" font-size="12.3" text-anchor="middle" dominant-baseline="central" fill="#7b7672" stroke="rgba(224,221,218,.7)" stroke-width="1.5" paint-order="stroke">4</text>
<text x="1451.6" y="1022.4" font-size="12.3" text-anchor="middle" dominant-baseline="central" fill="#7b7672" stroke="rgba(224,221,218,.7)" stroke-width="1.5" paint-order="stroke">6</text>
<text x="1470.4" y="1031.6" font-size="12.3" text-anchor="middle" dominant-baseline="central" fill="#7b7672" stroke="rgba(224,221,218,.7)" stroke-width="1.5" paint-order="stroke">12</text>
<text x="1489.2" y="1040.8" font-size="12.3" text-anchor="middle" dominant-baseline="central" fill="#7b7672" stroke="rgba(224,221,218,.7)" stroke-width="1.5" paint-order="stroke">18</text>
<text x="1508.0" y="1050.0" font-size="12.3" text-anchor="middle" dominant-baseline="central" fill="#7b7672" stroke="rgba(224,221,218,.7)" stroke-width="1.5" paint-order="stroke">24</text>
<text x="1526.0" y="1013.0" font-size="12.3" text-anchor="middle" dominant-baseline="central" fill="#7b7672" stroke="rgba(224,221,218,.7)" stroke-width="1.5" paint-order="stroke">8</text>
<text x="1543.0" y="1006.7" font-size="12.3" text-anchor="middle" dominant-baseline="central" fill="#7b7672" stroke="rgba(224,221,218,.7)" stroke-width="1.5" paint-order="stroke">6</text>
<text x="1560.0" y="1000.3" font-size="12.3" text-anchor="middle" dominant-baseline="central" fill="#7b7672" stroke="rgba(224,221,218,.7)" stroke-width="1.5" paint-order="stroke">3</text>
<text x="1577.0" y="994.0" font-size="12.3" text-anchor="middle" dominant-baseline="central" fill="#7b7672" stroke="rgba(224,221,218,.7)" stroke-width="1.5" paint-order="stroke">1</text>
<text x="1585" y="1047" font-size="12.3" text-anchor="middle" dominant-baseline="central" fill="#7b7672" stroke="rgba(224,221,218,.7)" stroke-width="1.5" paint-order="stroke">40</text>
<text x="1880" y="690" font-size="12.3" text-anchor="middle" dominant-baseline="central" fill="#7b7672" stroke="rgba(224,221,218,.7)" stroke-width="1.5" paint-order="stroke">41</text>
<text x="1864" y="736" font-size="12.3" text-anchor="middle" dominant-baseline="central" fill="#7b7672" stroke="rgba(224,221,218,.7)" stroke-width="1.5" paint-order="stroke">37</text>
<text x="1858" y="770" font-size="12.3" text-anchor="middle" dominant-baseline="central" fill="#7b7672" stroke="rgba(224,221,218,.7)" stroke-width="1.5" paint-order="stroke">33</text>
<text x="1870" y="800" font-size="12.3" text-anchor="middle" dominant-baseline="central" fill="#7b7672" stroke="rgba(224,221,218,.7)" stroke-width="1.5" paint-order="stroke">29</text>
<text x="1877" y="842" font-size="12.3" text-anchor="middle" dominant-baseline="central" fill="#7b7672" stroke="rgba(224,221,218,.7)" stroke-width="1.5" paint-order="stroke">25</text>
<text x="1885" y="858" font-size="12.3" text-anchor="middle" dominant-baseline="central" fill="#7b7672" stroke="rgba(224,221,218,.7)" stroke-width="1.5" paint-order="stroke">23</text>
<text x="1753" y="607" font-size="12.3" text-anchor="middle" dominant-baseline="central" fill="#7b7672" stroke="rgba(224,221,218,.7)" stroke-width="1.5" paint-order="stroke">97</text>
<text x="1396.0" y="856.0" font-size="12.3" text-anchor="middle" dominant-baseline="central" fill="#7b7672" stroke="rgba(224,221,218,.7)" stroke-width="1.5" paint-order="stroke">38A</text>
<text x="1392.6" y="873.2" font-size="12.3" text-anchor="middle" dominant-baseline="central" fill="#7b7672" stroke="rgba(224,221,218,.7)" stroke-width="1.5" paint-order="stroke">37</text>
<text x="1389.2" y="890.4" font-size="12.3" text-anchor="middle" dominant-baseline="central" fill="#7b7672" stroke="rgba(224,221,218,.7)" stroke-width="1.5" paint-order="stroke">35</text>
<text x="1385.8" y="907.6" font-size="12.3" text-anchor="middle" dominant-baseline="central" fill="#7b7672" stroke="rgba(224,221,218,.7)" stroke-width="1.5" paint-order="stroke">33</text>
<text x="1382.4" y="924.8" font-size="12.3" text-anchor="middle" dominant-baseline="central" fill="#7b7672" stroke="rgba(224,221,218,.7)" stroke-width="1.5" paint-order="stroke">31</text>
<text x="1379.0" y="942.0" font-size="12.3" text-anchor="middle" dominant-baseline="central" fill="#7b7672" stroke="rgba(224,221,218,.7)" stroke-width="1.5" paint-order="stroke">29</text>
<text x="1368" y="959" font-size="12.3" text-anchor="middle" dominant-baseline="central" fill="#7b7672" stroke="rgba(224,221,218,.7)" stroke-width="1.5" paint-order="stroke">27-28</text>
<text x="987.0" y="913.0" font-size="12.3" text-anchor="middle" dominant-baseline="central" fill="#7b7672" stroke="rgba(224,221,218,.7)" stroke-width="1.5" paint-order="stroke">60</text>
<text x="1014.0" y="936.0" font-size="12.3" text-anchor="middle" dominant-baseline="central" fill="#7b7672" stroke="rgba(224,221,218,.7)" stroke-width="1.5" paint-order="stroke">57</text>
<text x="1041.0" y="959.0" font-size="12.3" text-anchor="middle" dominant-baseline="central" fill="#7b7672" stroke="rgba(224,221,218,.7)" stroke-width="1.5" paint-order="stroke">55</text>
<text x="1068.0" y="982.0" font-size="12.3" text-anchor="middle" dominant-baseline="central" fill="#7b7672" stroke="rgba(224,221,218,.7)" stroke-width="1.5" paint-order="stroke">53</text>
<text x="1095.0" y="1005.0" font-size="12.3" text-anchor="middle" dominant-baseline="central" fill="#7b7672" stroke="rgba(224,221,218,.7)" stroke-width="1.5" paint-order="stroke">51</text>
<text x="868.0" y="909.0" font-size="12.3" text-anchor="middle" dominant-baseline="central" fill="#7b7672" stroke="rgba(224,221,218,.7)" stroke-width="1.5" paint-order="stroke">18</text>
<text x="881.7" y="931.3" font-size="12.3" text-anchor="middle" dominant-baseline="central" fill="#7b7672" stroke="rgba(224,221,218,.7)" stroke-width="1.5" paint-order="stroke">20</text>
<text x="895.3" y="953.7" font-size="12.3" text-anchor="middle" dominant-baseline="central" fill="#7b7672" stroke="rgba(224,221,218,.7)" stroke-width="1.5" paint-order="stroke">22A</text>
<text x="909.0" y="976.0" font-size="12.3" text-anchor="middle" dominant-baseline="central" fill="#7b7672" stroke="rgba(224,221,218,.7)" stroke-width="1.5" paint-order="stroke">23</text>
<text x="881" y="1014" font-size="12.3" text-anchor="middle" dominant-baseline="central" fill="#7b7672" stroke="rgba(224,221,218,.7)" stroke-width="1.5" paint-order="stroke">24b</text>
<text x="866" y="1042" font-size="12.3" text-anchor="middle" dominant-baseline="central" fill="#7b7672" stroke="rgba(224,221,218,.7)" stroke-width="1.5" paint-order="stroke">52</text>
<text x="962" y="1023" font-size="12.3" text-anchor="middle" dominant-baseline="central" fill="#7b7672" stroke="rgba(224,221,218,.7)" stroke-width="1.5" paint-order="stroke">26</text>
<text x="983.0" y="997.0" font-size="12.3" text-anchor="middle" dominant-baseline="central" fill="#7b7672" stroke="rgba(224,221,218,.7)" stroke-width="1.5" paint-order="stroke">27</text>
<text x="1009.0" y="1021.5" font-size="12.3" text-anchor="middle" dominant-baseline="central" fill="#7b7672" stroke="rgba(224,221,218,.7)" stroke-width="1.5" paint-order="stroke">29</text>
<text x="1035.0" y="1046.0" font-size="12.3" text-anchor="middle" dominant-baseline="central" fill="#7b7672" stroke="rgba(224,221,218,.7)" stroke-width="1.5" paint-order="stroke">31</text>
<text x="690.0" y="899.0" font-size="12.3" text-anchor="middle" dominant-baseline="central" fill="#7b7672" stroke="rgba(224,221,218,.7)" stroke-width="1.5" paint-order="stroke">76</text>
<text x="715.1" y="919.4" font-size="12.3" text-anchor="middle" dominant-baseline="central" fill="#7b7672" stroke="rgba(224,221,218,.7)" stroke-width="1.5" paint-order="stroke">74</text>
<text x="740.3" y="939.9" font-size="12.3" text-anchor="middle" dominant-baseline="central" fill="#7b7672" stroke="rgba(224,221,218,.7)" stroke-width="1.5" paint-order="stroke">70</text>
<text x="765.4" y="960.3" font-size="12.3" text-anchor="middle" dominant-baseline="central" fill="#7b7672" stroke="rgba(224,221,218,.7)" stroke-width="1.5" paint-order="stroke">66</text>
<text x="790.6" y="980.7" font-size="12.3" text-anchor="middle" dominant-baseline="central" fill="#7b7672" stroke="rgba(224,221,218,.7)" stroke-width="1.5" paint-order="stroke">62</text>
<text x="815.7" y="1001.1" font-size="12.3" text-anchor="middle" dominant-baseline="central" fill="#7b7672" stroke="rgba(224,221,218,.7)" stroke-width="1.5" paint-order="stroke">58</text>
<text x="840.9" y="1021.6" font-size="12.3" text-anchor="middle" dominant-baseline="central" fill="#7b7672" stroke="rgba(224,221,218,.7)" stroke-width="1.5" paint-order="stroke">54</text>
<text x="866.0" y="1042.0" font-size="12.3" text-anchor="middle" dominant-baseline="central" fill="#7b7672" stroke="rgba(224,221,218,.7)" stroke-width="1.5" paint-order="stroke">52</text>
<text x="820.0" y="872.0" font-size="12.3" text-anchor="middle" dominant-baseline="central" fill="#7b7672" stroke="rgba(224,221,218,.7)" stroke-width="1.5" paint-order="stroke">14</text>
<text x="843.0" y="893.0" font-size="12.3" text-anchor="middle" dominant-baseline="central" fill="#7b7672" stroke="rgba(224,221,218,.7)" stroke-width="1.5" paint-order="stroke">16</text>
<text x="543" y="893" font-size="12.3" text-anchor="middle" dominant-baseline="central" fill="#7b7672" stroke="rgba(224,221,218,.7)" stroke-width="1.5" paint-order="stroke">81</text>
<text x="729" y="1040" font-size="12.3" text-anchor="middle" dominant-baseline="central" fill="#7b7672" stroke="rgba(224,221,218,.7)" stroke-width="1.5" paint-order="stroke">69</text>
<text x="426" y="1020" font-size="12.3" text-anchor="middle" dominant-baseline="central" fill="#7b7672" stroke="rgba(224,221,218,.7)" stroke-width="1.5" paint-order="stroke">89</text>
<text x="338.0" y="872.0" font-size="12.3" text-anchor="middle" dominant-baseline="central" fill="#7b7672" stroke="rgba(224,221,218,.7)" stroke-width="1.5" paint-order="stroke">2</text>
<text x="367.3" y="877.7" font-size="12.3" text-anchor="middle" dominant-baseline="central" fill="#7b7672" stroke="rgba(224,221,218,.7)" stroke-width="1.5" paint-order="stroke">16</text>
<text x="396.7" y="883.3" font-size="12.3" text-anchor="middle" dominant-baseline="central" fill="#7b7672" stroke="rgba(224,221,218,.7)" stroke-width="1.5" paint-order="stroke">12</text>
<text x="426.0" y="889.0" font-size="12.3" text-anchor="middle" dominant-baseline="central" fill="#7b7672" stroke="rgba(224,221,218,.7)" stroke-width="1.5" paint-order="stroke">6</text>
<text x="461" y="891" font-size="12.3" text-anchor="middle" dominant-baseline="central" fill="#7b7672" stroke="rgba(224,221,218,.7)" stroke-width="1.5" paint-order="stroke">2</text>
<text x="360.0" y="929.0" font-size="12.3" text-anchor="middle" dominant-baseline="central" fill="#7b7672" stroke="rgba(224,221,218,.7)" stroke-width="1.5" paint-order="stroke">15</text>
<text x="377.7" y="931.7" font-size="12.3" text-anchor="middle" dominant-baseline="central" fill="#7b7672" stroke="rgba(224,221,218,.7)" stroke-width="1.5" paint-order="stroke">11</text>
<text x="395.3" y="934.3" font-size="12.3" text-anchor="middle" dominant-baseline="central" fill="#7b7672" stroke="rgba(224,221,218,.7)" stroke-width="1.5" paint-order="stroke">7</text>
<text x="413.0" y="937.0" font-size="12.3" text-anchor="middle" dominant-baseline="central" fill="#7b7672" stroke="rgba(224,221,218,.7)" stroke-width="1.5" paint-order="stroke">5</text>
<text x="441" y="939" font-size="12.3" text-anchor="middle" dominant-baseline="central" fill="#7b7672" stroke="rgba(224,221,218,.7)" stroke-width="1.5" paint-order="stroke">1</text>
</svg>
</div>
<!-- leaflet controls -->
<div style="position:absolute;left:348px;top:233px;width:38px;height:76px;border-radius:19px;background:#fff;border:1px solid #555;box-shadow:0 1px 4px rgba(0,0,0,.35)"></div>
<svg class="ic" style="left:348px;top:233px;width:38px;height:76px" viewBox="0 0 38 76" stroke="#6a6a6a" stroke-width="2" fill="none"><path d="M12 19.500H26M19 12.500V26.500M12 57H26"/></svg>
<div style="position:absolute;left:348px;top:322px;width:38px;height:39px;border-radius:20px;background:#fff;border:1px solid #555;box-shadow:0 1px 4px rgba(0,0,0,.35)"></div>
<svg class="ic" style="left:356px;top:331px;width:22px;height:22px" viewBox="0 0 24 24" fill="#6a6a6a"><path d="M12 2.500L22.500 9 12 15.500 1.500 9Z"/><path d="M2.500 12.800L12 18.700 21.500 12.800M2.500 16.600L12 22.500 21.500 16.600" fill="none" stroke="#6a6a6a" stroke-width="1.700"/></svg>
<!-- attribution -->
<div style="position:absolute;left:1661px;top:1040px;width:237px;height:18px;background:rgba(255,255,255,.72)"></div>
<svg class="ic" style="left:1667px;top:1045px;width:13px;height:8px" viewBox="0 0 12 8"><rect width="12" height="4" fill="#4c7be1"/><rect y="4" width="12" height="4" fill="#ffd500"/></svg>
<div class="t" style="left:1683px;top:1043px;font-size:12px;color:#333;letter-spacing:-0.020px"><span style="color:#0078a8;text-decoration:underline;text-decoration-color:rgba(0,120,168,.35);text-underline-offset:3px">Leaflet</span> | © <span style="color:#0078a8;text-decoration:underline;text-decoration-color:rgba(0,120,168,.35);text-underline-offset:3px">OpenStreetMap</span> contributors</div>
<!-- widget fullscreen icon -->
<svg class="ic" style="left:1864.600px;top:174.500px;width:26px;height:26px" viewBox="0 0 24 24" fill="#262626" ><path d="M7 14H5v5h5v-2H7v-3zm-2-4h2V7h3V5H5v5zm12 7h-3v2h5v-5h-2v3zM14 5v2h3v3h2V5h-5z"/></svg>
<!-- Add EV station button w/ highlight -->
<div style="position:absolute;left:1665px;top:161px;width:197px;height:53px;border-radius:9px;background:#fbc43c;box-shadow:0 0 5px 1px rgba(251,206,120,.55)"></div>
<div style="position:absolute;left:1669px;top:165px;width:189px;height:45px;border-radius:5px;background:#058fc9"></div>
<svg class="ic" style="left:1685.800px;top:175.500px;width:21.500px;height:21.500px" viewBox="0 0 24 24" fill="#fff" ><path d="M19.770 7.230l.01-.01-3.720-3.720L15 4.560l2.110 2.110c-.94.36-1.610 1.260-1.610 2.330 0 1.380 1.120 2.500 2.500 2.500.36 0 .69-.08 1-.21v7.210c0 .55-.45 1-1 1s-1-.45-1-1V14c0-1.100-.9-2-2-2h-1V5c0-1.100-.9-2-2-2H6c-1.100 0-2 .9-2 2v16h10v-7.500h1.500v5c0 1.380 1.120 2.500 2.500 2.500s2.500-1.120 2.500-2.500V9c0-.69-.28-1.320-.73-1.770zM18 10c-.55 0-1-.45-1-1s.45-1 1-1 1 .45 1 1-.45 1-1 1zM8 18v-4.500H6L10 6v5h2l-4 7z"/></svg>
<div class="t" style="left:1715px;top:180px;font-size:17.500px;color:#fff;-webkit-text-stroke:.25px #fff;letter-spacing:0.440px">Add EV station</div>
<!-- callout 1 -->
<svg class="ic" style="left:1600px;top:150px;width:90px;height:70px" viewBox="1600 150 90 70"><defs><filter id="ash" x="-20%" y="-20%" width="150%" height="160%"><feDropShadow dx="1" dy="2" stdDeviation="1.500" flood-color="#5a3b00" flood-opacity=".45"/></filter></defs>
<path d="M1613.500 200.500 C1622 190 1636 181.500 1653 180.500 L1645.500 168.500 L1674.500 186.300 L1648.500 198.500 L1649 189.500 C1638 189.500 1628 193 1620 202 Z" fill="#fbc43c" stroke="#d79a22" stroke-width=".6" filter="url(#ash)"/></svg>
<div style="position:absolute;left:1315px;top:167px;width:28px;height:36px;border-radius:8px;background:#fff;border:3px solid #fbc43c;box-shadow:0 0 4px rgba(251,206,120,.6)"></div>
<div class="t" style="left:1321px;top:172px;font-size:28px;color:#000">1</div>
<div style="position:absolute;left:1289px;top:199px;width:334px;height:42px;border-radius:9px;background:#feeedd;border:3px solid #fbc43c;box-shadow:0 0 4px rgba(251,206,120,.6)"></div>
<div class="t" style="left:1298px;top:207px;font-size:28px;color:#000;letter-spacing:-0.057px">Click on the action button</div>
<!-- cursor -->
<svg class="ic" style="left:1750px;top:198px;width:26px;height:32px" viewBox="0 0 26 32"><path d="M9 2.500c1.400 0 2.300 1 2.300 2.300V11l1-.3c1.100-.2 1.900.3 2.300 1.100 1-.4 2.100 0 2.600 1 1.200-.4 2.600.4 2.600 2V19c0 2.500-1.200 4-1.200 5.500V26H9.500v-1.500C8 23 5.500 19.500 4.600 17.300c-.6-1.500 1.200-2.800 2.400-1.300l-.3-11.200C6.700 3.500 7.600 2.500 9 2.500Z" fill="#fff" stroke="#000" stroke-width="1.300" stroke-linejoin="round"/><path d="M12 14v5M14.700 14.500v4.500M17.300 15v4" stroke="#000" stroke-width="1"/><rect x="8.500" y="25.500" width="10.500" height="5" fill="#f4b223" stroke="#000" stroke-width="1.200"/><rect x="14" y="27" width="3" height="2" fill="#fff" stroke="#000" stroke-width=".6"/></svg>
<!-- gas station marker + label -->
<svg class="ic" style="left:850px;top:593.500px;width:46px;height:46px" viewBox="0 0 24 24" fill="#008000"><path d="M19.770 7.230l.010-.010-3.720-3.720L15 4.560l2.110 2.110c-.940.360-1.610 1.260-1.610 2.330 0 1.380 1.120 2.500 2.500 2.500.360 0 .690-.080 1-.210v7.210c0 .550-.450 1-1 1s-1-.450-1-1V14c0-1.100-.9-2-2-2h-1V5c0-1.100-.9-2-2-2H6c-1.100 0-2 .9-2 2v16h10v-7.500h1.500v5c0 1.380 1.120 2.500 2.500 2.500s2.500-1.120 2.500-2.500V9c0-.690-.280-1.320-.730-1.770zM12 10H6V5h6v5zm6 0c-.550 0-1-.450-1-1s.450-1 1-1 1 .450 1 1-.450 1-1 1z"/></svg>
<div style="position:absolute;left:805.500px;top:556.500px;width:132.500px;height:37.500px;border-radius:11px;background:rgba(255,255,255,.93);border:2px solid #f5a623"></div>
<div class="t" style="left:817px;top:568px;font-size:17.500px;font-weight:700;color:#000;letter-spacing:-0.076px">Gas station 1</div>
<!-- placeholder marker -->
<svg class="ic" style="left:1364px;top:546px;width:50px;height:56px" viewBox="0 0 50 56"><defs><linearGradient id="pg" x1="0" y1="0" x2="0" y2="1"><stop offset="0" stop-color="#fff"/><stop offset="1" stop-color="#d9d9d9"/></linearGradient></defs>
<path d="M21 50 L40 36 L33 30 Z" fill="rgba(0,0,0,.22)"/>
<path d="M21 3.500c-8 0-14.500 6.300-14.500 14.200C6.500 28 17 38 21 50c4-12 14.500-22 14.500-32.300C35.500 9.800 29 3.500 21 3.500Z" fill="url(#pg)" fill-opacity=".9" stroke="#b5b5b5" stroke-width="1.200"/><circle cx="21" cy="17.500" r="6" fill="#e0dfdf" stroke="#a9a9a9" stroke-width="1.500"/></svg>
<!-- tooltip -->
<svg class="ic" style="left:1375px;top:611px;width:20px;height:9px" viewBox="0 0 20 9"><path d="M2 9L10 1L18 9Z" fill="rgba(255,255,255,.5)"/></svg>
<div style="position:absolute;left:1305px;top:619px;width:160px;height:32px;border-radius:5px;background:rgba(50,50,50,.62)"></div>
<div class="t" style="left:1315px;top:628px;font-size:14px;color:#fff;letter-spacing:0.415px">Click to place marker</div>
<!-- callout 2 -->
<svg class="ic" style="left:1390px;top:565px;width:90px;height:50px" viewBox="1390 565 90 50"><path d="M1454.600 575 C1449 584 1437 591 1424 594 L1425 583.700 L1400.500 596.200 L1430.500 613 L1428 602 C1441 600 1453 591 1460.500 575 Z" fill="#fbc43c" stroke="#d79a22" stroke-width=".6" filter="url(#ash)"/></svg>
<div style="position:absolute;left:1462px;top:434px;width:29px;height:36px;border-radius:8px;background:#fff;border:3px solid #fbc43c;box-shadow:0 0 4px rgba(251,206,120,.6)"></div>
<div class="t" style="left:1468px;top:439px;font-size:28px;color:#000">2</div>
<div style="position:absolute;left:1436px;top:466px;width:467px;height:110px;border-radius:9px;background:#feeedd;border:3px solid #fbc43c;box-shadow:0 0 4px rgba(251,206,120,.6)"></div>
<div class="t" style="left:1444px;top:474px;font-size:28px;color:#000;letter-spacing:-0.050px">Find the location on the map</div>
<div class="t" style="left:1444px;top:508px;font-size:28px;color:#000;letter-spacing:-0.053px">where you want to place the marker,</div>
<div class="t" style="left:1444px;top:541px;font-size:28px;color:#000;letter-spacing:-0.046px">and click on it</div>
<!-- cancel -->
<div style="position:absolute;left:1064.500px;top:1006px;width:104px;height:38px;border-radius:19px;background:#fff;border:1px solid #8a8a8a;box-shadow:0 2px 5px rgba(0,0,0,.35)"></div>
<svg class="ic" style="left:1074px;top:1014px;width:22px;height:22px" viewBox="0 0 24 24" fill="#616161" ><path d="M19 6.410L17.590 5 12 10.590 6.410 5 5 6.410 10.590 12 5 17.590 6.410 19 12 13.410 17.590 19 19 17.590 13.410 12z"/></svg>
<div class="t" style="left:1105px;top:1018px;font-size:14px;color:#616161;letter-spacing:0.281px">Cancel</div>


</body></html>
